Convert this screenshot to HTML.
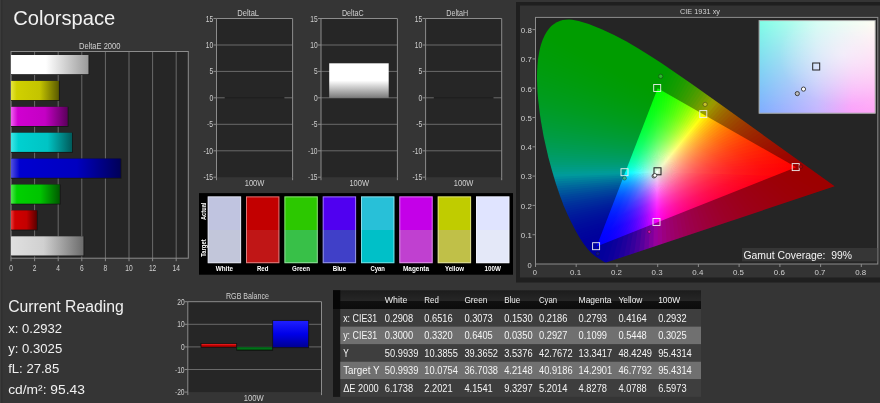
<!DOCTYPE html>
<html><head><meta charset="utf-8"><title>Colorspace</title>
<style>html,body{margin:0;padding:0;background:#343434;overflow:hidden}svg{display:block;font-family:'Liberation Sans', sans-serif;will-change:transform;-webkit-font-smoothing:antialiased}</style>
</head><body>
<svg width="880" height="403" viewBox="0 0 880 403">
<defs>
<linearGradient id="gW" x1="0" y1="0" x2="1" y2="0"><stop offset="0" stop-color="#ffffff"/><stop offset="0.45" stop-color="#ffffff"/><stop offset="1" stop-color="#9a9a9a"/></linearGradient>
<linearGradient id="gY" x1="0" y1="0" x2="1" y2="0"><stop offset="0" stop-color="#e6e640"/><stop offset="0.12" stop-color="#d0d000"/><stop offset="0.6" stop-color="#c4c400"/><stop offset="1" stop-color="#5a5a00"/></linearGradient>
<linearGradient id="gM" x1="0" y1="0" x2="1" y2="0"><stop offset="0" stop-color="#f060f0"/><stop offset="0.12" stop-color="#d000d0"/><stop offset="0.6" stop-color="#c400c4"/><stop offset="1" stop-color="#5a005a"/></linearGradient>
<linearGradient id="gC" x1="0" y1="0" x2="1" y2="0"><stop offset="0" stop-color="#40e6e6"/><stop offset="0.12" stop-color="#00d0d0"/><stop offset="0.6" stop-color="#00c4c4"/><stop offset="1" stop-color="#005a5a"/></linearGradient>
<linearGradient id="gB" x1="0" y1="0" x2="1" y2="0"><stop offset="0" stop-color="#5050e0"/><stop offset="0.08" stop-color="#0000d0"/><stop offset="0.6" stop-color="#0000c0"/><stop offset="1" stop-color="#000058"/></linearGradient>
<linearGradient id="gG" x1="0" y1="0" x2="1" y2="0"><stop offset="0" stop-color="#50e650"/><stop offset="0.12" stop-color="#00d000"/><stop offset="0.6" stop-color="#00c400"/><stop offset="1" stop-color="#005a00"/></linearGradient>
<linearGradient id="gR" x1="0" y1="0" x2="1" y2="0"><stop offset="0" stop-color="#e64040"/><stop offset="0.15" stop-color="#d00000"/><stop offset="0.6" stop-color="#c40000"/><stop offset="1" stop-color="#5a0000"/></linearGradient>
<linearGradient id="gL" x1="0" y1="0" x2="1" y2="0"><stop offset="0" stop-color="#e0e0e0"/><stop offset="0.45" stop-color="#d0d0d0"/><stop offset="1" stop-color="#6c6c6c"/></linearGradient>
<linearGradient id="gDC" x1="0" y1="0" x2="0" y2="1"><stop offset="0" stop-color="#ffffff"/><stop offset="0.5" stop-color="#ffffff"/><stop offset="1" stop-color="#7a7a7a"/></linearGradient>
<mask id="hs" maskUnits="userSpaceOnUse" x="530" y="10" width="350" height="260"><polygon points="606.1,262.6 605.3,262.5 603.8,261.7 595.3,256.2 591.4,253.0 588.1,249.5 583.8,244.1 580.1,238.6 575.9,231.2 571.0,221.7 567.3,214.1 563.5,205.2 559.7,195.1 555.9,183.7 552.1,171.1 548.4,157.5 545.1,143.1 543.5,135.7 540.9,121.0 539.8,113.6 538.1,99.0 537.5,92.0 537.0,78.5 537.1,72.1 537.4,66.0 537.9,60.0 538.8,54.4 539.8,49.1 541.1,44.2 542.7,39.7 544.6,35.6 546.6,31.9 548.9,28.7 551.3,26.1 554.0,23.9 556.8,22.2 559.7,21.0 562.7,20.1 565.8,19.7 568.9,19.6 572.1,19.8 578.7,21.1 582.0,21.9 588.7,24.1 601.7,29.2 614.1,35.0 626.1,41.3 637.9,48.2 649.6,55.5 661.3,63.1 690.4,83.1 722.1,105.5 834.7,186.3" fill="#fff"/></mask>
<mask id="tri" maskUnits="userSpaceOnUse" x="530" y="10" width="350" height="260"><polygon points="796.2,167.3 657.7,88.2 596.6,246.4" fill="#fff"/></mask>
<linearGradient id="w0" gradientUnits="userSpaceOnUse" x1="657.3" y1="171.7" x2="779.6" y2="173.9"><stop offset="0" stop-color="#ffffff"/><stop offset="0.04" stop-color="#ffdbdc"/><stop offset="0.08" stop-color="#ffbec0"/><stop offset="0.13" stop-color="#ffa0a3"/><stop offset="0.2" stop-color="#ff7d82"/><stop offset="0.3" stop-color="#ff575e"/><stop offset="0.42" stop-color="#ff3940"/><stop offset="0.58" stop-color="#ff1e27"/><stop offset="0.78" stop-color="#ff0b14"/><stop offset="1" stop-color="#ff0007"/></linearGradient>
<linearGradient id="w1" gradientUnits="userSpaceOnUse" x1="657.3" y1="171.7" x2="770.1" y2="177.6"><stop offset="0" stop-color="#ffffff"/><stop offset="0.04" stop-color="#ffdcdf"/><stop offset="0.08" stop-color="#ffc0c4"/><stop offset="0.13" stop-color="#ffa3a9"/><stop offset="0.2" stop-color="#ff8089"/><stop offset="0.3" stop-color="#ff5b66"/><stop offset="0.42" stop-color="#ff3b48"/><stop offset="0.58" stop-color="#ff202e"/><stop offset="0.78" stop-color="#ff0c1a"/><stop offset="1" stop-color="#ff000d"/></linearGradient>
<linearGradient id="w2" gradientUnits="userSpaceOnUse" x1="657.3" y1="171.7" x2="761.9" y2="180.9"><stop offset="0" stop-color="#ffffff"/><stop offset="0.04" stop-color="#ffdee1"/><stop offset="0.08" stop-color="#ffc2c8"/><stop offset="0.13" stop-color="#ffa5ae"/><stop offset="0.2" stop-color="#ff848f"/><stop offset="0.3" stop-color="#ff5e6d"/><stop offset="0.42" stop-color="#ff3e4f"/><stop offset="0.58" stop-color="#ff2235"/><stop offset="0.78" stop-color="#ff0d20"/><stop offset="1" stop-color="#ff0012"/></linearGradient>
<linearGradient id="w3" gradientUnits="userSpaceOnUse" x1="657.3" y1="171.7" x2="754.8" y2="183.7"><stop offset="0" stop-color="#ffffff"/><stop offset="0.04" stop-color="#ffdfe3"/><stop offset="0.08" stop-color="#ffc4cb"/><stop offset="0.13" stop-color="#ffa8b2"/><stop offset="0.2" stop-color="#ff8695"/><stop offset="0.3" stop-color="#ff6173"/><stop offset="0.42" stop-color="#ff4056"/><stop offset="0.58" stop-color="#ff233b"/><stop offset="0.78" stop-color="#ff0d26"/><stop offset="1" stop-color="#ff0017"/></linearGradient>
<linearGradient id="w4" gradientUnits="userSpaceOnUse" x1="657.3" y1="171.7" x2="748.5" y2="186.2"><stop offset="0" stop-color="#ffffff"/><stop offset="0.04" stop-color="#ffe0e4"/><stop offset="0.08" stop-color="#ffc6ce"/><stop offset="0.13" stop-color="#ffaab6"/><stop offset="0.2" stop-color="#ff899a"/><stop offset="0.3" stop-color="#ff6479"/><stop offset="0.42" stop-color="#ff425c"/><stop offset="0.58" stop-color="#ff2542"/><stop offset="0.78" stop-color="#ff0e2c"/><stop offset="1" stop-color="#ff001c"/></linearGradient>
<linearGradient id="w5" gradientUnits="userSpaceOnUse" x1="657.3" y1="171.7" x2="743.0" y2="188.4"><stop offset="0" stop-color="#ffffff"/><stop offset="0.04" stop-color="#ffe1e6"/><stop offset="0.08" stop-color="#ffc7d0"/><stop offset="0.13" stop-color="#ffacb9"/><stop offset="0.2" stop-color="#ff8b9e"/><stop offset="0.3" stop-color="#ff667f"/><stop offset="0.42" stop-color="#ff4562"/><stop offset="0.58" stop-color="#ff2647"/><stop offset="0.78" stop-color="#ff0e31"/><stop offset="1" stop-color="#ff0021"/></linearGradient>
<linearGradient id="w6" gradientUnits="userSpaceOnUse" x1="657.3" y1="171.7" x2="738.0" y2="190.4"><stop offset="0" stop-color="#ffffff"/><stop offset="0.04" stop-color="#ffe2e7"/><stop offset="0.08" stop-color="#ffc8d2"/><stop offset="0.13" stop-color="#ffaebc"/><stop offset="0.2" stop-color="#ff8ea2"/><stop offset="0.3" stop-color="#ff6884"/><stop offset="0.42" stop-color="#ff4668"/><stop offset="0.58" stop-color="#ff274d"/><stop offset="0.78" stop-color="#ff0f37"/><stop offset="1" stop-color="#ff0026"/></linearGradient>
<linearGradient id="w7" gradientUnits="userSpaceOnUse" x1="657.3" y1="171.7" x2="733.5" y2="192.2"><stop offset="0" stop-color="#ffffff"/><stop offset="0.04" stop-color="#ffe3e8"/><stop offset="0.08" stop-color="#ffcad4"/><stop offset="0.13" stop-color="#ffafbf"/><stop offset="0.2" stop-color="#ff8fa6"/><stop offset="0.3" stop-color="#ff6a89"/><stop offset="0.42" stop-color="#ff486d"/><stop offset="0.58" stop-color="#ff2952"/><stop offset="0.78" stop-color="#ff0f3c"/><stop offset="1" stop-color="#ff002b"/></linearGradient>
<linearGradient id="w8" gradientUnits="userSpaceOnUse" x1="657.3" y1="171.7" x2="729.4" y2="193.8"><stop offset="0" stop-color="#ffffff"/><stop offset="0.04" stop-color="#ffe3e9"/><stop offset="0.08" stop-color="#ffcbd6"/><stop offset="0.13" stop-color="#ffb1c2"/><stop offset="0.2" stop-color="#ff91aa"/><stop offset="0.3" stop-color="#ff6c8d"/><stop offset="0.42" stop-color="#ff4a72"/><stop offset="0.58" stop-color="#ff2a58"/><stop offset="0.78" stop-color="#ff1041"/><stop offset="1" stop-color="#ff0030"/></linearGradient>
<linearGradient id="w9" gradientUnits="userSpaceOnUse" x1="657.3" y1="171.7" x2="725.6" y2="195.3"><stop offset="0" stop-color="#ffffff"/><stop offset="0.04" stop-color="#ffe4ea"/><stop offset="0.08" stop-color="#ffccd8"/><stop offset="0.13" stop-color="#ffb2c5"/><stop offset="0.2" stop-color="#ff93ad"/><stop offset="0.3" stop-color="#ff6e91"/><stop offset="0.42" stop-color="#ff4c77"/><stop offset="0.58" stop-color="#ff2b5c"/><stop offset="0.78" stop-color="#ff1046"/><stop offset="1" stop-color="#ff0034"/></linearGradient>
<linearGradient id="w10" gradientUnits="userSpaceOnUse" x1="657.3" y1="171.7" x2="722.2" y2="196.6"><stop offset="0" stop-color="#ffffff"/><stop offset="0.04" stop-color="#ffe5eb"/><stop offset="0.08" stop-color="#ffcdda"/><stop offset="0.13" stop-color="#ffb3c7"/><stop offset="0.2" stop-color="#ff94b0"/><stop offset="0.3" stop-color="#ff7095"/><stop offset="0.42" stop-color="#ff4d7b"/><stop offset="0.58" stop-color="#ff2c61"/><stop offset="0.78" stop-color="#ff114a"/><stop offset="1" stop-color="#ff0039"/></linearGradient>
<linearGradient id="w11" gradientUnits="userSpaceOnUse" x1="657.3" y1="171.7" x2="719.0" y2="197.9"><stop offset="0" stop-color="#ffffff"/><stop offset="0.04" stop-color="#ffe5ec"/><stop offset="0.08" stop-color="#ffcedc"/><stop offset="0.13" stop-color="#ffb4c9"/><stop offset="0.2" stop-color="#ff96b3"/><stop offset="0.3" stop-color="#ff7199"/><stop offset="0.42" stop-color="#ff4f80"/><stop offset="0.58" stop-color="#ff2d66"/><stop offset="0.78" stop-color="#ff114f"/><stop offset="1" stop-color="#ff003d"/></linearGradient>
<linearGradient id="w12" gradientUnits="userSpaceOnUse" x1="657.3" y1="171.7" x2="716.0" y2="199.1"><stop offset="0" stop-color="#ffffff"/><stop offset="0.04" stop-color="#ffe6ed"/><stop offset="0.08" stop-color="#ffcfdd"/><stop offset="0.13" stop-color="#ffb6cb"/><stop offset="0.2" stop-color="#ff97b6"/><stop offset="0.3" stop-color="#ff739d"/><stop offset="0.42" stop-color="#ff5084"/><stop offset="0.58" stop-color="#ff2e6a"/><stop offset="0.78" stop-color="#ff1253"/><stop offset="1" stop-color="#ff0042"/></linearGradient>
<linearGradient id="w13" gradientUnits="userSpaceOnUse" x1="657.3" y1="171.7" x2="713.2" y2="200.2"><stop offset="0" stop-color="#ffffff"/><stop offset="0.04" stop-color="#ffe6ee"/><stop offset="0.08" stop-color="#ffd0de"/><stop offset="0.13" stop-color="#ffb7cd"/><stop offset="0.2" stop-color="#ff98b9"/><stop offset="0.3" stop-color="#ff74a0"/><stop offset="0.42" stop-color="#ff5188"/><stop offset="0.58" stop-color="#ff2f6f"/><stop offset="0.78" stop-color="#ff1258"/><stop offset="1" stop-color="#ff0046"/></linearGradient>
<linearGradient id="w14" gradientUnits="userSpaceOnUse" x1="657.3" y1="171.7" x2="710.5" y2="201.3"><stop offset="0" stop-color="#ffffff"/><stop offset="0.04" stop-color="#ffe7ef"/><stop offset="0.08" stop-color="#ffd0e0"/><stop offset="0.13" stop-color="#ffb8cf"/><stop offset="0.2" stop-color="#ff9abb"/><stop offset="0.3" stop-color="#ff76a3"/><stop offset="0.42" stop-color="#ff538c"/><stop offset="0.58" stop-color="#ff3073"/><stop offset="0.78" stop-color="#ff135c"/><stop offset="1" stop-color="#ff004a"/></linearGradient>
<linearGradient id="w15" gradientUnits="userSpaceOnUse" x1="657.3" y1="171.7" x2="708.1" y2="202.2"><stop offset="0" stop-color="#ffffff"/><stop offset="0.04" stop-color="#ffe7ef"/><stop offset="0.08" stop-color="#ffd1e1"/><stop offset="0.13" stop-color="#ffb9d1"/><stop offset="0.2" stop-color="#ff9bbe"/><stop offset="0.3" stop-color="#ff77a6"/><stop offset="0.42" stop-color="#ff548f"/><stop offset="0.58" stop-color="#ff3177"/><stop offset="0.78" stop-color="#ff1360"/><stop offset="1" stop-color="#ff004f"/></linearGradient>
<linearGradient id="w16" gradientUnits="userSpaceOnUse" x1="657.3" y1="171.7" x2="705.7" y2="203.2"><stop offset="0" stop-color="#ffffff"/><stop offset="0.04" stop-color="#ffe8f0"/><stop offset="0.08" stop-color="#ffd2e2"/><stop offset="0.13" stop-color="#ffb9d3"/><stop offset="0.2" stop-color="#ff9cc0"/><stop offset="0.3" stop-color="#ff78a9"/><stop offset="0.42" stop-color="#ff5593"/><stop offset="0.58" stop-color="#ff327b"/><stop offset="0.78" stop-color="#ff1365"/><stop offset="1" stop-color="#ff0053"/></linearGradient>
<linearGradient id="w17" gradientUnits="userSpaceOnUse" x1="657.3" y1="171.7" x2="703.5" y2="204.1"><stop offset="0" stop-color="#ffffff"/><stop offset="0.04" stop-color="#ffe8f1"/><stop offset="0.08" stop-color="#ffd3e3"/><stop offset="0.13" stop-color="#ffbad5"/><stop offset="0.2" stop-color="#ff9dc2"/><stop offset="0.3" stop-color="#ff79ac"/><stop offset="0.42" stop-color="#ff5696"/><stop offset="0.58" stop-color="#ff327f"/><stop offset="0.78" stop-color="#ff1469"/><stop offset="1" stop-color="#ff0057"/></linearGradient>
<linearGradient id="w18" gradientUnits="userSpaceOnUse" x1="657.3" y1="171.7" x2="701.3" y2="204.9"><stop offset="0" stop-color="#ffffff"/><stop offset="0.04" stop-color="#ffe8f1"/><stop offset="0.08" stop-color="#ffd3e5"/><stop offset="0.13" stop-color="#ffbbd6"/><stop offset="0.2" stop-color="#ff9ec5"/><stop offset="0.3" stop-color="#ff7aaf"/><stop offset="0.42" stop-color="#ff579a"/><stop offset="0.58" stop-color="#ff3383"/><stop offset="0.78" stop-color="#ff146d"/><stop offset="1" stop-color="#ff005b"/></linearGradient>
<linearGradient id="w19" gradientUnits="userSpaceOnUse" x1="657.3" y1="171.7" x2="699.3" y2="205.7"><stop offset="0" stop-color="#ffffff"/><stop offset="0.04" stop-color="#ffe9f2"/><stop offset="0.08" stop-color="#ffd4e6"/><stop offset="0.13" stop-color="#ffbcd8"/><stop offset="0.2" stop-color="#ff9fc7"/><stop offset="0.3" stop-color="#ff7bb2"/><stop offset="0.42" stop-color="#ff589d"/><stop offset="0.58" stop-color="#ff3487"/><stop offset="0.78" stop-color="#ff1571"/><stop offset="1" stop-color="#ff005f"/></linearGradient>
<linearGradient id="w20" gradientUnits="userSpaceOnUse" x1="657.3" y1="171.7" x2="697.3" y2="206.5"><stop offset="0" stop-color="#ffffff"/><stop offset="0.04" stop-color="#ffe9f3"/><stop offset="0.08" stop-color="#ffd5e7"/><stop offset="0.13" stop-color="#ffbdd9"/><stop offset="0.2" stop-color="#ffa0c9"/><stop offset="0.3" stop-color="#ff7cb5"/><stop offset="0.42" stop-color="#ff59a0"/><stop offset="0.58" stop-color="#ff358a"/><stop offset="0.78" stop-color="#ff1575"/><stop offset="1" stop-color="#ff0064"/></linearGradient>
<linearGradient id="w21" gradientUnits="userSpaceOnUse" x1="657.3" y1="171.7" x2="695.4" y2="207.3"><stop offset="0" stop-color="#ffffff"/><stop offset="0.04" stop-color="#ffeaf3"/><stop offset="0.08" stop-color="#ffd5e8"/><stop offset="0.13" stop-color="#ffbedb"/><stop offset="0.2" stop-color="#ffa0cb"/><stop offset="0.3" stop-color="#ff7db7"/><stop offset="0.42" stop-color="#ff5aa4"/><stop offset="0.58" stop-color="#ff358e"/><stop offset="0.78" stop-color="#ff1579"/><stop offset="1" stop-color="#ff0068"/></linearGradient>
<linearGradient id="w22" gradientUnits="userSpaceOnUse" x1="657.3" y1="171.7" x2="693.5" y2="208.0"><stop offset="0" stop-color="#ffffff"/><stop offset="0.04" stop-color="#ffeaf4"/><stop offset="0.08" stop-color="#ffd6e9"/><stop offset="0.13" stop-color="#ffbedc"/><stop offset="0.2" stop-color="#ffa1cd"/><stop offset="0.3" stop-color="#ff7eba"/><stop offset="0.42" stop-color="#ff5ba7"/><stop offset="0.58" stop-color="#ff3692"/><stop offset="0.78" stop-color="#ff167d"/><stop offset="1" stop-color="#ff006c"/></linearGradient>
<linearGradient id="w23" gradientUnits="userSpaceOnUse" x1="657.3" y1="171.7" x2="691.8" y2="208.7"><stop offset="0" stop-color="#ffffff"/><stop offset="0.04" stop-color="#ffeaf4"/><stop offset="0.08" stop-color="#ffd6ea"/><stop offset="0.13" stop-color="#ffbfde"/><stop offset="0.2" stop-color="#ffa2cf"/><stop offset="0.3" stop-color="#ff7fbc"/><stop offset="0.42" stop-color="#ff5caa"/><stop offset="0.58" stop-color="#ff3795"/><stop offset="0.78" stop-color="#ff1681"/><stop offset="1" stop-color="#ff0070"/></linearGradient>
<linearGradient id="w24" gradientUnits="userSpaceOnUse" x1="657.3" y1="171.7" x2="690.0" y2="209.4"><stop offset="0" stop-color="#ffffff"/><stop offset="0.04" stop-color="#ffebf5"/><stop offset="0.08" stop-color="#ffd7eb"/><stop offset="0.13" stop-color="#ffc0df"/><stop offset="0.2" stop-color="#ffa3d1"/><stop offset="0.3" stop-color="#ff80bf"/><stop offset="0.42" stop-color="#ff5cad"/><stop offset="0.58" stop-color="#ff3799"/><stop offset="0.78" stop-color="#ff1685"/><stop offset="1" stop-color="#ff0074"/></linearGradient>
<linearGradient id="w25" gradientUnits="userSpaceOnUse" x1="657.3" y1="171.7" x2="688.3" y2="210.1"><stop offset="0" stop-color="#ffffff"/><stop offset="0.04" stop-color="#ffebf5"/><stop offset="0.08" stop-color="#ffd7ec"/><stop offset="0.13" stop-color="#ffc1e1"/><stop offset="0.2" stop-color="#ffa4d3"/><stop offset="0.3" stop-color="#ff80c2"/><stop offset="0.42" stop-color="#ff5db0"/><stop offset="0.58" stop-color="#ff389d"/><stop offset="0.78" stop-color="#ff1689"/><stop offset="1" stop-color="#ff0079"/></linearGradient>
<linearGradient id="w26" gradientUnits="userSpaceOnUse" x1="657.3" y1="171.7" x2="686.7" y2="210.7"><stop offset="0" stop-color="#ffffff"/><stop offset="0.04" stop-color="#ffebf6"/><stop offset="0.08" stop-color="#ffd8ed"/><stop offset="0.13" stop-color="#ffc1e2"/><stop offset="0.2" stop-color="#ffa5d5"/><stop offset="0.3" stop-color="#ff81c4"/><stop offset="0.42" stop-color="#ff5eb3"/><stop offset="0.58" stop-color="#ff38a0"/><stop offset="0.78" stop-color="#ff178d"/><stop offset="1" stop-color="#ff007d"/></linearGradient>
<linearGradient id="w27" gradientUnits="userSpaceOnUse" x1="657.3" y1="171.7" x2="685.0" y2="211.4"><stop offset="0" stop-color="#ffffff"/><stop offset="0.04" stop-color="#ffecf6"/><stop offset="0.08" stop-color="#ffd9ee"/><stop offset="0.13" stop-color="#ffc2e4"/><stop offset="0.2" stop-color="#ffa5d7"/><stop offset="0.3" stop-color="#ff82c7"/><stop offset="0.42" stop-color="#ff5eb6"/><stop offset="0.58" stop-color="#ff39a4"/><stop offset="0.78" stop-color="#ff1792"/><stop offset="1" stop-color="#ff0082"/></linearGradient>
<linearGradient id="w28" gradientUnits="userSpaceOnUse" x1="657.3" y1="171.7" x2="683.4" y2="212.0"><stop offset="0" stop-color="#ffffff"/><stop offset="0.04" stop-color="#ffecf7"/><stop offset="0.08" stop-color="#ffd9ef"/><stop offset="0.13" stop-color="#ffc3e5"/><stop offset="0.2" stop-color="#ffa6d9"/><stop offset="0.3" stop-color="#ff83c9"/><stop offset="0.42" stop-color="#ff5fb9"/><stop offset="0.58" stop-color="#ff39a8"/><stop offset="0.78" stop-color="#ff1796"/><stop offset="1" stop-color="#ff0086"/></linearGradient>
<linearGradient id="w29" gradientUnits="userSpaceOnUse" x1="657.3" y1="171.7" x2="681.9" y2="212.6"><stop offset="0" stop-color="#ffffff"/><stop offset="0.04" stop-color="#ffecf7"/><stop offset="0.08" stop-color="#ffdaf0"/><stop offset="0.13" stop-color="#ffc3e6"/><stop offset="0.2" stop-color="#ffa7db"/><stop offset="0.3" stop-color="#ff83cc"/><stop offset="0.42" stop-color="#ff60bc"/><stop offset="0.58" stop-color="#ff3aab"/><stop offset="0.78" stop-color="#ff179a"/><stop offset="1" stop-color="#ff008b"/></linearGradient>
<linearGradient id="w30" gradientUnits="userSpaceOnUse" x1="657.3" y1="171.7" x2="680.3" y2="213.2"><stop offset="0" stop-color="#ffffff"/><stop offset="0.04" stop-color="#ffedf8"/><stop offset="0.08" stop-color="#ffdaf0"/><stop offset="0.13" stop-color="#ffc4e8"/><stop offset="0.2" stop-color="#ffa8dc"/><stop offset="0.3" stop-color="#ff84ce"/><stop offset="0.42" stop-color="#ff60bf"/><stop offset="0.58" stop-color="#ff3aaf"/><stop offset="0.78" stop-color="#ff179e"/><stop offset="1" stop-color="#ff008f"/></linearGradient>
<linearGradient id="w31" gradientUnits="userSpaceOnUse" x1="657.3" y1="171.7" x2="678.7" y2="213.9"><stop offset="0" stop-color="#ffffff"/><stop offset="0.04" stop-color="#ffedf8"/><stop offset="0.08" stop-color="#ffdbf1"/><stop offset="0.13" stop-color="#ffc5e9"/><stop offset="0.2" stop-color="#ffa9de"/><stop offset="0.3" stop-color="#ff85d1"/><stop offset="0.42" stop-color="#ff61c3"/><stop offset="0.58" stop-color="#ff3ab3"/><stop offset="0.78" stop-color="#ff17a3"/><stop offset="1" stop-color="#ff0094"/></linearGradient>
<linearGradient id="w32" gradientUnits="userSpaceOnUse" x1="657.3" y1="171.7" x2="677.2" y2="214.5"><stop offset="0" stop-color="#ffffff"/><stop offset="0.04" stop-color="#ffedf9"/><stop offset="0.08" stop-color="#ffdbf2"/><stop offset="0.13" stop-color="#ffc6eb"/><stop offset="0.2" stop-color="#ffa9e0"/><stop offset="0.3" stop-color="#ff86d3"/><stop offset="0.42" stop-color="#ff61c6"/><stop offset="0.58" stop-color="#ff3bb7"/><stop offset="0.78" stop-color="#ff18a7"/><stop offset="1" stop-color="#ff0099"/></linearGradient>
<linearGradient id="w33" gradientUnits="userSpaceOnUse" x1="657.3" y1="171.7" x2="675.7" y2="215.1"><stop offset="0" stop-color="#ffffff"/><stop offset="0.04" stop-color="#ffedf9"/><stop offset="0.08" stop-color="#ffdcf3"/><stop offset="0.13" stop-color="#ffc6ec"/><stop offset="0.2" stop-color="#ffaae2"/><stop offset="0.3" stop-color="#ff86d6"/><stop offset="0.42" stop-color="#ff62c9"/><stop offset="0.58" stop-color="#ff3bbb"/><stop offset="0.78" stop-color="#ff18ac"/><stop offset="1" stop-color="#ff009e"/></linearGradient>
<linearGradient id="w34" gradientUnits="userSpaceOnUse" x1="657.3" y1="171.7" x2="674.2" y2="215.7"><stop offset="0" stop-color="#ffffff"/><stop offset="0.04" stop-color="#ffeefa"/><stop offset="0.08" stop-color="#ffdcf4"/><stop offset="0.13" stop-color="#ffc7ed"/><stop offset="0.2" stop-color="#ffabe5"/><stop offset="0.3" stop-color="#ff87d9"/><stop offset="0.42" stop-color="#ff62cd"/><stop offset="0.58" stop-color="#ff3bbf"/><stop offset="0.78" stop-color="#ff17b1"/><stop offset="1" stop-color="#ff00a4"/></linearGradient>
<linearGradient id="w35" gradientUnits="userSpaceOnUse" x1="657.3" y1="171.7" x2="672.6" y2="216.3"><stop offset="0" stop-color="#ffffff"/><stop offset="0.04" stop-color="#ffeefa"/><stop offset="0.08" stop-color="#ffddf5"/><stop offset="0.13" stop-color="#ffc8ef"/><stop offset="0.2" stop-color="#fface7"/><stop offset="0.3" stop-color="#ff88dc"/><stop offset="0.42" stop-color="#ff63d0"/><stop offset="0.58" stop-color="#ff3bc3"/><stop offset="0.78" stop-color="#ff17b6"/><stop offset="1" stop-color="#ff00a9"/></linearGradient>
<linearGradient id="w36" gradientUnits="userSpaceOnUse" x1="657.3" y1="171.7" x2="671.1" y2="216.9"><stop offset="0" stop-color="#ffffff"/><stop offset="0.04" stop-color="#ffeefb"/><stop offset="0.08" stop-color="#ffdef6"/><stop offset="0.13" stop-color="#ffc9f0"/><stop offset="0.2" stop-color="#ffade9"/><stop offset="0.3" stop-color="#ff88df"/><stop offset="0.42" stop-color="#ff63d4"/><stop offset="0.58" stop-color="#ff3bc8"/><stop offset="0.78" stop-color="#ff17bb"/><stop offset="1" stop-color="#ff00af"/></linearGradient>
<linearGradient id="w37" gradientUnits="userSpaceOnUse" x1="657.3" y1="171.7" x2="669.5" y2="217.5"><stop offset="0" stop-color="#ffffff"/><stop offset="0.04" stop-color="#ffeffb"/><stop offset="0.08" stop-color="#ffdef7"/><stop offset="0.13" stop-color="#ffc9f2"/><stop offset="0.2" stop-color="#ffaeeb"/><stop offset="0.3" stop-color="#ff89e2"/><stop offset="0.42" stop-color="#ff64d8"/><stop offset="0.58" stop-color="#ff3bcc"/><stop offset="0.78" stop-color="#ff17c0"/><stop offset="1" stop-color="#ff00b5"/></linearGradient>
<linearGradient id="w38" gradientUnits="userSpaceOnUse" x1="657.3" y1="171.7" x2="668.0" y2="218.1"><stop offset="0" stop-color="#ffffff"/><stop offset="0.04" stop-color="#ffeffc"/><stop offset="0.08" stop-color="#ffdff8"/><stop offset="0.13" stop-color="#ffcaf3"/><stop offset="0.2" stop-color="#ffaeed"/><stop offset="0.3" stop-color="#ff8ae5"/><stop offset="0.42" stop-color="#ff64dc"/><stop offset="0.58" stop-color="#ff3bd1"/><stop offset="0.78" stop-color="#ff17c6"/><stop offset="1" stop-color="#ff00bc"/></linearGradient>
<linearGradient id="w39" gradientUnits="userSpaceOnUse" x1="657.3" y1="171.7" x2="666.4" y2="218.7"><stop offset="0" stop-color="#ffffff"/><stop offset="0.04" stop-color="#ffeffc"/><stop offset="0.08" stop-color="#ffdff9"/><stop offset="0.13" stop-color="#ffcbf5"/><stop offset="0.2" stop-color="#ffaff0"/><stop offset="0.3" stop-color="#ff8be8"/><stop offset="0.42" stop-color="#ff64e0"/><stop offset="0.58" stop-color="#ff3bd7"/><stop offset="0.78" stop-color="#ff16cd"/><stop offset="1" stop-color="#ff00c3"/></linearGradient>
<linearGradient id="w40" gradientUnits="userSpaceOnUse" x1="657.3" y1="171.7" x2="664.8" y2="219.4"><stop offset="0" stop-color="#ffffff"/><stop offset="0.04" stop-color="#fff0fd"/><stop offset="0.08" stop-color="#ffe0fa"/><stop offset="0.13" stop-color="#ffccf7"/><stop offset="0.2" stop-color="#ffb0f2"/><stop offset="0.3" stop-color="#ff8cec"/><stop offset="0.42" stop-color="#ff65e5"/><stop offset="0.58" stop-color="#ff3bdd"/><stop offset="0.78" stop-color="#ff16d3"/><stop offset="1" stop-color="#ff00cb"/></linearGradient>
<linearGradient id="w41" gradientUnits="userSpaceOnUse" x1="657.3" y1="171.7" x2="663.2" y2="220.0"><stop offset="0" stop-color="#ffffff"/><stop offset="0.04" stop-color="#fff0fd"/><stop offset="0.08" stop-color="#ffe0fb"/><stop offset="0.13" stop-color="#ffcdf8"/><stop offset="0.2" stop-color="#ffb1f5"/><stop offset="0.3" stop-color="#ff8df0"/><stop offset="0.42" stop-color="#ff65ea"/><stop offset="0.58" stop-color="#ff3be3"/><stop offset="0.78" stop-color="#ff15db"/><stop offset="1" stop-color="#ff00d4"/></linearGradient>
<linearGradient id="w42" gradientUnits="userSpaceOnUse" x1="657.3" y1="171.7" x2="661.6" y2="220.7"><stop offset="0" stop-color="#ffffff"/><stop offset="0.04" stop-color="#fff0fe"/><stop offset="0.08" stop-color="#ffe1fc"/><stop offset="0.13" stop-color="#ffcefa"/><stop offset="0.2" stop-color="#ffb2f7"/><stop offset="0.3" stop-color="#ff8df3"/><stop offset="0.42" stop-color="#ff66ef"/><stop offset="0.58" stop-color="#ff3bea"/><stop offset="0.78" stop-color="#ff15e3"/><stop offset="1" stop-color="#ff00dd"/></linearGradient>
<linearGradient id="w43" gradientUnits="userSpaceOnUse" x1="657.3" y1="171.7" x2="659.9" y2="221.3"><stop offset="0" stop-color="#ffffff"/><stop offset="0.04" stop-color="#fff1fe"/><stop offset="0.08" stop-color="#ffe2fd"/><stop offset="0.13" stop-color="#ffcffc"/><stop offset="0.2" stop-color="#ffb4fa"/><stop offset="0.3" stop-color="#ff8ef8"/><stop offset="0.42" stop-color="#ff66f5"/><stop offset="0.58" stop-color="#ff3bf1"/><stop offset="0.78" stop-color="#ff14ed"/><stop offset="1" stop-color="#ff00e9"/></linearGradient>
<linearGradient id="w44" gradientUnits="userSpaceOnUse" x1="657.3" y1="171.7" x2="658.2" y2="222.0"><stop offset="0" stop-color="#ffffff"/><stop offset="0.04" stop-color="#fff1ff"/><stop offset="0.08" stop-color="#ffe2fe"/><stop offset="0.13" stop-color="#ffd0fe"/><stop offset="0.2" stop-color="#ffb5fd"/><stop offset="0.3" stop-color="#ff90fc"/><stop offset="0.42" stop-color="#ff67fb"/><stop offset="0.58" stop-color="#ff3af9"/><stop offset="0.78" stop-color="#ff14f7"/><stop offset="1" stop-color="#ff00f6"/></linearGradient>
<linearGradient id="w45" gradientUnits="userSpaceOnUse" x1="657.3" y1="171.7" x2="656.4" y2="222.7"><stop offset="0" stop-color="#ffffff"/><stop offset="0.04" stop-color="#fff1ff"/><stop offset="0.08" stop-color="#ffe3ff"/><stop offset="0.13" stop-color="#fed0ff"/><stop offset="0.2" stop-color="#feb5ff"/><stop offset="0.3" stop-color="#fd90ff"/><stop offset="0.42" stop-color="#fd67ff"/><stop offset="0.58" stop-color="#fc39ff"/><stop offset="0.78" stop-color="#fa13ff"/><stop offset="1" stop-color="#f900ff"/></linearGradient>
<linearGradient id="w46" gradientUnits="userSpaceOnUse" x1="657.3" y1="171.7" x2="654.6" y2="223.4"><stop offset="0" stop-color="#ffffff"/><stop offset="0.04" stop-color="#fef1ff"/><stop offset="0.08" stop-color="#fde2ff"/><stop offset="0.13" stop-color="#fccfff"/><stop offset="0.2" stop-color="#fbb4ff"/><stop offset="0.3" stop-color="#f88eff"/><stop offset="0.42" stop-color="#f664ff"/><stop offset="0.58" stop-color="#f237ff"/><stop offset="0.78" stop-color="#ee11ff"/><stop offset="1" stop-color="#e900ff"/></linearGradient>
<linearGradient id="w47" gradientUnits="userSpaceOnUse" x1="657.3" y1="171.7" x2="652.7" y2="224.2"><stop offset="0" stop-color="#ffffff"/><stop offset="0.04" stop-color="#fef1ff"/><stop offset="0.08" stop-color="#fce2ff"/><stop offset="0.13" stop-color="#faceff"/><stop offset="0.2" stop-color="#f7b2ff"/><stop offset="0.3" stop-color="#f38cff"/><stop offset="0.42" stop-color="#ee61ff"/><stop offset="0.58" stop-color="#e834ff"/><stop offset="0.78" stop-color="#e010ff"/><stop offset="1" stop-color="#d800ff"/></linearGradient>
<linearGradient id="w48" gradientUnits="userSpaceOnUse" x1="657.3" y1="171.7" x2="650.7" y2="225.0"><stop offset="0" stop-color="#ffffff"/><stop offset="0.04" stop-color="#fdf1ff"/><stop offset="0.08" stop-color="#fbe1ff"/><stop offset="0.13" stop-color="#f8cdff"/><stop offset="0.2" stop-color="#f4b1ff"/><stop offset="0.3" stop-color="#ee89ff"/><stop offset="0.42" stop-color="#e65fff"/><stop offset="0.58" stop-color="#dd32ff"/><stop offset="0.78" stop-color="#d20eff"/><stop offset="1" stop-color="#c700ff"/></linearGradient>
<linearGradient id="w49" gradientUnits="userSpaceOnUse" x1="657.3" y1="171.7" x2="648.7" y2="225.8"><stop offset="0" stop-color="#ffffff"/><stop offset="0.04" stop-color="#fcf0ff"/><stop offset="0.08" stop-color="#f9e1ff"/><stop offset="0.13" stop-color="#f6cdff"/><stop offset="0.2" stop-color="#f0b0ff"/><stop offset="0.3" stop-color="#e887ff"/><stop offset="0.42" stop-color="#de5cff"/><stop offset="0.58" stop-color="#d22fff"/><stop offset="0.78" stop-color="#c40dff"/><stop offset="1" stop-color="#b600ff"/></linearGradient>
<linearGradient id="w50" gradientUnits="userSpaceOnUse" x1="657.3" y1="171.7" x2="646.6" y2="226.6"><stop offset="0" stop-color="#ffffff"/><stop offset="0.04" stop-color="#fcf0ff"/><stop offset="0.08" stop-color="#f8e0ff"/><stop offset="0.13" stop-color="#f3ccff"/><stop offset="0.2" stop-color="#ecaeff"/><stop offset="0.3" stop-color="#e285ff"/><stop offset="0.42" stop-color="#d65aff"/><stop offset="0.58" stop-color="#c62dff"/><stop offset="0.78" stop-color="#b50cff"/><stop offset="1" stop-color="#a400ff"/></linearGradient>
<linearGradient id="w51" gradientUnits="userSpaceOnUse" x1="657.3" y1="171.7" x2="644.4" y2="227.5"><stop offset="0" stop-color="#ffffff"/><stop offset="0.04" stop-color="#fbf0ff"/><stop offset="0.08" stop-color="#f6e0ff"/><stop offset="0.13" stop-color="#f1cbff"/><stop offset="0.2" stop-color="#e8acff"/><stop offset="0.3" stop-color="#dc83ff"/><stop offset="0.42" stop-color="#cd57ff"/><stop offset="0.58" stop-color="#bb2bff"/><stop offset="0.78" stop-color="#a60bff"/><stop offset="1" stop-color="#9300ff"/></linearGradient>
<linearGradient id="w52" gradientUnits="userSpaceOnUse" x1="657.3" y1="171.7" x2="642.1" y2="228.4"><stop offset="0" stop-color="#ffffff"/><stop offset="0.04" stop-color="#faf0ff"/><stop offset="0.08" stop-color="#f5dfff"/><stop offset="0.13" stop-color="#eecaff"/><stop offset="0.2" stop-color="#e4abff"/><stop offset="0.3" stop-color="#d580ff"/><stop offset="0.42" stop-color="#c454ff"/><stop offset="0.58" stop-color="#ae29ff"/><stop offset="0.78" stop-color="#970aff"/><stop offset="1" stop-color="#8200ff"/></linearGradient>
<linearGradient id="w53" gradientUnits="userSpaceOnUse" x1="657.3" y1="171.7" x2="639.7" y2="229.3"><stop offset="0" stop-color="#ffffff"/><stop offset="0.04" stop-color="#f9efff"/><stop offset="0.08" stop-color="#f3dfff"/><stop offset="0.13" stop-color="#ebc9ff"/><stop offset="0.2" stop-color="#dfa9ff"/><stop offset="0.3" stop-color="#ce7eff"/><stop offset="0.42" stop-color="#ba52ff"/><stop offset="0.58" stop-color="#a227ff"/><stop offset="0.78" stop-color="#890aff"/><stop offset="1" stop-color="#7200ff"/></linearGradient>
<linearGradient id="w54" gradientUnits="userSpaceOnUse" x1="657.3" y1="171.7" x2="637.1" y2="230.4"><stop offset="0" stop-color="#ffffff"/><stop offset="0.04" stop-color="#f8efff"/><stop offset="0.08" stop-color="#f1deff"/><stop offset="0.13" stop-color="#e8c8ff"/><stop offset="0.2" stop-color="#daa7ff"/><stop offset="0.3" stop-color="#c67cff"/><stop offset="0.42" stop-color="#b04fff"/><stop offset="0.58" stop-color="#9525ff"/><stop offset="0.78" stop-color="#7a09ff"/><stop offset="1" stop-color="#6300ff"/></linearGradient>
<linearGradient id="w55" gradientUnits="userSpaceOnUse" x1="657.3" y1="171.7" x2="634.4" y2="231.5"><stop offset="0" stop-color="#ffffff"/><stop offset="0.04" stop-color="#f8efff"/><stop offset="0.08" stop-color="#f0ddff"/><stop offset="0.13" stop-color="#e5c6ff"/><stop offset="0.2" stop-color="#d5a5ff"/><stop offset="0.3" stop-color="#bf79ff"/><stop offset="0.42" stop-color="#a54dff"/><stop offset="0.58" stop-color="#8924ff"/><stop offset="0.78" stop-color="#6c09ff"/><stop offset="1" stop-color="#5400ff"/></linearGradient>
<linearGradient id="w56" gradientUnits="userSpaceOnUse" x1="657.3" y1="171.7" x2="631.4" y2="232.6"><stop offset="0" stop-color="#ffffff"/><stop offset="0.04" stop-color="#f7efff"/><stop offset="0.08" stop-color="#edddff"/><stop offset="0.13" stop-color="#e1c5ff"/><stop offset="0.2" stop-color="#cfa3ff"/><stop offset="0.3" stop-color="#b677ff"/><stop offset="0.42" stop-color="#9b4bff"/><stop offset="0.58" stop-color="#7c22ff"/><stop offset="0.78" stop-color="#5e08ff"/><stop offset="1" stop-color="#4600ff"/></linearGradient>
<linearGradient id="w57" gradientUnits="userSpaceOnUse" x1="657.3" y1="171.7" x2="628.3" y2="233.8"><stop offset="0" stop-color="#ffffff"/><stop offset="0.04" stop-color="#f6eeff"/><stop offset="0.08" stop-color="#ebdcff"/><stop offset="0.13" stop-color="#ddc4ff"/><stop offset="0.2" stop-color="#c9a1ff"/><stop offset="0.3" stop-color="#ad74ff"/><stop offset="0.42" stop-color="#9048ff"/><stop offset="0.58" stop-color="#6f21ff"/><stop offset="0.78" stop-color="#5108ff"/><stop offset="1" stop-color="#3900ff"/></linearGradient>
<linearGradient id="w58" gradientUnits="userSpaceOnUse" x1="657.3" y1="171.7" x2="625.0" y2="235.2"><stop offset="0" stop-color="#ffffff"/><stop offset="0.04" stop-color="#f4eeff"/><stop offset="0.08" stop-color="#e9dbff"/><stop offset="0.13" stop-color="#d9c2ff"/><stop offset="0.2" stop-color="#c39fff"/><stop offset="0.3" stop-color="#a471ff"/><stop offset="0.42" stop-color="#8446ff"/><stop offset="0.58" stop-color="#6220ff"/><stop offset="0.78" stop-color="#4407ff"/><stop offset="1" stop-color="#2d00ff"/></linearGradient>
<linearGradient id="w59" gradientUnits="userSpaceOnUse" x1="657.3" y1="171.7" x2="621.3" y2="236.6"><stop offset="0" stop-color="#ffffff"/><stop offset="0.04" stop-color="#f3edff"/><stop offset="0.08" stop-color="#e6daff"/><stop offset="0.13" stop-color="#d5c1ff"/><stop offset="0.2" stop-color="#bc9dff"/><stop offset="0.3" stop-color="#9a6fff"/><stop offset="0.42" stop-color="#7844ff"/><stop offset="0.58" stop-color="#561fff"/><stop offset="0.78" stop-color="#3707ff"/><stop offset="1" stop-color="#2200ff"/></linearGradient>
<linearGradient id="w60" gradientUnits="userSpaceOnUse" x1="657.3" y1="171.7" x2="617.4" y2="238.2"><stop offset="0" stop-color="#ffffff"/><stop offset="0.04" stop-color="#f2edff"/><stop offset="0.08" stop-color="#e3d9ff"/><stop offset="0.13" stop-color="#d0bfff"/><stop offset="0.2" stop-color="#b49aff"/><stop offset="0.3" stop-color="#906cff"/><stop offset="0.42" stop-color="#6c42ff"/><stop offset="0.58" stop-color="#491eff"/><stop offset="0.78" stop-color="#2c07ff"/><stop offset="1" stop-color="#1800ff"/></linearGradient>
<linearGradient id="w61" gradientUnits="userSpaceOnUse" x1="657.3" y1="171.7" x2="613.0" y2="239.9"><stop offset="0" stop-color="#ffffff"/><stop offset="0.04" stop-color="#f0edff"/><stop offset="0.08" stop-color="#e0d8ff"/><stop offset="0.13" stop-color="#cbbdff"/><stop offset="0.2" stop-color="#ac98ff"/><stop offset="0.3" stop-color="#856aff"/><stop offset="0.42" stop-color="#6040ff"/><stop offset="0.58" stop-color="#3d1cff"/><stop offset="0.78" stop-color="#2007ff"/><stop offset="1" stop-color="#0f00ff"/></linearGradient>
<linearGradient id="w62" gradientUnits="userSpaceOnUse" x1="657.3" y1="171.7" x2="608.2" y2="241.8"><stop offset="0" stop-color="#ffffff"/><stop offset="0.04" stop-color="#efecff"/><stop offset="0.08" stop-color="#ddd7ff"/><stop offset="0.13" stop-color="#c5bbff"/><stop offset="0.2" stop-color="#a495ff"/><stop offset="0.3" stop-color="#7a67ff"/><stop offset="0.42" stop-color="#543eff"/><stop offset="0.58" stop-color="#311bff"/><stop offset="0.78" stop-color="#1606ff"/><stop offset="1" stop-color="#0800ff"/></linearGradient>
<linearGradient id="w63" gradientUnits="userSpaceOnUse" x1="657.3" y1="171.7" x2="602.9" y2="243.9"><stop offset="0" stop-color="#ffffff"/><stop offset="0.04" stop-color="#edebff"/><stop offset="0.08" stop-color="#d9d6ff"/><stop offset="0.13" stop-color="#beb9ff"/><stop offset="0.2" stop-color="#9a92ff"/><stop offset="0.3" stop-color="#6e64ff"/><stop offset="0.42" stop-color="#473cff"/><stop offset="0.58" stop-color="#251aff"/><stop offset="0.78" stop-color="#0d06ff"/><stop offset="1" stop-color="#0200ff"/></linearGradient>
<linearGradient id="w64" gradientUnits="userSpaceOnUse" x1="657.3" y1="171.7" x2="596.9" y2="246.3"><stop offset="0" stop-color="#ffffff"/><stop offset="0.04" stop-color="#ebebff"/><stop offset="0.08" stop-color="#d4d4ff"/><stop offset="0.13" stop-color="#b7b7ff"/><stop offset="0.2" stop-color="#908fff"/><stop offset="0.3" stop-color="#6261ff"/><stop offset="0.42" stop-color="#3a3aff"/><stop offset="0.58" stop-color="#1a19ff"/><stop offset="0.78" stop-color="#0606ff"/><stop offset="1" stop-color="#0000ff"/></linearGradient>
<linearGradient id="w65" gradientUnits="userSpaceOnUse" x1="657.3" y1="171.7" x2="600.0" y2="237.7"><stop offset="0" stop-color="#ffffff"/><stop offset="0.04" stop-color="#ecedff"/><stop offset="0.08" stop-color="#d7d9ff"/><stop offset="0.13" stop-color="#bbbfff"/><stop offset="0.2" stop-color="#949bff"/><stop offset="0.3" stop-color="#666fff"/><stop offset="0.42" stop-color="#3e48ff"/><stop offset="0.58" stop-color="#1b25ff"/><stop offset="0.78" stop-color="#060dff"/><stop offset="1" stop-color="#0002ff"/></linearGradient>
<linearGradient id="w66" gradientUnits="userSpaceOnUse" x1="657.3" y1="171.7" x2="602.9" y2="230.0"><stop offset="0" stop-color="#ffffff"/><stop offset="0.04" stop-color="#edefff"/><stop offset="0.08" stop-color="#d9deff"/><stop offset="0.13" stop-color="#bec7ff"/><stop offset="0.2" stop-color="#99a6ff"/><stop offset="0.3" stop-color="#6b7dff"/><stop offset="0.42" stop-color="#4156ff"/><stop offset="0.58" stop-color="#1d31ff"/><stop offset="0.78" stop-color="#0716ff"/><stop offset="1" stop-color="#0007ff"/></linearGradient>
<linearGradient id="w67" gradientUnits="userSpaceOnUse" x1="657.3" y1="171.7" x2="605.4" y2="223.6"><stop offset="0" stop-color="#ffffff"/><stop offset="0.04" stop-color="#eef1ff"/><stop offset="0.08" stop-color="#dbe2ff"/><stop offset="0.13" stop-color="#c1cdff"/><stop offset="0.2" stop-color="#9dafff"/><stop offset="0.3" stop-color="#6f89ff"/><stop offset="0.42" stop-color="#4563ff"/><stop offset="0.58" stop-color="#1f3eff"/><stop offset="0.78" stop-color="#0720ff"/><stop offset="1" stop-color="#000dff"/></linearGradient>
<linearGradient id="w68" gradientUnits="userSpaceOnUse" x1="657.3" y1="171.7" x2="607.5" y2="218.1"><stop offset="0" stop-color="#ffffff"/><stop offset="0.04" stop-color="#eef3ff"/><stop offset="0.08" stop-color="#dce5ff"/><stop offset="0.13" stop-color="#c4d2ff"/><stop offset="0.2" stop-color="#a1b8ff"/><stop offset="0.3" stop-color="#7394ff"/><stop offset="0.42" stop-color="#486fff"/><stop offset="0.58" stop-color="#214aff"/><stop offset="0.78" stop-color="#082aff"/><stop offset="1" stop-color="#0015ff"/></linearGradient>
<linearGradient id="w69" gradientUnits="userSpaceOnUse" x1="657.3" y1="171.7" x2="609.3" y2="213.4"><stop offset="0" stop-color="#ffffff"/><stop offset="0.04" stop-color="#eff4ff"/><stop offset="0.08" stop-color="#dee8ff"/><stop offset="0.13" stop-color="#c6d7ff"/><stop offset="0.2" stop-color="#a4bfff"/><stop offset="0.3" stop-color="#779dff"/><stop offset="0.42" stop-color="#4b7aff"/><stop offset="0.58" stop-color="#2356ff"/><stop offset="0.78" stop-color="#0835ff"/><stop offset="1" stop-color="#001eff"/></linearGradient>
<linearGradient id="w70" gradientUnits="userSpaceOnUse" x1="657.3" y1="171.7" x2="610.9" y2="209.3"><stop offset="0" stop-color="#ffffff"/><stop offset="0.04" stop-color="#f0f5ff"/><stop offset="0.08" stop-color="#dfeaff"/><stop offset="0.13" stop-color="#c8dbff"/><stop offset="0.2" stop-color="#a7c5ff"/><stop offset="0.3" stop-color="#7aa7ff"/><stop offset="0.42" stop-color="#4e85ff"/><stop offset="0.58" stop-color="#2561ff"/><stop offset="0.78" stop-color="#0940ff"/><stop offset="1" stop-color="#0027ff"/></linearGradient>
<linearGradient id="w71" gradientUnits="userSpaceOnUse" x1="657.3" y1="171.7" x2="612.4" y2="205.6"><stop offset="0" stop-color="#ffffff"/><stop offset="0.04" stop-color="#f0f6ff"/><stop offset="0.08" stop-color="#e0ecff"/><stop offset="0.13" stop-color="#cadfff"/><stop offset="0.2" stop-color="#aacbff"/><stop offset="0.3" stop-color="#7eafff"/><stop offset="0.42" stop-color="#5190ff"/><stop offset="0.58" stop-color="#276dff"/><stop offset="0.78" stop-color="#094bff"/><stop offset="1" stop-color="#0031ff"/></linearGradient>
<linearGradient id="w72" gradientUnits="userSpaceOnUse" x1="657.3" y1="171.7" x2="613.6" y2="202.3"><stop offset="0" stop-color="#ffffff"/><stop offset="0.04" stop-color="#f1f7ff"/><stop offset="0.08" stop-color="#e1eeff"/><stop offset="0.13" stop-color="#cbe2ff"/><stop offset="0.2" stop-color="#acd0ff"/><stop offset="0.3" stop-color="#81b6ff"/><stop offset="0.42" stop-color="#5499ff"/><stop offset="0.58" stop-color="#2878ff"/><stop offset="0.78" stop-color="#0a56ff"/><stop offset="1" stop-color="#003bff"/></linearGradient>
<linearGradient id="w73" gradientUnits="userSpaceOnUse" x1="657.3" y1="171.7" x2="614.8" y2="199.3"><stop offset="0" stop-color="#ffffff"/><stop offset="0.04" stop-color="#f1f8ff"/><stop offset="0.08" stop-color="#e2f0ff"/><stop offset="0.13" stop-color="#cde5ff"/><stop offset="0.2" stop-color="#aed5ff"/><stop offset="0.3" stop-color="#83bdff"/><stop offset="0.42" stop-color="#57a2ff"/><stop offset="0.58" stop-color="#2a82ff"/><stop offset="0.78" stop-color="#0a61ff"/><stop offset="1" stop-color="#0046ff"/></linearGradient>
<linearGradient id="w74" gradientUnits="userSpaceOnUse" x1="657.3" y1="171.7" x2="615.8" y2="196.7"><stop offset="0" stop-color="#ffffff"/><stop offset="0.04" stop-color="#f1f9ff"/><stop offset="0.08" stop-color="#e2f1ff"/><stop offset="0.13" stop-color="#cee8ff"/><stop offset="0.2" stop-color="#b0d9ff"/><stop offset="0.3" stop-color="#86c4ff"/><stop offset="0.42" stop-color="#59abff"/><stop offset="0.58" stop-color="#2c8cff"/><stop offset="0.78" stop-color="#0b6dff"/><stop offset="1" stop-color="#0051ff"/></linearGradient>
<linearGradient id="w75" gradientUnits="userSpaceOnUse" x1="657.3" y1="171.7" x2="616.8" y2="194.2"><stop offset="0" stop-color="#ffffff"/><stop offset="0.04" stop-color="#f2f9ff"/><stop offset="0.08" stop-color="#e3f3ff"/><stop offset="0.13" stop-color="#cfeaff"/><stop offset="0.2" stop-color="#b2ddff"/><stop offset="0.3" stop-color="#88caff"/><stop offset="0.42" stop-color="#5cb3ff"/><stop offset="0.58" stop-color="#2e96ff"/><stop offset="0.78" stop-color="#0c78ff"/><stop offset="1" stop-color="#005cff"/></linearGradient>
<linearGradient id="w76" gradientUnits="userSpaceOnUse" x1="657.3" y1="171.7" x2="617.6" y2="191.9"><stop offset="0" stop-color="#ffffff"/><stop offset="0.04" stop-color="#f2faff"/><stop offset="0.08" stop-color="#e4f4ff"/><stop offset="0.13" stop-color="#d0ecff"/><stop offset="0.2" stop-color="#b4e1ff"/><stop offset="0.3" stop-color="#8bcfff"/><stop offset="0.42" stop-color="#5ebaff"/><stop offset="0.58" stop-color="#2fa0ff"/><stop offset="0.78" stop-color="#0c83ff"/><stop offset="1" stop-color="#0068ff"/></linearGradient>
<linearGradient id="w77" gradientUnits="userSpaceOnUse" x1="657.3" y1="171.7" x2="618.4" y2="189.8"><stop offset="0" stop-color="#ffffff"/><stop offset="0.04" stop-color="#f2faff"/><stop offset="0.08" stop-color="#e4f5ff"/><stop offset="0.13" stop-color="#d1efff"/><stop offset="0.2" stop-color="#b5e4ff"/><stop offset="0.3" stop-color="#8dd5ff"/><stop offset="0.42" stop-color="#61c2ff"/><stop offset="0.58" stop-color="#31a9ff"/><stop offset="0.78" stop-color="#0d8eff"/><stop offset="1" stop-color="#0074ff"/></linearGradient>
<linearGradient id="w78" gradientUnits="userSpaceOnUse" x1="657.3" y1="171.7" x2="619.2" y2="187.9"><stop offset="0" stop-color="#ffffff"/><stop offset="0.04" stop-color="#f2fbff"/><stop offset="0.08" stop-color="#e5f6ff"/><stop offset="0.13" stop-color="#d2f0ff"/><stop offset="0.2" stop-color="#b7e7ff"/><stop offset="0.3" stop-color="#8fd9ff"/><stop offset="0.42" stop-color="#63c8ff"/><stop offset="0.58" stop-color="#33b2ff"/><stop offset="0.78" stop-color="#0e98ff"/><stop offset="1" stop-color="#0080ff"/></linearGradient>
<linearGradient id="w79" gradientUnits="userSpaceOnUse" x1="657.3" y1="171.7" x2="619.9" y2="186.1"><stop offset="0" stop-color="#ffffff"/><stop offset="0.04" stop-color="#f3fbff"/><stop offset="0.08" stop-color="#e5f7ff"/><stop offset="0.13" stop-color="#d3f2ff"/><stop offset="0.2" stop-color="#b8eaff"/><stop offset="0.3" stop-color="#91deff"/><stop offset="0.42" stop-color="#65cfff"/><stop offset="0.58" stop-color="#35bbff"/><stop offset="0.78" stop-color="#0ea3ff"/><stop offset="1" stop-color="#008cff"/></linearGradient>
<linearGradient id="w80" gradientUnits="userSpaceOnUse" x1="657.3" y1="171.7" x2="620.6" y2="184.4"><stop offset="0" stop-color="#ffffff"/><stop offset="0.04" stop-color="#f3fcff"/><stop offset="0.08" stop-color="#e6f8ff"/><stop offset="0.13" stop-color="#d4f4ff"/><stop offset="0.2" stop-color="#b9edff"/><stop offset="0.3" stop-color="#93e2ff"/><stop offset="0.42" stop-color="#67d5ff"/><stop offset="0.58" stop-color="#37c3ff"/><stop offset="0.78" stop-color="#0faeff"/><stop offset="1" stop-color="#0098ff"/></linearGradient>
<linearGradient id="w81" gradientUnits="userSpaceOnUse" x1="657.3" y1="171.7" x2="621.2" y2="182.8"><stop offset="0" stop-color="#ffffff"/><stop offset="0.04" stop-color="#f3fcff"/><stop offset="0.08" stop-color="#e6f9ff"/><stop offset="0.13" stop-color="#d5f5ff"/><stop offset="0.2" stop-color="#bbefff"/><stop offset="0.3" stop-color="#95e6ff"/><stop offset="0.42" stop-color="#69dbff"/><stop offset="0.58" stop-color="#39cbff"/><stop offset="0.78" stop-color="#10b8ff"/><stop offset="1" stop-color="#00a4ff"/></linearGradient>
<linearGradient id="w82" gradientUnits="userSpaceOnUse" x1="657.3" y1="171.7" x2="621.8" y2="181.3"><stop offset="0" stop-color="#ffffff"/><stop offset="0.04" stop-color="#f3fdff"/><stop offset="0.08" stop-color="#e7faff"/><stop offset="0.13" stop-color="#d5f7ff"/><stop offset="0.2" stop-color="#bcf2ff"/><stop offset="0.3" stop-color="#96eaff"/><stop offset="0.42" stop-color="#6ce0ff"/><stop offset="0.58" stop-color="#3bd3ff"/><stop offset="0.78" stop-color="#11c2ff"/><stop offset="1" stop-color="#00b1ff"/></linearGradient>
<linearGradient id="w83" gradientUnits="userSpaceOnUse" x1="657.3" y1="171.7" x2="622.3" y2="179.8"><stop offset="0" stop-color="#ffffff"/><stop offset="0.04" stop-color="#f4fdff"/><stop offset="0.08" stop-color="#e7fbff"/><stop offset="0.13" stop-color="#d6f8ff"/><stop offset="0.2" stop-color="#bdf4ff"/><stop offset="0.3" stop-color="#98eeff"/><stop offset="0.42" stop-color="#6ee5ff"/><stop offset="0.58" stop-color="#3ddaff"/><stop offset="0.78" stop-color="#12ccff"/><stop offset="1" stop-color="#00bdff"/></linearGradient>
<linearGradient id="w84" gradientUnits="userSpaceOnUse" x1="657.3" y1="171.7" x2="622.8" y2="178.4"><stop offset="0" stop-color="#ffffff"/><stop offset="0.04" stop-color="#f4fdff"/><stop offset="0.08" stop-color="#e7fcff"/><stop offset="0.13" stop-color="#d7faff"/><stop offset="0.2" stop-color="#bef6ff"/><stop offset="0.3" stop-color="#9af1ff"/><stop offset="0.42" stop-color="#70eaff"/><stop offset="0.58" stop-color="#3ee1ff"/><stop offset="0.78" stop-color="#13d6ff"/><stop offset="1" stop-color="#00c9ff"/></linearGradient>
<linearGradient id="w85" gradientUnits="userSpaceOnUse" x1="657.3" y1="171.7" x2="623.4" y2="177.1"><stop offset="0" stop-color="#ffffff"/><stop offset="0.04" stop-color="#f4feff"/><stop offset="0.08" stop-color="#e8fdff"/><stop offset="0.13" stop-color="#d7fbff"/><stop offset="0.2" stop-color="#bff8ff"/><stop offset="0.3" stop-color="#9bf4ff"/><stop offset="0.42" stop-color="#71efff"/><stop offset="0.58" stop-color="#40e8ff"/><stop offset="0.78" stop-color="#14dfff"/><stop offset="1" stop-color="#00d5ff"/></linearGradient>
<linearGradient id="w86" gradientUnits="userSpaceOnUse" x1="657.3" y1="171.7" x2="623.8" y2="175.8"><stop offset="0" stop-color="#ffffff"/><stop offset="0.04" stop-color="#f4feff"/><stop offset="0.08" stop-color="#e8fdff"/><stop offset="0.13" stop-color="#d8fcff"/><stop offset="0.2" stop-color="#c0faff"/><stop offset="0.3" stop-color="#9df7ff"/><stop offset="0.42" stop-color="#73f4ff"/><stop offset="0.58" stop-color="#42efff"/><stop offset="0.78" stop-color="#15e8ff"/><stop offset="1" stop-color="#00e1ff"/></linearGradient>
<linearGradient id="w87" gradientUnits="userSpaceOnUse" x1="657.3" y1="171.7" x2="624.3" y2="174.6"><stop offset="0" stop-color="#ffffff"/><stop offset="0.04" stop-color="#f4ffff"/><stop offset="0.08" stop-color="#e8feff"/><stop offset="0.13" stop-color="#d9fdff"/><stop offset="0.2" stop-color="#c1fcff"/><stop offset="0.3" stop-color="#9efaff"/><stop offset="0.42" stop-color="#75f8ff"/><stop offset="0.58" stop-color="#44f5ff"/><stop offset="0.78" stop-color="#16f1ff"/><stop offset="1" stop-color="#00edff"/></linearGradient>
<linearGradient id="w88" gradientUnits="userSpaceOnUse" x1="657.3" y1="171.7" x2="624.8" y2="173.4"><stop offset="0" stop-color="#ffffff"/><stop offset="0.04" stop-color="#f4ffff"/><stop offset="0.08" stop-color="#e9ffff"/><stop offset="0.13" stop-color="#d9feff"/><stop offset="0.2" stop-color="#c2feff"/><stop offset="0.3" stop-color="#a0fdff"/><stop offset="0.42" stop-color="#77fdff"/><stop offset="0.58" stop-color="#46fbff"/><stop offset="0.78" stop-color="#17faff"/><stop offset="1" stop-color="#00f8ff"/></linearGradient>
<linearGradient id="w89" gradientUnits="userSpaceOnUse" x1="657.3" y1="171.7" x2="625.2" y2="172.3"><stop offset="0" stop-color="#ffffff"/><stop offset="0.04" stop-color="#f4ffff"/><stop offset="0.08" stop-color="#e9ffff"/><stop offset="0.13" stop-color="#d9ffff"/><stop offset="0.2" stop-color="#c2fffe"/><stop offset="0.3" stop-color="#a0fffe"/><stop offset="0.42" stop-color="#78fffd"/><stop offset="0.58" stop-color="#47fffd"/><stop offset="0.78" stop-color="#18fffc"/><stop offset="1" stop-color="#00fffa"/></linearGradient>
<linearGradient id="w90" gradientUnits="userSpaceOnUse" x1="657.3" y1="171.7" x2="625.6" y2="171.2"><stop offset="0" stop-color="#ffffff"/><stop offset="0.04" stop-color="#f4ffff"/><stop offset="0.08" stop-color="#e8fffe"/><stop offset="0.13" stop-color="#d9fffe"/><stop offset="0.2" stop-color="#c2fffd"/><stop offset="0.3" stop-color="#9ffffb"/><stop offset="0.42" stop-color="#77fff9"/><stop offset="0.58" stop-color="#47fff7"/><stop offset="0.78" stop-color="#18fff4"/><stop offset="1" stop-color="#00fff0"/></linearGradient>
<linearGradient id="w91" gradientUnits="userSpaceOnUse" x1="657.3" y1="171.7" x2="626.1" y2="170.1"><stop offset="0" stop-color="#ffffff"/><stop offset="0.04" stop-color="#f4fffe"/><stop offset="0.08" stop-color="#e8fffe"/><stop offset="0.13" stop-color="#d8fffc"/><stop offset="0.2" stop-color="#c1fffb"/><stop offset="0.3" stop-color="#9ffff9"/><stop offset="0.42" stop-color="#77fff6"/><stop offset="0.58" stop-color="#47fff2"/><stop offset="0.78" stop-color="#19ffed"/><stop offset="1" stop-color="#00ffe7"/></linearGradient>
<linearGradient id="w92" gradientUnits="userSpaceOnUse" x1="657.3" y1="171.7" x2="626.5" y2="169.0"><stop offset="0" stop-color="#ffffff"/><stop offset="0.04" stop-color="#f4fffe"/><stop offset="0.08" stop-color="#e8fffd"/><stop offset="0.13" stop-color="#d8fffc"/><stop offset="0.2" stop-color="#c0fff9"/><stop offset="0.3" stop-color="#9efff6"/><stop offset="0.42" stop-color="#76fff2"/><stop offset="0.58" stop-color="#47ffed"/><stop offset="0.78" stop-color="#19ffe6"/><stop offset="1" stop-color="#00ffde"/></linearGradient>
<linearGradient id="w93" gradientUnits="userSpaceOnUse" x1="657.3" y1="171.7" x2="626.9" y2="168.0"><stop offset="0" stop-color="#ffffff"/><stop offset="0.04" stop-color="#f4fffe"/><stop offset="0.08" stop-color="#e8fffc"/><stop offset="0.13" stop-color="#d8fffb"/><stop offset="0.2" stop-color="#c0fff8"/><stop offset="0.3" stop-color="#9efff4"/><stop offset="0.42" stop-color="#76ffef"/><stop offset="0.58" stop-color="#46ffe8"/><stop offset="0.78" stop-color="#19ffe0"/><stop offset="1" stop-color="#00ffd7"/></linearGradient>
<linearGradient id="w94" gradientUnits="userSpaceOnUse" x1="657.3" y1="171.7" x2="627.3" y2="167.0"><stop offset="0" stop-color="#ffffff"/><stop offset="0.04" stop-color="#f4fffd"/><stop offset="0.08" stop-color="#e7fffc"/><stop offset="0.13" stop-color="#d7fffa"/><stop offset="0.2" stop-color="#bffff6"/><stop offset="0.3" stop-color="#9dfff1"/><stop offset="0.42" stop-color="#75ffeb"/><stop offset="0.58" stop-color="#46ffe4"/><stop offset="0.78" stop-color="#19ffda"/><stop offset="1" stop-color="#00ffcf"/></linearGradient>
<linearGradient id="w95" gradientUnits="userSpaceOnUse" x1="657.3" y1="171.7" x2="627.7" y2="166.0"><stop offset="0" stop-color="#ffffff"/><stop offset="0.04" stop-color="#f3fffd"/><stop offset="0.08" stop-color="#e7fffb"/><stop offset="0.13" stop-color="#d7fff9"/><stop offset="0.2" stop-color="#bffff5"/><stop offset="0.3" stop-color="#9cffef"/><stop offset="0.42" stop-color="#75ffe8"/><stop offset="0.58" stop-color="#46ffdf"/><stop offset="0.78" stop-color="#1affd4"/><stop offset="1" stop-color="#00ffc9"/></linearGradient>
<linearGradient id="w96" gradientUnits="userSpaceOnUse" x1="657.3" y1="171.7" x2="628.0" y2="165.0"><stop offset="0" stop-color="#ffffff"/><stop offset="0.04" stop-color="#f3fffd"/><stop offset="0.08" stop-color="#e7fffb"/><stop offset="0.13" stop-color="#d6fff8"/><stop offset="0.2" stop-color="#befff3"/><stop offset="0.3" stop-color="#9cffed"/><stop offset="0.42" stop-color="#75ffe5"/><stop offset="0.58" stop-color="#46ffdb"/><stop offset="0.78" stop-color="#1affcf"/><stop offset="1" stop-color="#00ffc2"/></linearGradient>
<linearGradient id="w97" gradientUnits="userSpaceOnUse" x1="657.3" y1="171.7" x2="628.4" y2="164.0"><stop offset="0" stop-color="#ffffff"/><stop offset="0.04" stop-color="#f3fffd"/><stop offset="0.08" stop-color="#e7fffa"/><stop offset="0.13" stop-color="#d6fff7"/><stop offset="0.2" stop-color="#befff2"/><stop offset="0.3" stop-color="#9bffeb"/><stop offset="0.42" stop-color="#74ffe2"/><stop offset="0.58" stop-color="#46ffd7"/><stop offset="0.78" stop-color="#1affca"/><stop offset="1" stop-color="#00ffbc"/></linearGradient>
<linearGradient id="w98" gradientUnits="userSpaceOnUse" x1="657.3" y1="171.7" x2="628.8" y2="163.0"><stop offset="0" stop-color="#ffffff"/><stop offset="0.04" stop-color="#f3fffc"/><stop offset="0.08" stop-color="#e6fffa"/><stop offset="0.13" stop-color="#d6fff6"/><stop offset="0.2" stop-color="#bdfff1"/><stop offset="0.3" stop-color="#9bffe9"/><stop offset="0.42" stop-color="#74ffe0"/><stop offset="0.58" stop-color="#46ffd4"/><stop offset="0.78" stop-color="#1affc5"/><stop offset="1" stop-color="#00ffb7"/></linearGradient>
<linearGradient id="w99" gradientUnits="userSpaceOnUse" x1="657.3" y1="171.7" x2="629.2" y2="162.1"><stop offset="0" stop-color="#ffffff"/><stop offset="0.04" stop-color="#f3fffc"/><stop offset="0.08" stop-color="#e6fff9"/><stop offset="0.13" stop-color="#d5fff5"/><stop offset="0.2" stop-color="#bdffef"/><stop offset="0.3" stop-color="#9affe7"/><stop offset="0.42" stop-color="#73ffdd"/><stop offset="0.58" stop-color="#46ffd0"/><stop offset="0.78" stop-color="#1affc1"/><stop offset="1" stop-color="#00ffb1"/></linearGradient>
<linearGradient id="w100" gradientUnits="userSpaceOnUse" x1="657.3" y1="171.7" x2="629.5" y2="161.1"><stop offset="0" stop-color="#ffffff"/><stop offset="0.04" stop-color="#f3fffc"/><stop offset="0.08" stop-color="#e6fff9"/><stop offset="0.13" stop-color="#d5fff4"/><stop offset="0.2" stop-color="#bcffee"/><stop offset="0.3" stop-color="#9affe5"/><stop offset="0.42" stop-color="#73ffda"/><stop offset="0.58" stop-color="#46ffcc"/><stop offset="0.78" stop-color="#1affbc"/><stop offset="1" stop-color="#00ffac"/></linearGradient>
<linearGradient id="w101" gradientUnits="userSpaceOnUse" x1="657.3" y1="171.7" x2="629.9" y2="160.1"><stop offset="0" stop-color="#ffffff"/><stop offset="0.04" stop-color="#f3fffc"/><stop offset="0.08" stop-color="#e6fff8"/><stop offset="0.13" stop-color="#d4fff3"/><stop offset="0.2" stop-color="#bcffed"/><stop offset="0.3" stop-color="#99ffe3"/><stop offset="0.42" stop-color="#73ffd7"/><stop offset="0.58" stop-color="#46ffc9"/><stop offset="0.78" stop-color="#1affb8"/><stop offset="1" stop-color="#00ffa7"/></linearGradient>
<linearGradient id="w102" gradientUnits="userSpaceOnUse" x1="657.3" y1="171.7" x2="630.3" y2="159.1"><stop offset="0" stop-color="#ffffff"/><stop offset="0.04" stop-color="#f3fffb"/><stop offset="0.08" stop-color="#e5fff8"/><stop offset="0.13" stop-color="#d4fff3"/><stop offset="0.2" stop-color="#bbffeb"/><stop offset="0.3" stop-color="#99ffe1"/><stop offset="0.42" stop-color="#72ffd5"/><stop offset="0.58" stop-color="#46ffc6"/><stop offset="0.78" stop-color="#1affb4"/><stop offset="1" stop-color="#00ffa2"/></linearGradient>
<linearGradient id="w103" gradientUnits="userSpaceOnUse" x1="657.3" y1="171.7" x2="630.7" y2="158.2"><stop offset="0" stop-color="#ffffff"/><stop offset="0.04" stop-color="#f2fffb"/><stop offset="0.08" stop-color="#e5fff7"/><stop offset="0.13" stop-color="#d4fff2"/><stop offset="0.2" stop-color="#bbffea"/><stop offset="0.3" stop-color="#98ffdf"/><stop offset="0.42" stop-color="#72ffd2"/><stop offset="0.58" stop-color="#45ffc2"/><stop offset="0.78" stop-color="#1affb0"/><stop offset="1" stop-color="#00ff9d"/></linearGradient>
<linearGradient id="w104" gradientUnits="userSpaceOnUse" x1="657.3" y1="171.7" x2="631.0" y2="157.2"><stop offset="0" stop-color="#ffffff"/><stop offset="0.04" stop-color="#f2fffb"/><stop offset="0.08" stop-color="#e5fff7"/><stop offset="0.13" stop-color="#d3fff1"/><stop offset="0.2" stop-color="#bbffe9"/><stop offset="0.3" stop-color="#98ffdd"/><stop offset="0.42" stop-color="#72ffd0"/><stop offset="0.58" stop-color="#45ffbf"/><stop offset="0.78" stop-color="#1affac"/><stop offset="1" stop-color="#00ff99"/></linearGradient>
<linearGradient id="w105" gradientUnits="userSpaceOnUse" x1="657.3" y1="171.7" x2="631.4" y2="156.2"><stop offset="0" stop-color="#ffffff"/><stop offset="0.04" stop-color="#f2fffb"/><stop offset="0.08" stop-color="#e5fff6"/><stop offset="0.13" stop-color="#d3fff0"/><stop offset="0.2" stop-color="#baffe7"/><stop offset="0.3" stop-color="#97ffdb"/><stop offset="0.42" stop-color="#71ffcd"/><stop offset="0.58" stop-color="#45ffbc"/><stop offset="0.78" stop-color="#1affa8"/><stop offset="1" stop-color="#00ff94"/></linearGradient>
<linearGradient id="w106" gradientUnits="userSpaceOnUse" x1="657.3" y1="171.7" x2="631.8" y2="155.2"><stop offset="0" stop-color="#ffffff"/><stop offset="0.04" stop-color="#f2fffa"/><stop offset="0.08" stop-color="#e4fff5"/><stop offset="0.13" stop-color="#d3ffef"/><stop offset="0.2" stop-color="#baffe6"/><stop offset="0.3" stop-color="#97ffd9"/><stop offset="0.42" stop-color="#71ffcb"/><stop offset="0.58" stop-color="#45ffb8"/><stop offset="0.78" stop-color="#1affa4"/><stop offset="1" stop-color="#00ff90"/></linearGradient>
<linearGradient id="w107" gradientUnits="userSpaceOnUse" x1="657.3" y1="171.7" x2="632.2" y2="154.2"><stop offset="0" stop-color="#ffffff"/><stop offset="0.04" stop-color="#f2fffa"/><stop offset="0.08" stop-color="#e4fff5"/><stop offset="0.13" stop-color="#d2ffee"/><stop offset="0.2" stop-color="#b9ffe5"/><stop offset="0.3" stop-color="#96ffd7"/><stop offset="0.42" stop-color="#70ffc8"/><stop offset="0.58" stop-color="#45ffb5"/><stop offset="0.78" stop-color="#1affa0"/><stop offset="1" stop-color="#00ff8b"/></linearGradient>
<linearGradient id="w108" gradientUnits="userSpaceOnUse" x1="657.3" y1="171.7" x2="632.6" y2="153.1"><stop offset="0" stop-color="#ffffff"/><stop offset="0.04" stop-color="#f2fffa"/><stop offset="0.08" stop-color="#e4fff4"/><stop offset="0.13" stop-color="#d2ffed"/><stop offset="0.2" stop-color="#b9ffe3"/><stop offset="0.3" stop-color="#96ffd5"/><stop offset="0.42" stop-color="#70ffc6"/><stop offset="0.58" stop-color="#44ffb2"/><stop offset="0.78" stop-color="#1aff9c"/><stop offset="1" stop-color="#00ff87"/></linearGradient>
<linearGradient id="w109" gradientUnits="userSpaceOnUse" x1="657.3" y1="171.7" x2="633.0" y2="152.1"><stop offset="0" stop-color="#ffffff"/><stop offset="0.04" stop-color="#f2fffa"/><stop offset="0.08" stop-color="#e4fff4"/><stop offset="0.13" stop-color="#d2ffec"/><stop offset="0.2" stop-color="#b8ffe2"/><stop offset="0.3" stop-color="#95ffd4"/><stop offset="0.42" stop-color="#70ffc3"/><stop offset="0.58" stop-color="#44ffaf"/><stop offset="0.78" stop-color="#1aff98"/><stop offset="1" stop-color="#00ff82"/></linearGradient>
<linearGradient id="w110" gradientUnits="userSpaceOnUse" x1="657.3" y1="171.7" x2="633.4" y2="151.0"><stop offset="0" stop-color="#ffffff"/><stop offset="0.04" stop-color="#f1fff9"/><stop offset="0.08" stop-color="#e3fff3"/><stop offset="0.13" stop-color="#d1ffec"/><stop offset="0.2" stop-color="#b8ffe1"/><stop offset="0.3" stop-color="#95ffd2"/><stop offset="0.42" stop-color="#6fffc1"/><stop offset="0.58" stop-color="#44ffac"/><stop offset="0.78" stop-color="#1aff94"/><stop offset="1" stop-color="#00ff7e"/></linearGradient>
<linearGradient id="w111" gradientUnits="userSpaceOnUse" x1="657.3" y1="171.7" x2="633.9" y2="149.9"><stop offset="0" stop-color="#ffffff"/><stop offset="0.04" stop-color="#f1fff9"/><stop offset="0.08" stop-color="#e3fff3"/><stop offset="0.13" stop-color="#d1ffeb"/><stop offset="0.2" stop-color="#b7ffdf"/><stop offset="0.3" stop-color="#94ffd0"/><stop offset="0.42" stop-color="#6fffbe"/><stop offset="0.58" stop-color="#43ffa8"/><stop offset="0.78" stop-color="#1aff90"/><stop offset="1" stop-color="#00ff7a"/></linearGradient>
<linearGradient id="w112" gradientUnits="userSpaceOnUse" x1="657.3" y1="171.7" x2="634.3" y2="148.8"><stop offset="0" stop-color="#ffffff"/><stop offset="0.04" stop-color="#f1fff9"/><stop offset="0.08" stop-color="#e3fff2"/><stop offset="0.13" stop-color="#d0ffea"/><stop offset="0.2" stop-color="#b7ffde"/><stop offset="0.3" stop-color="#94ffce"/><stop offset="0.42" stop-color="#6effbb"/><stop offset="0.58" stop-color="#43ffa5"/><stop offset="0.78" stop-color="#1aff8c"/><stop offset="1" stop-color="#00ff75"/></linearGradient>
<linearGradient id="w113" gradientUnits="userSpaceOnUse" x1="657.3" y1="171.7" x2="634.8" y2="147.6"><stop offset="0" stop-color="#ffffff"/><stop offset="0.04" stop-color="#f1fff8"/><stop offset="0.08" stop-color="#e2fff1"/><stop offset="0.13" stop-color="#d0ffe9"/><stop offset="0.2" stop-color="#b6ffdc"/><stop offset="0.3" stop-color="#93ffcc"/><stop offset="0.42" stop-color="#6effb9"/><stop offset="0.58" stop-color="#43ffa2"/><stop offset="0.78" stop-color="#1aff89"/><stop offset="1" stop-color="#00ff71"/></linearGradient>
<linearGradient id="w114" gradientUnits="userSpaceOnUse" x1="657.3" y1="171.7" x2="635.2" y2="146.4"><stop offset="0" stop-color="#ffffff"/><stop offset="0.04" stop-color="#f1fff8"/><stop offset="0.08" stop-color="#e2fff1"/><stop offset="0.13" stop-color="#cfffe8"/><stop offset="0.2" stop-color="#b6ffdb"/><stop offset="0.3" stop-color="#93ffc9"/><stop offset="0.42" stop-color="#6dffb6"/><stop offset="0.58" stop-color="#42ff9e"/><stop offset="0.78" stop-color="#19ff84"/><stop offset="1" stop-color="#00ff6c"/></linearGradient>
<linearGradient id="w115" gradientUnits="userSpaceOnUse" x1="657.3" y1="171.7" x2="635.7" y2="145.1"><stop offset="0" stop-color="#ffffff"/><stop offset="0.04" stop-color="#f1fff8"/><stop offset="0.08" stop-color="#e2fff0"/><stop offset="0.13" stop-color="#cfffe7"/><stop offset="0.2" stop-color="#b5ffd9"/><stop offset="0.3" stop-color="#92ffc7"/><stop offset="0.42" stop-color="#6dffb3"/><stop offset="0.58" stop-color="#42ff9b"/><stop offset="0.78" stop-color="#19ff80"/><stop offset="1" stop-color="#00ff68"/></linearGradient>
<linearGradient id="w116" gradientUnits="userSpaceOnUse" x1="657.3" y1="171.7" x2="636.2" y2="143.8"><stop offset="0" stop-color="#ffffff"/><stop offset="0.04" stop-color="#f1fff7"/><stop offset="0.08" stop-color="#e2ffef"/><stop offset="0.13" stop-color="#cfffe6"/><stop offset="0.2" stop-color="#b4ffd8"/><stop offset="0.3" stop-color="#92ffc5"/><stop offset="0.42" stop-color="#6cffb0"/><stop offset="0.58" stop-color="#41ff97"/><stop offset="0.78" stop-color="#19ff7c"/><stop offset="1" stop-color="#00ff63"/></linearGradient>
<linearGradient id="w117" gradientUnits="userSpaceOnUse" x1="657.3" y1="171.7" x2="636.8" y2="142.4"><stop offset="0" stop-color="#ffffff"/><stop offset="0.04" stop-color="#f0fff7"/><stop offset="0.08" stop-color="#e1ffef"/><stop offset="0.13" stop-color="#ceffe4"/><stop offset="0.2" stop-color="#b4ffd6"/><stop offset="0.3" stop-color="#91ffc3"/><stop offset="0.42" stop-color="#6bffad"/><stop offset="0.58" stop-color="#41ff94"/><stop offset="0.78" stop-color="#19ff78"/><stop offset="1" stop-color="#00ff5f"/></linearGradient>
<linearGradient id="w118" gradientUnits="userSpaceOnUse" x1="657.3" y1="171.7" x2="637.3" y2="141.0"><stop offset="0" stop-color="#ffffff"/><stop offset="0.04" stop-color="#f0fff7"/><stop offset="0.08" stop-color="#e1ffee"/><stop offset="0.13" stop-color="#ceffe3"/><stop offset="0.2" stop-color="#b3ffd4"/><stop offset="0.3" stop-color="#90ffc0"/><stop offset="0.42" stop-color="#6bffaa"/><stop offset="0.58" stop-color="#40ff90"/><stop offset="0.78" stop-color="#18ff74"/><stop offset="1" stop-color="#00ff5a"/></linearGradient>
<linearGradient id="w119" gradientUnits="userSpaceOnUse" x1="657.3" y1="171.7" x2="637.9" y2="139.5"><stop offset="0" stop-color="#ffffff"/><stop offset="0.04" stop-color="#f0fff6"/><stop offset="0.08" stop-color="#e0ffed"/><stop offset="0.13" stop-color="#cdffe2"/><stop offset="0.2" stop-color="#b3ffd3"/><stop offset="0.3" stop-color="#8fffbe"/><stop offset="0.42" stop-color="#6affa7"/><stop offset="0.58" stop-color="#3fff8c"/><stop offset="0.78" stop-color="#18ff6f"/><stop offset="1" stop-color="#00ff55"/></linearGradient>
<linearGradient id="w120" gradientUnits="userSpaceOnUse" x1="657.3" y1="171.7" x2="638.5" y2="137.9"><stop offset="0" stop-color="#ffffff"/><stop offset="0.04" stop-color="#f0fff6"/><stop offset="0.08" stop-color="#e0ffec"/><stop offset="0.13" stop-color="#cdffe1"/><stop offset="0.2" stop-color="#b2ffd1"/><stop offset="0.3" stop-color="#8fffbb"/><stop offset="0.42" stop-color="#69ffa4"/><stop offset="0.58" stop-color="#3fff88"/><stop offset="0.78" stop-color="#18ff6b"/><stop offset="1" stop-color="#00ff51"/></linearGradient>
<linearGradient id="w121" gradientUnits="userSpaceOnUse" x1="657.3" y1="171.7" x2="639.2" y2="136.2"><stop offset="0" stop-color="#ffffff"/><stop offset="0.04" stop-color="#f0fff5"/><stop offset="0.08" stop-color="#e0ffec"/><stop offset="0.13" stop-color="#ccffdf"/><stop offset="0.2" stop-color="#b1ffcf"/><stop offset="0.3" stop-color="#8effb9"/><stop offset="0.42" stop-color="#68ffa1"/><stop offset="0.58" stop-color="#3eff84"/><stop offset="0.78" stop-color="#17ff66"/><stop offset="1" stop-color="#00ff4c"/></linearGradient>
<linearGradient id="w122" gradientUnits="userSpaceOnUse" x1="657.3" y1="171.7" x2="639.9" y2="134.4"><stop offset="0" stop-color="#ffffff"/><stop offset="0.04" stop-color="#effff5"/><stop offset="0.08" stop-color="#dfffeb"/><stop offset="0.13" stop-color="#cbffde"/><stop offset="0.2" stop-color="#b0ffcd"/><stop offset="0.3" stop-color="#8dffb6"/><stop offset="0.42" stop-color="#67ff9d"/><stop offset="0.58" stop-color="#3dff80"/><stop offset="0.78" stop-color="#17ff61"/><stop offset="1" stop-color="#00ff47"/></linearGradient>
<linearGradient id="w123" gradientUnits="userSpaceOnUse" x1="657.3" y1="171.7" x2="640.6" y2="132.4"><stop offset="0" stop-color="#ffffff"/><stop offset="0.04" stop-color="#effff4"/><stop offset="0.08" stop-color="#dfffea"/><stop offset="0.13" stop-color="#cbffdc"/><stop offset="0.2" stop-color="#b0ffcb"/><stop offset="0.3" stop-color="#8cffb3"/><stop offset="0.42" stop-color="#66ff99"/><stop offset="0.58" stop-color="#3dff7b"/><stop offset="0.78" stop-color="#16ff5c"/><stop offset="1" stop-color="#00ff42"/></linearGradient>
<linearGradient id="w124" gradientUnits="userSpaceOnUse" x1="657.3" y1="171.7" x2="641.4" y2="130.4"><stop offset="0" stop-color="#ffffff"/><stop offset="0.04" stop-color="#effff4"/><stop offset="0.08" stop-color="#deffe9"/><stop offset="0.13" stop-color="#caffdb"/><stop offset="0.2" stop-color="#afffc8"/><stop offset="0.3" stop-color="#8bffb0"/><stop offset="0.42" stop-color="#65ff95"/><stop offset="0.58" stop-color="#3cff76"/><stop offset="0.78" stop-color="#16ff57"/><stop offset="1" stop-color="#00ff3d"/></linearGradient>
<linearGradient id="w125" gradientUnits="userSpaceOnUse" x1="657.3" y1="171.7" x2="642.3" y2="128.1"><stop offset="0" stop-color="#ffffff"/><stop offset="0.04" stop-color="#effff3"/><stop offset="0.08" stop-color="#deffe8"/><stop offset="0.13" stop-color="#c9ffd9"/><stop offset="0.2" stop-color="#aeffc6"/><stop offset="0.3" stop-color="#8affac"/><stop offset="0.42" stop-color="#64ff91"/><stop offset="0.58" stop-color="#3bff71"/><stop offset="0.78" stop-color="#16ff51"/><stop offset="1" stop-color="#00ff37"/></linearGradient>
<linearGradient id="w126" gradientUnits="userSpaceOnUse" x1="657.3" y1="171.7" x2="643.2" y2="125.7"><stop offset="0" stop-color="#ffffff"/><stop offset="0.04" stop-color="#eefff3"/><stop offset="0.08" stop-color="#ddffe6"/><stop offset="0.13" stop-color="#c8ffd7"/><stop offset="0.2" stop-color="#adffc3"/><stop offset="0.3" stop-color="#89ffa9"/><stop offset="0.42" stop-color="#63ff8c"/><stop offset="0.58" stop-color="#3aff6c"/><stop offset="0.78" stop-color="#15ff4c"/><stop offset="1" stop-color="#00ff32"/></linearGradient>
<linearGradient id="w127" gradientUnits="userSpaceOnUse" x1="657.3" y1="171.7" x2="644.2" y2="123.0"><stop offset="0" stop-color="#ffffff"/><stop offset="0.04" stop-color="#eefff2"/><stop offset="0.08" stop-color="#ddffe5"/><stop offset="0.13" stop-color="#c8ffd5"/><stop offset="0.2" stop-color="#acffc0"/><stop offset="0.3" stop-color="#88ffa5"/><stop offset="0.42" stop-color="#62ff88"/><stop offset="0.58" stop-color="#39ff66"/><stop offset="0.78" stop-color="#15ff46"/><stop offset="1" stop-color="#00ff2c"/></linearGradient>
<linearGradient id="w128" gradientUnits="userSpaceOnUse" x1="657.3" y1="171.7" x2="645.4" y2="120.1"><stop offset="0" stop-color="#ffffff"/><stop offset="0.04" stop-color="#edfff1"/><stop offset="0.08" stop-color="#dcffe4"/><stop offset="0.13" stop-color="#c7ffd3"/><stop offset="0.2" stop-color="#abffbd"/><stop offset="0.3" stop-color="#86ffa1"/><stop offset="0.42" stop-color="#60ff82"/><stop offset="0.58" stop-color="#37ff60"/><stop offset="0.78" stop-color="#14ff40"/><stop offset="1" stop-color="#00ff26"/></linearGradient>
<linearGradient id="w129" gradientUnits="userSpaceOnUse" x1="657.3" y1="171.7" x2="646.6" y2="116.9"><stop offset="0" stop-color="#ffffff"/><stop offset="0.04" stop-color="#edfff1"/><stop offset="0.08" stop-color="#dbffe2"/><stop offset="0.13" stop-color="#c6ffd1"/><stop offset="0.2" stop-color="#a9ffba"/><stop offset="0.3" stop-color="#85ff9c"/><stop offset="0.42" stop-color="#5eff7d"/><stop offset="0.58" stop-color="#36ff5a"/><stop offset="0.78" stop-color="#13ff39"/><stop offset="1" stop-color="#00ff21"/></linearGradient>
<linearGradient id="w130" gradientUnits="userSpaceOnUse" x1="657.3" y1="171.7" x2="648.0" y2="113.2"><stop offset="0" stop-color="#ffffff"/><stop offset="0.04" stop-color="#edfff0"/><stop offset="0.08" stop-color="#daffe0"/><stop offset="0.13" stop-color="#c4ffce"/><stop offset="0.2" stop-color="#a8ffb6"/><stop offset="0.3" stop-color="#83ff97"/><stop offset="0.42" stop-color="#5dff77"/><stop offset="0.58" stop-color="#35ff53"/><stop offset="0.78" stop-color="#13ff33"/><stop offset="1" stop-color="#00ff1b"/></linearGradient>
<linearGradient id="w131" gradientUnits="userSpaceOnUse" x1="657.3" y1="171.7" x2="649.6" y2="109.2"><stop offset="0" stop-color="#ffffff"/><stop offset="0.04" stop-color="#ecffef"/><stop offset="0.08" stop-color="#d9ffdf"/><stop offset="0.13" stop-color="#c3ffcb"/><stop offset="0.2" stop-color="#a6ffb2"/><stop offset="0.3" stop-color="#81ff92"/><stop offset="0.42" stop-color="#5bff70"/><stop offset="0.58" stop-color="#33ff4c"/><stop offset="0.78" stop-color="#12ff2c"/><stop offset="1" stop-color="#00ff14"/></linearGradient>
<linearGradient id="w132" gradientUnits="userSpaceOnUse" x1="657.3" y1="171.7" x2="651.4" y2="104.5"><stop offset="0" stop-color="#ffffff"/><stop offset="0.04" stop-color="#ecffed"/><stop offset="0.08" stop-color="#d8ffdc"/><stop offset="0.13" stop-color="#c2ffc8"/><stop offset="0.2" stop-color="#a4ffad"/><stop offset="0.3" stop-color="#7eff8b"/><stop offset="0.42" stop-color="#58ff69"/><stop offset="0.58" stop-color="#31ff44"/><stop offset="0.78" stop-color="#12ff24"/><stop offset="1" stop-color="#00ff0e"/></linearGradient>
<linearGradient id="w133" gradientUnits="userSpaceOnUse" x1="657.3" y1="171.7" x2="653.5" y2="99.1"><stop offset="0" stop-color="#ffffff"/><stop offset="0.04" stop-color="#ebffec"/><stop offset="0.08" stop-color="#d7ffda"/><stop offset="0.13" stop-color="#c0ffc4"/><stop offset="0.2" stop-color="#a2ffa8"/><stop offset="0.3" stop-color="#7cff84"/><stop offset="0.42" stop-color="#56ff60"/><stop offset="0.58" stop-color="#30ff3c"/><stop offset="0.78" stop-color="#11ff1d"/><stop offset="1" stop-color="#00ff08"/></linearGradient>
<linearGradient id="w134" gradientUnits="userSpaceOnUse" x1="657.3" y1="171.7" x2="655.9" y2="92.8"><stop offset="0" stop-color="#ffffff"/><stop offset="0.04" stop-color="#eaffeb"/><stop offset="0.08" stop-color="#d6ffd7"/><stop offset="0.13" stop-color="#beffc0"/><stop offset="0.2" stop-color="#9fffa2"/><stop offset="0.3" stop-color="#79ff7c"/><stop offset="0.42" stop-color="#53ff57"/><stop offset="0.58" stop-color="#2eff33"/><stop offset="0.78" stop-color="#10ff15"/><stop offset="1" stop-color="#00ff03"/></linearGradient>
<linearGradient id="w135" gradientUnits="userSpaceOnUse" x1="657.3" y1="171.7" x2="658.7" y2="88.8"><stop offset="0" stop-color="#ffffff"/><stop offset="0.04" stop-color="#eaffea"/><stop offset="0.08" stop-color="#d6ffd5"/><stop offset="0.13" stop-color="#beffbd"/><stop offset="0.2" stop-color="#a0ff9e"/><stop offset="0.3" stop-color="#79ff77"/><stop offset="0.42" stop-color="#54ff52"/><stop offset="0.58" stop-color="#30ff2d"/><stop offset="0.78" stop-color="#12ff10"/><stop offset="1" stop-color="#01ff00"/></linearGradient>
<linearGradient id="w136" gradientUnits="userSpaceOnUse" x1="657.3" y1="171.7" x2="661.5" y2="90.4"><stop offset="0" stop-color="#ffffff"/><stop offset="0.04" stop-color="#ebffea"/><stop offset="0.08" stop-color="#d8ffd6"/><stop offset="0.13" stop-color="#c2ffbe"/><stop offset="0.2" stop-color="#a5ffa0"/><stop offset="0.3" stop-color="#81ff79"/><stop offset="0.42" stop-color="#5dff53"/><stop offset="0.58" stop-color="#38ff2e"/><stop offset="0.78" stop-color="#1aff10"/><stop offset="1" stop-color="#07ff00"/></linearGradient>
<linearGradient id="w137" gradientUnits="userSpaceOnUse" x1="657.3" y1="171.7" x2="664.3" y2="92.0"><stop offset="0" stop-color="#ffffff"/><stop offset="0.04" stop-color="#edffeb"/><stop offset="0.08" stop-color="#dbffd7"/><stop offset="0.13" stop-color="#c6ffbf"/><stop offset="0.2" stop-color="#abffa1"/><stop offset="0.3" stop-color="#88ff7b"/><stop offset="0.42" stop-color="#65ff54"/><stop offset="0.58" stop-color="#41ff2f"/><stop offset="0.78" stop-color="#23ff10"/><stop offset="1" stop-color="#0eff00"/></linearGradient>
<linearGradient id="w138" gradientUnits="userSpaceOnUse" x1="657.3" y1="171.7" x2="666.9" y2="93.5"><stop offset="0" stop-color="#ffffff"/><stop offset="0.04" stop-color="#eeffeb"/><stop offset="0.08" stop-color="#ddffd8"/><stop offset="0.13" stop-color="#caffc1"/><stop offset="0.2" stop-color="#b0ffa3"/><stop offset="0.3" stop-color="#8fff7c"/><stop offset="0.42" stop-color="#6dff56"/><stop offset="0.58" stop-color="#4bff30"/><stop offset="0.78" stop-color="#2cff11"/><stop offset="1" stop-color="#16ff00"/></linearGradient>
<linearGradient id="w139" gradientUnits="userSpaceOnUse" x1="657.3" y1="171.7" x2="669.4" y2="94.9"><stop offset="0" stop-color="#ffffff"/><stop offset="0.04" stop-color="#efffeb"/><stop offset="0.08" stop-color="#e0ffd8"/><stop offset="0.13" stop-color="#cdffc2"/><stop offset="0.2" stop-color="#b5ffa4"/><stop offset="0.3" stop-color="#96ff7e"/><stop offset="0.42" stop-color="#76ff57"/><stop offset="0.58" stop-color="#54ff31"/><stop offset="0.78" stop-color="#36ff11"/><stop offset="1" stop-color="#1fff00"/></linearGradient>
<linearGradient id="w140" gradientUnits="userSpaceOnUse" x1="657.3" y1="171.7" x2="671.9" y2="96.3"><stop offset="0" stop-color="#ffffff"/><stop offset="0.04" stop-color="#f0ffec"/><stop offset="0.08" stop-color="#e2ffd9"/><stop offset="0.13" stop-color="#d1ffc3"/><stop offset="0.2" stop-color="#baffa5"/><stop offset="0.3" stop-color="#9dff7f"/><stop offset="0.42" stop-color="#7eff59"/><stop offset="0.58" stop-color="#5dff32"/><stop offset="0.78" stop-color="#3fff12"/><stop offset="1" stop-color="#29ff00"/></linearGradient>
<linearGradient id="w141" gradientUnits="userSpaceOnUse" x1="657.3" y1="171.7" x2="674.4" y2="97.7"><stop offset="0" stop-color="#ffffff"/><stop offset="0.04" stop-color="#f1ffec"/><stop offset="0.08" stop-color="#e4ffda"/><stop offset="0.13" stop-color="#d4ffc4"/><stop offset="0.2" stop-color="#bfffa7"/><stop offset="0.3" stop-color="#a4ff81"/><stop offset="0.42" stop-color="#87ff5a"/><stop offset="0.58" stop-color="#67ff33"/><stop offset="0.78" stop-color="#4aff12"/><stop offset="1" stop-color="#33ff00"/></linearGradient>
<linearGradient id="w142" gradientUnits="userSpaceOnUse" x1="657.3" y1="171.7" x2="676.7" y2="99.1"><stop offset="0" stop-color="#ffffff"/><stop offset="0.04" stop-color="#f2ffed"/><stop offset="0.08" stop-color="#e6ffdb"/><stop offset="0.13" stop-color="#d8ffc5"/><stop offset="0.2" stop-color="#c4ffa8"/><stop offset="0.3" stop-color="#abff82"/><stop offset="0.42" stop-color="#8fff5c"/><stop offset="0.58" stop-color="#71ff34"/><stop offset="0.78" stop-color="#54ff12"/><stop offset="1" stop-color="#3dff00"/></linearGradient>
<linearGradient id="w143" gradientUnits="userSpaceOnUse" x1="657.3" y1="171.7" x2="679.1" y2="100.4"><stop offset="0" stop-color="#ffffff"/><stop offset="0.04" stop-color="#f4ffed"/><stop offset="0.08" stop-color="#e8ffdb"/><stop offset="0.13" stop-color="#dbffc6"/><stop offset="0.2" stop-color="#c9ffaa"/><stop offset="0.3" stop-color="#b1ff84"/><stop offset="0.42" stop-color="#98ff5d"/><stop offset="0.58" stop-color="#7bff35"/><stop offset="0.78" stop-color="#5fff13"/><stop offset="1" stop-color="#49ff00"/></linearGradient>
<linearGradient id="w144" gradientUnits="userSpaceOnUse" x1="657.3" y1="171.7" x2="681.4" y2="101.7"><stop offset="0" stop-color="#ffffff"/><stop offset="0.04" stop-color="#f5ffed"/><stop offset="0.08" stop-color="#ebffdc"/><stop offset="0.13" stop-color="#deffc7"/><stop offset="0.2" stop-color="#ceffab"/><stop offset="0.3" stop-color="#b8ff86"/><stop offset="0.42" stop-color="#a0ff5f"/><stop offset="0.58" stop-color="#85ff36"/><stop offset="0.78" stop-color="#6bff13"/><stop offset="1" stop-color="#55ff00"/></linearGradient>
<linearGradient id="w145" gradientUnits="userSpaceOnUse" x1="657.3" y1="171.7" x2="683.7" y2="103.0"><stop offset="0" stop-color="#ffffff"/><stop offset="0.04" stop-color="#f6ffee"/><stop offset="0.08" stop-color="#edffdd"/><stop offset="0.13" stop-color="#e2ffc8"/><stop offset="0.2" stop-color="#d3ffad"/><stop offset="0.3" stop-color="#bfff88"/><stop offset="0.42" stop-color="#a9ff60"/><stop offset="0.58" stop-color="#90ff37"/><stop offset="0.78" stop-color="#77ff14"/><stop offset="1" stop-color="#61ff00"/></linearGradient>
<linearGradient id="w146" gradientUnits="userSpaceOnUse" x1="657.3" y1="171.7" x2="685.9" y2="104.3"><stop offset="0" stop-color="#ffffff"/><stop offset="0.04" stop-color="#f7ffee"/><stop offset="0.08" stop-color="#efffdd"/><stop offset="0.13" stop-color="#e5ffc9"/><stop offset="0.2" stop-color="#d8ffae"/><stop offset="0.3" stop-color="#c6ff89"/><stop offset="0.42" stop-color="#b2ff62"/><stop offset="0.58" stop-color="#9bff38"/><stop offset="0.78" stop-color="#83ff14"/><stop offset="1" stop-color="#6fff00"/></linearGradient>
<linearGradient id="w147" gradientUnits="userSpaceOnUse" x1="657.3" y1="171.7" x2="688.1" y2="105.6"><stop offset="0" stop-color="#ffffff"/><stop offset="0.04" stop-color="#f8ffee"/><stop offset="0.08" stop-color="#f1ffde"/><stop offset="0.13" stop-color="#e8ffca"/><stop offset="0.2" stop-color="#ddffaf"/><stop offset="0.3" stop-color="#cdff8b"/><stop offset="0.42" stop-color="#bbff64"/><stop offset="0.58" stop-color="#a6ff3a"/><stop offset="0.78" stop-color="#90ff15"/><stop offset="1" stop-color="#7dff00"/></linearGradient>
<linearGradient id="w148" gradientUnits="userSpaceOnUse" x1="657.3" y1="171.7" x2="690.3" y2="106.9"><stop offset="0" stop-color="#ffffff"/><stop offset="0.04" stop-color="#f9ffef"/><stop offset="0.08" stop-color="#f3ffdf"/><stop offset="0.13" stop-color="#ecffcb"/><stop offset="0.2" stop-color="#e2ffb1"/><stop offset="0.3" stop-color="#d4ff8d"/><stop offset="0.42" stop-color="#c4ff66"/><stop offset="0.58" stop-color="#b2ff3b"/><stop offset="0.78" stop-color="#9eff16"/><stop offset="1" stop-color="#8cff00"/></linearGradient>
<linearGradient id="w149" gradientUnits="userSpaceOnUse" x1="657.3" y1="171.7" x2="692.5" y2="108.1"><stop offset="0" stop-color="#ffffff"/><stop offset="0.04" stop-color="#faffef"/><stop offset="0.08" stop-color="#f5ffdf"/><stop offset="0.13" stop-color="#efffcc"/><stop offset="0.2" stop-color="#e6ffb2"/><stop offset="0.3" stop-color="#dbff8f"/><stop offset="0.42" stop-color="#ceff68"/><stop offset="0.58" stop-color="#beff3d"/><stop offset="0.78" stop-color="#acff16"/><stop offset="1" stop-color="#9dff00"/></linearGradient>
<linearGradient id="w150" gradientUnits="userSpaceOnUse" x1="657.3" y1="171.7" x2="694.8" y2="109.4"><stop offset="0" stop-color="#ffffff"/><stop offset="0.04" stop-color="#fbffef"/><stop offset="0.08" stop-color="#f7ffe0"/><stop offset="0.13" stop-color="#f2ffcd"/><stop offset="0.2" stop-color="#ebffb4"/><stop offset="0.3" stop-color="#e2ff91"/><stop offset="0.42" stop-color="#d7ff6a"/><stop offset="0.58" stop-color="#caff3f"/><stop offset="0.78" stop-color="#bbff17"/><stop offset="1" stop-color="#aeff00"/></linearGradient>
<linearGradient id="w151" gradientUnits="userSpaceOnUse" x1="657.3" y1="171.7" x2="697.0" y2="110.6"><stop offset="0" stop-color="#ffffff"/><stop offset="0.04" stop-color="#fcfff0"/><stop offset="0.08" stop-color="#f9ffe1"/><stop offset="0.13" stop-color="#f5ffcf"/><stop offset="0.2" stop-color="#f0ffb6"/><stop offset="0.3" stop-color="#e9ff93"/><stop offset="0.42" stop-color="#e1ff6c"/><stop offset="0.58" stop-color="#d7ff41"/><stop offset="0.78" stop-color="#cbff18"/><stop offset="1" stop-color="#c0ff00"/></linearGradient>
<linearGradient id="w152" gradientUnits="userSpaceOnUse" x1="657.3" y1="171.7" x2="699.2" y2="111.9"><stop offset="0" stop-color="#ffffff"/><stop offset="0.04" stop-color="#fdfff0"/><stop offset="0.08" stop-color="#fbffe1"/><stop offset="0.13" stop-color="#f8ffd0"/><stop offset="0.2" stop-color="#f5ffb7"/><stop offset="0.3" stop-color="#f0ff95"/><stop offset="0.42" stop-color="#ebff6f"/><stop offset="0.58" stop-color="#e4ff43"/><stop offset="0.78" stop-color="#dcff1a"/><stop offset="1" stop-color="#d4ff00"/></linearGradient>
<linearGradient id="w153" gradientUnits="userSpaceOnUse" x1="657.3" y1="171.7" x2="701.4" y2="113.2"><stop offset="0" stop-color="#ffffff"/><stop offset="0.04" stop-color="#fefff0"/><stop offset="0.08" stop-color="#fdffe2"/><stop offset="0.13" stop-color="#fcffd1"/><stop offset="0.2" stop-color="#faffb9"/><stop offset="0.3" stop-color="#f7ff97"/><stop offset="0.42" stop-color="#f4ff71"/><stop offset="0.58" stop-color="#f1ff45"/><stop offset="0.78" stop-color="#edff1b"/><stop offset="1" stop-color="#e8ff00"/></linearGradient>
<linearGradient id="w154" gradientUnits="userSpaceOnUse" x1="657.3" y1="171.7" x2="703.7" y2="114.5"><stop offset="0" stop-color="#ffffff"/><stop offset="0.04" stop-color="#fffff1"/><stop offset="0.08" stop-color="#ffffe3"/><stop offset="0.13" stop-color="#ffffd2"/><stop offset="0.2" stop-color="#ffffba"/><stop offset="0.3" stop-color="#ffff99"/><stop offset="0.42" stop-color="#ffff74"/><stop offset="0.58" stop-color="#feff47"/><stop offset="0.78" stop-color="#feff1c"/><stop offset="1" stop-color="#feff00"/></linearGradient>
<linearGradient id="w155" gradientUnits="userSpaceOnUse" x1="657.3" y1="171.7" x2="705.9" y2="115.8"><stop offset="0" stop-color="#ffffff"/><stop offset="0.04" stop-color="#fffef0"/><stop offset="0.08" stop-color="#fffde2"/><stop offset="0.13" stop-color="#fffcd0"/><stop offset="0.2" stop-color="#fffab8"/><stop offset="0.3" stop-color="#fff897"/><stop offset="0.42" stop-color="#fff671"/><stop offset="0.58" stop-color="#fff245"/><stop offset="0.78" stop-color="#ffef1c"/><stop offset="1" stop-color="#ffeb00"/></linearGradient>
<linearGradient id="w156" gradientUnits="userSpaceOnUse" x1="657.3" y1="171.7" x2="708.2" y2="117.1"><stop offset="0" stop-color="#ffffff"/><stop offset="0.04" stop-color="#fffdef"/><stop offset="0.08" stop-color="#fffbe0"/><stop offset="0.13" stop-color="#fff9ce"/><stop offset="0.2" stop-color="#fff5b6"/><stop offset="0.3" stop-color="#fff194"/><stop offset="0.42" stop-color="#ffec6e"/><stop offset="0.58" stop-color="#ffe643"/><stop offset="0.78" stop-color="#ffdf1b"/><stop offset="1" stop-color="#ffd900"/></linearGradient>
<linearGradient id="w157" gradientUnits="userSpaceOnUse" x1="657.3" y1="171.7" x2="710.6" y2="118.4"><stop offset="0" stop-color="#ffffff"/><stop offset="0.04" stop-color="#fffcef"/><stop offset="0.08" stop-color="#fff9df"/><stop offset="0.13" stop-color="#fff5cc"/><stop offset="0.2" stop-color="#fff1b3"/><stop offset="0.3" stop-color="#ffea91"/><stop offset="0.42" stop-color="#ffe36c"/><stop offset="0.58" stop-color="#ffda42"/><stop offset="0.78" stop-color="#ffd11a"/><stop offset="1" stop-color="#ffc800"/></linearGradient>
<linearGradient id="w158" gradientUnits="userSpaceOnUse" x1="657.3" y1="171.7" x2="713.0" y2="119.8"><stop offset="0" stop-color="#ffffff"/><stop offset="0.04" stop-color="#fffbee"/><stop offset="0.08" stop-color="#fff7de"/><stop offset="0.13" stop-color="#fff2cb"/><stop offset="0.2" stop-color="#ffecb1"/><stop offset="0.3" stop-color="#ffe38e"/><stop offset="0.42" stop-color="#ffda69"/><stop offset="0.58" stop-color="#ffcf40"/><stop offset="0.78" stop-color="#ffc31a"/><stop offset="1" stop-color="#ffb900"/></linearGradient>
<linearGradient id="w159" gradientUnits="userSpaceOnUse" x1="657.3" y1="171.7" x2="715.4" y2="121.2"><stop offset="0" stop-color="#ffffff"/><stop offset="0.04" stop-color="#fffaed"/><stop offset="0.08" stop-color="#fff5dd"/><stop offset="0.13" stop-color="#ffefc9"/><stop offset="0.2" stop-color="#ffe7af"/><stop offset="0.3" stop-color="#ffdd8c"/><stop offset="0.42" stop-color="#ffd267"/><stop offset="0.58" stop-color="#ffc43e"/><stop offset="0.78" stop-color="#ffb719"/><stop offset="1" stop-color="#ffab00"/></linearGradient>
<linearGradient id="w160" gradientUnits="userSpaceOnUse" x1="657.3" y1="171.7" x2="717.9" y2="122.6"><stop offset="0" stop-color="#ffffff"/><stop offset="0.04" stop-color="#fff9ed"/><stop offset="0.08" stop-color="#fff3db"/><stop offset="0.13" stop-color="#ffecc7"/><stop offset="0.2" stop-color="#ffe2ac"/><stop offset="0.3" stop-color="#ffd689"/><stop offset="0.42" stop-color="#ffc964"/><stop offset="0.58" stop-color="#ffba3c"/><stop offset="0.78" stop-color="#ffab18"/><stop offset="1" stop-color="#ff9d00"/></linearGradient>
<linearGradient id="w161" gradientUnits="userSpaceOnUse" x1="657.3" y1="171.7" x2="720.5" y2="124.1"><stop offset="0" stop-color="#ffffff"/><stop offset="0.04" stop-color="#fff7ec"/><stop offset="0.08" stop-color="#fff0da"/><stop offset="0.13" stop-color="#ffe8c5"/><stop offset="0.2" stop-color="#ffdeaa"/><stop offset="0.3" stop-color="#ffd086"/><stop offset="0.42" stop-color="#ffc162"/><stop offset="0.58" stop-color="#ffb03a"/><stop offset="0.78" stop-color="#ff9f17"/><stop offset="1" stop-color="#ff9100"/></linearGradient>
<linearGradient id="w162" gradientUnits="userSpaceOnUse" x1="657.3" y1="171.7" x2="723.2" y2="125.6"><stop offset="0" stop-color="#ffffff"/><stop offset="0.04" stop-color="#fff6eb"/><stop offset="0.08" stop-color="#ffeed9"/><stop offset="0.13" stop-color="#ffe5c3"/><stop offset="0.2" stop-color="#ffd9a8"/><stop offset="0.3" stop-color="#ffc984"/><stop offset="0.42" stop-color="#ffb95f"/><stop offset="0.58" stop-color="#ffa739"/><stop offset="0.78" stop-color="#ff9516"/><stop offset="1" stop-color="#ff8500"/></linearGradient>
<linearGradient id="w163" gradientUnits="userSpaceOnUse" x1="657.3" y1="171.7" x2="725.9" y2="127.2"><stop offset="0" stop-color="#ffffff"/><stop offset="0.04" stop-color="#fff5ea"/><stop offset="0.08" stop-color="#ffecd7"/><stop offset="0.13" stop-color="#ffe1c1"/><stop offset="0.2" stop-color="#ffd4a5"/><stop offset="0.3" stop-color="#ffc381"/><stop offset="0.42" stop-color="#ffb15d"/><stop offset="0.58" stop-color="#ff9d37"/><stop offset="0.78" stop-color="#ff8a16"/><stop offset="1" stop-color="#ff7a00"/></linearGradient>
<linearGradient id="w164" gradientUnits="userSpaceOnUse" x1="657.3" y1="171.7" x2="728.7" y2="128.8"><stop offset="0" stop-color="#ffffff"/><stop offset="0.04" stop-color="#fff4ea"/><stop offset="0.08" stop-color="#ffead6"/><stop offset="0.13" stop-color="#ffdebf"/><stop offset="0.2" stop-color="#ffcfa3"/><stop offset="0.3" stop-color="#ffbc7f"/><stop offset="0.42" stop-color="#ffa95a"/><stop offset="0.58" stop-color="#ff9435"/><stop offset="0.78" stop-color="#ff8015"/><stop offset="1" stop-color="#ff7000"/></linearGradient>
<linearGradient id="w165" gradientUnits="userSpaceOnUse" x1="657.3" y1="171.7" x2="731.7" y2="130.5"><stop offset="0" stop-color="#ffffff"/><stop offset="0.04" stop-color="#fff2e9"/><stop offset="0.08" stop-color="#ffe7d4"/><stop offset="0.13" stop-color="#ffdabd"/><stop offset="0.2" stop-color="#ffcaa0"/><stop offset="0.3" stop-color="#ffb67c"/><stop offset="0.42" stop-color="#ffa158"/><stop offset="0.58" stop-color="#ff8b33"/><stop offset="0.78" stop-color="#ff7714"/><stop offset="1" stop-color="#ff6600"/></linearGradient>
<linearGradient id="w166" gradientUnits="userSpaceOnUse" x1="657.3" y1="171.7" x2="734.8" y2="132.2"><stop offset="0" stop-color="#ffffff"/><stop offset="0.04" stop-color="#fff1e8"/><stop offset="0.08" stop-color="#ffe5d3"/><stop offset="0.13" stop-color="#ffd7bb"/><stop offset="0.2" stop-color="#ffc59e"/><stop offset="0.3" stop-color="#ffaf79"/><stop offset="0.42" stop-color="#ff9a55"/><stop offset="0.58" stop-color="#ff8331"/><stop offset="0.78" stop-color="#ff6d13"/><stop offset="1" stop-color="#ff5c00"/></linearGradient>
<linearGradient id="w167" gradientUnits="userSpaceOnUse" x1="657.3" y1="171.7" x2="738.0" y2="134.1"><stop offset="0" stop-color="#ffffff"/><stop offset="0.04" stop-color="#fff0e7"/><stop offset="0.08" stop-color="#ffe2d1"/><stop offset="0.13" stop-color="#ffd3b9"/><stop offset="0.2" stop-color="#ffc09b"/><stop offset="0.3" stop-color="#ffa976"/><stop offset="0.42" stop-color="#ff9253"/><stop offset="0.58" stop-color="#ff7a2f"/><stop offset="0.78" stop-color="#ff6412"/><stop offset="1" stop-color="#ff5300"/></linearGradient>
<linearGradient id="w168" gradientUnits="userSpaceOnUse" x1="657.3" y1="171.7" x2="741.4" y2="136.0"><stop offset="0" stop-color="#ffffff"/><stop offset="0.04" stop-color="#ffeee6"/><stop offset="0.08" stop-color="#ffe0d0"/><stop offset="0.13" stop-color="#ffcfb7"/><stop offset="0.2" stop-color="#ffbb99"/><stop offset="0.3" stop-color="#ffa274"/><stop offset="0.42" stop-color="#ff8a50"/><stop offset="0.58" stop-color="#ff712e"/><stop offset="0.78" stop-color="#ff5b12"/><stop offset="1" stop-color="#ff4a00"/></linearGradient>
<linearGradient id="w169" gradientUnits="userSpaceOnUse" x1="657.3" y1="171.7" x2="745.0" y2="138.1"><stop offset="0" stop-color="#ffffff"/><stop offset="0.04" stop-color="#ffede5"/><stop offset="0.08" stop-color="#ffddce"/><stop offset="0.13" stop-color="#ffcbb5"/><stop offset="0.2" stop-color="#ffb696"/><stop offset="0.3" stop-color="#ff9b71"/><stop offset="0.42" stop-color="#ff824e"/><stop offset="0.58" stop-color="#ff692c"/><stop offset="0.78" stop-color="#ff5311"/><stop offset="1" stop-color="#ff4200"/></linearGradient>
<linearGradient id="w170" gradientUnits="userSpaceOnUse" x1="657.3" y1="171.7" x2="748.8" y2="140.2"><stop offset="0" stop-color="#ffffff"/><stop offset="0.04" stop-color="#ffebe4"/><stop offset="0.08" stop-color="#ffdacd"/><stop offset="0.13" stop-color="#ffc7b3"/><stop offset="0.2" stop-color="#ffb093"/><stop offset="0.3" stop-color="#ff956e"/><stop offset="0.42" stop-color="#ff7a4b"/><stop offset="0.58" stop-color="#ff612a"/><stop offset="0.78" stop-color="#ff4a10"/><stop offset="1" stop-color="#ff3a00"/></linearGradient>
<linearGradient id="w171" gradientUnits="userSpaceOnUse" x1="657.3" y1="171.7" x2="752.8" y2="142.5"><stop offset="0" stop-color="#ffffff"/><stop offset="0.04" stop-color="#ffe9e3"/><stop offset="0.08" stop-color="#ffd7cb"/><stop offset="0.13" stop-color="#ffc3b1"/><stop offset="0.2" stop-color="#ffab91"/><stop offset="0.3" stop-color="#ff8e6b"/><stop offset="0.42" stop-color="#ff7348"/><stop offset="0.58" stop-color="#ff5828"/><stop offset="0.78" stop-color="#ff420f"/><stop offset="1" stop-color="#ff3200"/></linearGradient>
<linearGradient id="w172" gradientUnits="userSpaceOnUse" x1="657.3" y1="171.7" x2="757.1" y2="145.0"><stop offset="0" stop-color="#ffffff"/><stop offset="0.04" stop-color="#ffe8e2"/><stop offset="0.08" stop-color="#ffd4c9"/><stop offset="0.13" stop-color="#ffbeae"/><stop offset="0.2" stop-color="#ffa58e"/><stop offset="0.3" stop-color="#ff8668"/><stop offset="0.42" stop-color="#ff6b46"/><stop offset="0.58" stop-color="#ff5027"/><stop offset="0.78" stop-color="#ff3a0f"/><stop offset="1" stop-color="#ff2a00"/></linearGradient>
<linearGradient id="w173" gradientUnits="userSpaceOnUse" x1="657.3" y1="171.7" x2="761.7" y2="147.6"><stop offset="0" stop-color="#ffffff"/><stop offset="0.04" stop-color="#ffe6e1"/><stop offset="0.08" stop-color="#ffd1c7"/><stop offset="0.13" stop-color="#ffbaac"/><stop offset="0.2" stop-color="#ff9f8b"/><stop offset="0.3" stop-color="#ff7f65"/><stop offset="0.42" stop-color="#ff6343"/><stop offset="0.58" stop-color="#ff4825"/><stop offset="0.78" stop-color="#ff330e"/><stop offset="1" stop-color="#ff2300"/></linearGradient>
<linearGradient id="w174" gradientUnits="userSpaceOnUse" x1="657.3" y1="171.7" x2="766.7" y2="150.5"><stop offset="0" stop-color="#ffffff"/><stop offset="0.04" stop-color="#ffe4df"/><stop offset="0.08" stop-color="#ffcdc5"/><stop offset="0.13" stop-color="#ffb5a9"/><stop offset="0.2" stop-color="#ff9887"/><stop offset="0.3" stop-color="#ff7762"/><stop offset="0.42" stop-color="#ff5b41"/><stop offset="0.58" stop-color="#ff4023"/><stop offset="0.78" stop-color="#ff2b0d"/><stop offset="1" stop-color="#ff1c00"/></linearGradient>
<linearGradient id="w175" gradientUnits="userSpaceOnUse" x1="657.3" y1="171.7" x2="772.1" y2="153.6"><stop offset="0" stop-color="#ffffff"/><stop offset="0.04" stop-color="#ffe2de"/><stop offset="0.08" stop-color="#ffc9c3"/><stop offset="0.13" stop-color="#ffb0a6"/><stop offset="0.2" stop-color="#ff9284"/><stop offset="0.3" stop-color="#ff705e"/><stop offset="0.42" stop-color="#ff523e"/><stop offset="0.58" stop-color="#ff3822"/><stop offset="0.78" stop-color="#ff240d"/><stop offset="1" stop-color="#ff1500"/></linearGradient>
<linearGradient id="w176" gradientUnits="userSpaceOnUse" x1="657.3" y1="171.7" x2="778.0" y2="156.9"><stop offset="0" stop-color="#ffffff"/><stop offset="0.04" stop-color="#ffdfdd"/><stop offset="0.08" stop-color="#ffc5c1"/><stop offset="0.13" stop-color="#ffaaa3"/><stop offset="0.2" stop-color="#ff8b81"/><stop offset="0.3" stop-color="#ff685b"/><stop offset="0.42" stop-color="#ff4a3b"/><stop offset="0.58" stop-color="#ff3020"/><stop offset="0.78" stop-color="#ff1c0c"/><stop offset="1" stop-color="#ff0f00"/></linearGradient>
<linearGradient id="w177" gradientUnits="userSpaceOnUse" x1="657.3" y1="171.7" x2="784.4" y2="160.6"><stop offset="0" stop-color="#ffffff"/><stop offset="0.04" stop-color="#ffdddb"/><stop offset="0.08" stop-color="#ffc1be"/><stop offset="0.13" stop-color="#ffa4a0"/><stop offset="0.2" stop-color="#ff837d"/><stop offset="0.3" stop-color="#ff5f57"/><stop offset="0.42" stop-color="#ff4239"/><stop offset="0.58" stop-color="#ff281e"/><stop offset="0.78" stop-color="#ff150b"/><stop offset="1" stop-color="#ff0900"/></linearGradient>
<linearGradient id="w178" gradientUnits="userSpaceOnUse" x1="657.3" y1="171.7" x2="791.6" y2="164.7"><stop offset="0" stop-color="#ffffff"/><stop offset="0.04" stop-color="#ffdad9"/><stop offset="0.08" stop-color="#ffbdbb"/><stop offset="0.13" stop-color="#ff9e9c"/><stop offset="0.2" stop-color="#ff7b79"/><stop offset="0.3" stop-color="#ff5754"/><stop offset="0.42" stop-color="#ff3936"/><stop offset="0.58" stop-color="#ff201d"/><stop offset="0.78" stop-color="#ff0e0b"/><stop offset="1" stop-color="#ff0300"/></linearGradient>
<linearGradient id="w179" gradientUnits="userSpaceOnUse" x1="657.3" y1="171.7" x2="790.9" y2="169.4"><stop offset="0" stop-color="#ffffff"/><stop offset="0.04" stop-color="#ffd9d9"/><stop offset="0.08" stop-color="#ffbbbc"/><stop offset="0.13" stop-color="#ff9c9d"/><stop offset="0.2" stop-color="#ff797a"/><stop offset="0.3" stop-color="#ff5355"/><stop offset="0.42" stop-color="#ff3638"/><stop offset="0.58" stop-color="#ff1d1f"/><stop offset="0.78" stop-color="#ff0b0d"/><stop offset="1" stop-color="#ff0002"/></linearGradient>
<linearGradient id="in1" x1="0" y1="0" x2="1" y2="0"><stop offset="0" stop-color="#80ffe6"/><stop offset="0.5" stop-color="#d2fff2"/><stop offset="1" stop-color="#fffff2"/></linearGradient>
<linearGradient id="in2" x1="0" y1="0" x2="1" y2="0"><stop offset="0" stop-color="#80acff"/><stop offset="0.5" stop-color="#c4b4ff"/><stop offset="0.8" stop-color="#fba0fb"/><stop offset="1" stop-color="#ffa4f6"/></linearGradient>
<linearGradient id="inm" x1="0" y1="0" x2="0" y2="1"><stop offset="0" stop-color="#fff" stop-opacity="0"/><stop offset="1" stop-color="#fff" stop-opacity="1"/></linearGradient>
<mask id="inmask"><rect x="759" y="20" width="117" height="94" fill="url(#inm)"/></mask>
<radialGradient id="ing" cx="0.72" cy="0.36" r="0.55"><stop offset="0" stop-color="#fff" stop-opacity="0.45"/><stop offset="0.5" stop-color="#fff" stop-opacity="0.22"/><stop offset="1" stop-color="#fff" stop-opacity="0"/></radialGradient>
<linearGradient id="bR" x1="0" y1="0" x2="0" y2="1"><stop offset="0" stop-color="#ff3030"/><stop offset="0.5" stop-color="#c00000"/><stop offset="1" stop-color="#700000"/></linearGradient>
<linearGradient id="bG" x1="0" y1="0" x2="0" y2="1"><stop offset="0" stop-color="#008a20"/><stop offset="0.5" stop-color="#007018"/><stop offset="1" stop-color="#004008"/></linearGradient>
<linearGradient id="bB" x1="0" y1="0" x2="0" y2="1"><stop offset="0" stop-color="#2020ff"/><stop offset="0.5" stop-color="#0000e8"/><stop offset="1" stop-color="#000090"/></linearGradient>
<linearGradient id="th" x1="0" y1="0" x2="0" y2="1"><stop offset="0" stop-color="#1c1c1c"/><stop offset="0.55" stop-color="#262626"/><stop offset="0.6" stop-color="#101010"/><stop offset="1" stop-color="#0c0c0c"/></linearGradient>
</defs>
<rect x="0" y="0" width="880" height="403" fill="#353535"/>
<rect x="0" y="0" width="1" height="403" fill="#3b3b3b"/>
<rect x="1" y="0" width="1.5" height="403" fill="#303030"/>
<text x="13.3" y="24.5" font-size="20.3" fill="#f2f2f2" textLength="102" lengthAdjust="spacingAndGlyphs">Colorspace</text>
<rect x="11" y="51.5" width="177.3" height="206.7" fill="#262626"/>
<line x1="34.6" y1="51.5" x2="34.6" y2="258.2" stroke="#6a6a6a" stroke-width="1"/>
<line x1="58.2" y1="51.5" x2="58.2" y2="258.2" stroke="#6a6a6a" stroke-width="1"/>
<line x1="81.8" y1="51.5" x2="81.8" y2="258.2" stroke="#6a6a6a" stroke-width="1"/>
<line x1="105.4" y1="51.5" x2="105.4" y2="258.2" stroke="#6a6a6a" stroke-width="1"/>
<line x1="129.0" y1="51.5" x2="129.0" y2="258.2" stroke="#6a6a6a" stroke-width="1"/>
<line x1="152.6" y1="51.5" x2="152.6" y2="258.2" stroke="#6a6a6a" stroke-width="1"/>
<line x1="176.2" y1="51.5" x2="176.2" y2="258.2" stroke="#6a6a6a" stroke-width="1"/>
<rect x="11" y="51.5" width="177.3" height="206.7" fill="none" stroke="#8c8c8c" stroke-width="1"/>
<line x1="11.0" y1="258.2" x2="11.0" y2="261.2" stroke="#8c8c8c" stroke-width="1"/>
<text x="11.0" y="270.8" font-size="8.3" fill="#d0d0d0" text-anchor="middle" textLength="3.7" lengthAdjust="spacingAndGlyphs">0</text>
<line x1="34.6" y1="258.2" x2="34.6" y2="261.2" stroke="#8c8c8c" stroke-width="1"/>
<text x="34.6" y="270.8" font-size="8.3" fill="#d0d0d0" text-anchor="middle" textLength="3.7" lengthAdjust="spacingAndGlyphs">2</text>
<line x1="58.2" y1="258.2" x2="58.2" y2="261.2" stroke="#8c8c8c" stroke-width="1"/>
<text x="58.2" y="270.8" font-size="8.3" fill="#d0d0d0" text-anchor="middle" textLength="3.7" lengthAdjust="spacingAndGlyphs">4</text>
<line x1="81.8" y1="258.2" x2="81.8" y2="261.2" stroke="#8c8c8c" stroke-width="1"/>
<text x="81.8" y="270.8" font-size="8.3" fill="#d0d0d0" text-anchor="middle" textLength="3.7" lengthAdjust="spacingAndGlyphs">6</text>
<line x1="105.4" y1="258.2" x2="105.4" y2="261.2" stroke="#8c8c8c" stroke-width="1"/>
<text x="105.4" y="270.8" font-size="8.3" fill="#d0d0d0" text-anchor="middle" textLength="3.7" lengthAdjust="spacingAndGlyphs">8</text>
<line x1="129.0" y1="258.2" x2="129.0" y2="261.2" stroke="#8c8c8c" stroke-width="1"/>
<text x="129.0" y="270.8" font-size="8.3" fill="#d0d0d0" text-anchor="middle" textLength="7.4" lengthAdjust="spacingAndGlyphs">10</text>
<line x1="152.6" y1="258.2" x2="152.6" y2="261.2" stroke="#8c8c8c" stroke-width="1"/>
<text x="152.6" y="270.8" font-size="8.3" fill="#d0d0d0" text-anchor="middle" textLength="7.4" lengthAdjust="spacingAndGlyphs">12</text>
<line x1="176.2" y1="258.2" x2="176.2" y2="261.2" stroke="#8c8c8c" stroke-width="1"/>
<text x="176.2" y="270.8" font-size="8.3" fill="#d0d0d0" text-anchor="middle" textLength="7.4" lengthAdjust="spacingAndGlyphs">14</text>
<text x="99.7" y="49" font-size="8.3" fill="#d0d0d0" text-anchor="middle" textLength="41.5" lengthAdjust="spacingAndGlyphs">DeltaE 2000</text>
<rect x="11" y="55.0" width="78.3" height="20" fill="#141414"/>
<rect x="11" y="55.0" width="77.5" height="19.2" fill="url(#gW)"/>
<rect x="11" y="80.9" width="48.7" height="20" fill="#141414"/>
<rect x="11" y="80.9" width="47.9" height="19.2" fill="url(#gY)"/>
<rect x="11" y="106.8" width="57.5" height="20" fill="#141414"/>
<rect x="11" y="106.8" width="56.7" height="19.2" fill="url(#gM)"/>
<rect x="11" y="132.7" width="61.9" height="20" fill="#141414"/>
<rect x="11" y="132.7" width="61.1" height="19.2" fill="url(#gC)"/>
<rect x="11" y="158.6" width="110.4" height="20" fill="#141414"/>
<rect x="11" y="158.6" width="109.6" height="19.2" fill="url(#gB)"/>
<rect x="11" y="184.5" width="49.6" height="20" fill="#141414"/>
<rect x="11" y="184.5" width="48.8" height="19.2" fill="url(#gG)"/>
<rect x="11" y="210.4" width="26.7" height="20" fill="#141414"/>
<rect x="11" y="210.4" width="25.9" height="19.2" fill="url(#gR)"/>
<rect x="11" y="236.3" width="73.3" height="20" fill="#141414"/>
<rect x="11" y="236.3" width="72.5" height="19.2" fill="url(#gL)"/>
<rect x="216.5" y="18.5" width="76.10000000000002" height="158.7" fill="#262626"/>
<line x1="216.5" y1="45.0" x2="292.6" y2="45.0" stroke="#6a6a6a" stroke-width="1"/>
<line x1="216.5" y1="71.4" x2="292.6" y2="71.4" stroke="#6a6a6a" stroke-width="1"/>
<line x1="216.5" y1="97.8" x2="292.6" y2="97.8" stroke="#6a6a6a" stroke-width="1"/>
<line x1="216.5" y1="124.3" x2="292.6" y2="124.3" stroke="#6a6a6a" stroke-width="1"/>
<line x1="216.5" y1="150.8" x2="292.6" y2="150.8" stroke="#6a6a6a" stroke-width="1"/>
<path d="M216.5 177.2V18.5H292.6V177.2" fill="none" stroke="#8c8c8c" stroke-width="1"/>
<line x1="213.5" y1="18.5" x2="216.5" y2="18.5" stroke="#8c8c8c" stroke-width="1"/>
<text x="213.1" y="21.5" font-size="8.3" fill="#d0d0d0" text-anchor="end" textLength="7.4" lengthAdjust="spacingAndGlyphs">15</text>
<line x1="213.5" y1="45.0" x2="216.5" y2="45.0" stroke="#8c8c8c" stroke-width="1"/>
<text x="213.1" y="48.0" font-size="8.3" fill="#d0d0d0" text-anchor="end" textLength="7.4" lengthAdjust="spacingAndGlyphs">10</text>
<line x1="213.5" y1="71.4" x2="216.5" y2="71.4" stroke="#8c8c8c" stroke-width="1"/>
<text x="213.1" y="74.4" font-size="8.3" fill="#d0d0d0" text-anchor="end" textLength="3.7" lengthAdjust="spacingAndGlyphs">5</text>
<line x1="213.5" y1="97.8" x2="216.5" y2="97.8" stroke="#8c8c8c" stroke-width="1"/>
<text x="213.1" y="100.8" font-size="8.3" fill="#d0d0d0" text-anchor="end" textLength="3.7" lengthAdjust="spacingAndGlyphs">0</text>
<line x1="213.5" y1="124.3" x2="216.5" y2="124.3" stroke="#8c8c8c" stroke-width="1"/>
<text x="213.1" y="127.3" font-size="8.3" fill="#d0d0d0" text-anchor="end" textLength="6.0" lengthAdjust="spacingAndGlyphs">-5</text>
<line x1="213.5" y1="150.8" x2="216.5" y2="150.8" stroke="#8c8c8c" stroke-width="1"/>
<text x="213.1" y="153.8" font-size="8.3" fill="#d0d0d0" text-anchor="end" textLength="9.7" lengthAdjust="spacingAndGlyphs">-10</text>
<line x1="213.5" y1="177.2" x2="216.5" y2="177.2" stroke="#8c8c8c" stroke-width="1"/>
<text x="213.1" y="180.2" font-size="8.3" fill="#d0d0d0" text-anchor="end" textLength="9.7" lengthAdjust="spacingAndGlyphs">-15</text>
<line x1="216.5" y1="177.2" x2="216.5" y2="180.2" stroke="#8c8c8c"/>
<line x1="292.6" y1="177.2" x2="292.6" y2="180.2" stroke="#8c8c8c"/>
<text x="248.15" y="15.5" font-size="8.3" fill="#d0d0d0" text-anchor="middle" textLength="21.8" lengthAdjust="spacingAndGlyphs">DeltaL</text>
<text x="254.55" y="185.5" font-size="8.3" fill="#d0d0d0" text-anchor="middle" textLength="19.6" lengthAdjust="spacingAndGlyphs">100W</text>
<line x1="224.7" y1="97.8" x2="284.40000000000003" y2="97.8" stroke="#0e0e0e" stroke-width="1.3"/>
<rect x="321" y="18.5" width="76.39999999999998" height="158.7" fill="#262626"/>
<line x1="321" y1="45.0" x2="397.4" y2="45.0" stroke="#6a6a6a" stroke-width="1"/>
<line x1="321" y1="71.4" x2="397.4" y2="71.4" stroke="#6a6a6a" stroke-width="1"/>
<line x1="321" y1="97.8" x2="397.4" y2="97.8" stroke="#6a6a6a" stroke-width="1"/>
<line x1="321" y1="124.3" x2="397.4" y2="124.3" stroke="#6a6a6a" stroke-width="1"/>
<line x1="321" y1="150.8" x2="397.4" y2="150.8" stroke="#6a6a6a" stroke-width="1"/>
<path d="M321 177.2V18.5H397.4V177.2" fill="none" stroke="#8c8c8c" stroke-width="1"/>
<line x1="318" y1="18.5" x2="321" y2="18.5" stroke="#8c8c8c" stroke-width="1"/>
<text x="317.6" y="21.5" font-size="8.3" fill="#d0d0d0" text-anchor="end" textLength="7.4" lengthAdjust="spacingAndGlyphs">15</text>
<line x1="318" y1="45.0" x2="321" y2="45.0" stroke="#8c8c8c" stroke-width="1"/>
<text x="317.6" y="48.0" font-size="8.3" fill="#d0d0d0" text-anchor="end" textLength="7.4" lengthAdjust="spacingAndGlyphs">10</text>
<line x1="318" y1="71.4" x2="321" y2="71.4" stroke="#8c8c8c" stroke-width="1"/>
<text x="317.6" y="74.4" font-size="8.3" fill="#d0d0d0" text-anchor="end" textLength="3.7" lengthAdjust="spacingAndGlyphs">5</text>
<line x1="318" y1="97.8" x2="321" y2="97.8" stroke="#8c8c8c" stroke-width="1"/>
<text x="317.6" y="100.8" font-size="8.3" fill="#d0d0d0" text-anchor="end" textLength="3.7" lengthAdjust="spacingAndGlyphs">0</text>
<line x1="318" y1="124.3" x2="321" y2="124.3" stroke="#8c8c8c" stroke-width="1"/>
<text x="317.6" y="127.3" font-size="8.3" fill="#d0d0d0" text-anchor="end" textLength="6.0" lengthAdjust="spacingAndGlyphs">-5</text>
<line x1="318" y1="150.8" x2="321" y2="150.8" stroke="#8c8c8c" stroke-width="1"/>
<text x="317.6" y="153.8" font-size="8.3" fill="#d0d0d0" text-anchor="end" textLength="9.7" lengthAdjust="spacingAndGlyphs">-10</text>
<line x1="318" y1="177.2" x2="321" y2="177.2" stroke="#8c8c8c" stroke-width="1"/>
<text x="317.6" y="180.2" font-size="8.3" fill="#d0d0d0" text-anchor="end" textLength="9.7" lengthAdjust="spacingAndGlyphs">-15</text>
<line x1="321" y1="177.2" x2="321" y2="180.2" stroke="#8c8c8c"/>
<line x1="397.4" y1="177.2" x2="397.4" y2="180.2" stroke="#8c8c8c"/>
<text x="352.8" y="15.5" font-size="8.3" fill="#d0d0d0" text-anchor="middle" textLength="21.8" lengthAdjust="spacingAndGlyphs">DeltaC</text>
<text x="359.2" y="185.5" font-size="8.3" fill="#d0d0d0" text-anchor="middle" textLength="19.6" lengthAdjust="spacingAndGlyphs">100W</text>
<rect x="329.2" y="63.3" width="59.5" height="34.6" fill="url(#gDC)"/>
<rect x="425.6" y="18.5" width="76.09999999999997" height="158.7" fill="#262626"/>
<line x1="425.6" y1="45.0" x2="501.7" y2="45.0" stroke="#6a6a6a" stroke-width="1"/>
<line x1="425.6" y1="71.4" x2="501.7" y2="71.4" stroke="#6a6a6a" stroke-width="1"/>
<line x1="425.6" y1="97.8" x2="501.7" y2="97.8" stroke="#6a6a6a" stroke-width="1"/>
<line x1="425.6" y1="124.3" x2="501.7" y2="124.3" stroke="#6a6a6a" stroke-width="1"/>
<line x1="425.6" y1="150.8" x2="501.7" y2="150.8" stroke="#6a6a6a" stroke-width="1"/>
<path d="M425.6 177.2V18.5H501.7V177.2" fill="none" stroke="#8c8c8c" stroke-width="1"/>
<line x1="422.6" y1="18.5" x2="425.6" y2="18.5" stroke="#8c8c8c" stroke-width="1"/>
<text x="422.20000000000005" y="21.5" font-size="8.3" fill="#d0d0d0" text-anchor="end" textLength="7.4" lengthAdjust="spacingAndGlyphs">15</text>
<line x1="422.6" y1="45.0" x2="425.6" y2="45.0" stroke="#8c8c8c" stroke-width="1"/>
<text x="422.20000000000005" y="48.0" font-size="8.3" fill="#d0d0d0" text-anchor="end" textLength="7.4" lengthAdjust="spacingAndGlyphs">10</text>
<line x1="422.6" y1="71.4" x2="425.6" y2="71.4" stroke="#8c8c8c" stroke-width="1"/>
<text x="422.20000000000005" y="74.4" font-size="8.3" fill="#d0d0d0" text-anchor="end" textLength="3.7" lengthAdjust="spacingAndGlyphs">5</text>
<line x1="422.6" y1="97.8" x2="425.6" y2="97.8" stroke="#8c8c8c" stroke-width="1"/>
<text x="422.20000000000005" y="100.8" font-size="8.3" fill="#d0d0d0" text-anchor="end" textLength="3.7" lengthAdjust="spacingAndGlyphs">0</text>
<line x1="422.6" y1="124.3" x2="425.6" y2="124.3" stroke="#8c8c8c" stroke-width="1"/>
<text x="422.20000000000005" y="127.3" font-size="8.3" fill="#d0d0d0" text-anchor="end" textLength="6.0" lengthAdjust="spacingAndGlyphs">-5</text>
<line x1="422.6" y1="150.8" x2="425.6" y2="150.8" stroke="#8c8c8c" stroke-width="1"/>
<text x="422.20000000000005" y="153.8" font-size="8.3" fill="#d0d0d0" text-anchor="end" textLength="9.7" lengthAdjust="spacingAndGlyphs">-10</text>
<line x1="422.6" y1="177.2" x2="425.6" y2="177.2" stroke="#8c8c8c" stroke-width="1"/>
<text x="422.20000000000005" y="180.2" font-size="8.3" fill="#d0d0d0" text-anchor="end" textLength="9.7" lengthAdjust="spacingAndGlyphs">-15</text>
<line x1="425.6" y1="177.2" x2="425.6" y2="180.2" stroke="#8c8c8c"/>
<line x1="501.7" y1="177.2" x2="501.7" y2="180.2" stroke="#8c8c8c"/>
<text x="457.25" y="15.5" font-size="8.3" fill="#d0d0d0" text-anchor="middle" textLength="21.8" lengthAdjust="spacingAndGlyphs">DeltaH</text>
<text x="463.65" y="185.5" font-size="8.3" fill="#d0d0d0" text-anchor="middle" textLength="19.6" lengthAdjust="spacingAndGlyphs">100W</text>
<line x1="433.8" y1="97.8" x2="493.5" y2="97.8" stroke="#0e0e0e" stroke-width="1.3"/>
<rect x="199" y="193.1" width="314" height="81.6" fill="#000"/>
<rect x="207.7" y="196.4" width="33.4" height="33.6" fill="#c0c4e0"/>
<rect x="207.7" y="230" width="33.4" height="33.2" fill="#c2c6da"/>
<rect x="208.2" y="196.9" width="32.4" height="65.8" fill="none" stroke="#fff" stroke-opacity="0.45" stroke-width="1"/>
<text x="224.4" y="271.3" font-size="6.8" fill="#fff" text-anchor="middle" textLength="17.2" lengthAdjust="spacingAndGlyphs" font-weight="bold">White</text>
<rect x="246.0" y="196.4" width="33.4" height="33.6" fill="#c20000"/>
<rect x="246.0" y="230" width="33.4" height="33.2" fill="#c01616"/>
<rect x="246.5" y="196.9" width="32.4" height="65.8" fill="none" stroke="#fff" stroke-opacity="0.45" stroke-width="1"/>
<text x="262.7" y="271.3" font-size="6.8" fill="#fff" text-anchor="middle" textLength="11.5" lengthAdjust="spacingAndGlyphs" font-weight="bold">Red</text>
<rect x="284.4" y="196.4" width="33.4" height="33.6" fill="#2cc800"/>
<rect x="284.4" y="230" width="33.4" height="33.2" fill="#38c048"/>
<rect x="284.9" y="196.9" width="32.4" height="65.8" fill="none" stroke="#fff" stroke-opacity="0.45" stroke-width="1"/>
<text x="301.1" y="271.3" font-size="6.8" fill="#fff" text-anchor="middle" textLength="18" lengthAdjust="spacingAndGlyphs" font-weight="bold">Green</text>
<rect x="322.7" y="196.4" width="33.4" height="33.6" fill="#5000f0"/>
<rect x="322.7" y="230" width="33.4" height="33.2" fill="#4040c8"/>
<rect x="323.2" y="196.9" width="32.4" height="65.8" fill="none" stroke="#fff" stroke-opacity="0.45" stroke-width="1"/>
<text x="339.4" y="271.3" font-size="6.8" fill="#fff" text-anchor="middle" textLength="13.5" lengthAdjust="spacingAndGlyphs" font-weight="bold">Blue</text>
<rect x="361.0" y="196.4" width="33.4" height="33.6" fill="#28c0d8"/>
<rect x="361.0" y="230" width="33.4" height="33.2" fill="#00c0c8"/>
<rect x="361.5" y="196.9" width="32.4" height="65.8" fill="none" stroke="#fff" stroke-opacity="0.45" stroke-width="1"/>
<text x="377.7" y="271.3" font-size="6.8" fill="#fff" text-anchor="middle" textLength="14.5" lengthAdjust="spacingAndGlyphs" font-weight="bold">Cyan</text>
<rect x="399.3" y="196.4" width="33.4" height="33.6" fill="#c400e8"/>
<rect x="399.3" y="230" width="33.4" height="33.2" fill="#c040d0"/>
<rect x="399.8" y="196.9" width="32.4" height="65.8" fill="none" stroke="#fff" stroke-opacity="0.45" stroke-width="1"/>
<text x="416.0" y="271.3" font-size="6.8" fill="#fff" text-anchor="middle" textLength="26" lengthAdjust="spacingAndGlyphs" font-weight="bold">Magenta</text>
<rect x="437.7" y="196.4" width="33.4" height="33.6" fill="#c0cc00"/>
<rect x="437.7" y="230" width="33.4" height="33.2" fill="#c0c048"/>
<rect x="438.2" y="196.9" width="32.4" height="65.8" fill="none" stroke="#fff" stroke-opacity="0.45" stroke-width="1"/>
<text x="454.4" y="271.3" font-size="6.8" fill="#fff" text-anchor="middle" textLength="19" lengthAdjust="spacingAndGlyphs" font-weight="bold">Yellow</text>
<rect x="476.0" y="196.4" width="33.4" height="33.6" fill="#e0e4ff"/>
<rect x="476.0" y="230" width="33.4" height="33.2" fill="#e4e8f8"/>
<rect x="476.5" y="196.9" width="32.4" height="65.8" fill="none" stroke="#fff" stroke-opacity="0.45" stroke-width="1"/>
<text x="492.7" y="271.3" font-size="6.8" fill="#fff" text-anchor="middle" textLength="16.5" lengthAdjust="spacingAndGlyphs" font-weight="bold">100W</text>
<text transform="translate(205.9,211.3) rotate(-90)" font-size="6.6" fill="#fff" font-weight="bold" text-anchor="middle" textLength="17.5" lengthAdjust="spacingAndGlyphs">Actual</text>
<text transform="translate(205.9,248.1) rotate(-90)" font-size="6.6" fill="#fff" font-weight="bold" text-anchor="middle" textLength="17.5" lengthAdjust="spacingAndGlyphs">Target</text>
<rect x="516" y="2" width="370" height="280.5" fill="#1f1f1f"/>
<rect x="520" y="5.5" width="366" height="272" fill="#333333"/>
<rect x="535.5" y="17.4" width="342.29999999999995" height="246.6" fill="#252525"/>
<g mask="url(#hs)">
<rect x="530" y="10" width="350" height="260" fill="#00ff00"/>
<polygon points="796.2,167.3 1317.2,464.9 1353.9,-53.8" fill="#ff0000" stroke="#ff0000" stroke-width="2.5"/>
<polygon points="596.6,246.4 380.5,806.1 38.8,467.5" fill="#0000ff" stroke="#0000ff" stroke-width="2.5"/>
<path d="M598.0 245.9L238 388L234 377L600.1 240.6Z" fill="#0000ff"/>
<path d="M599.0 243.2L236 383L232 372L601.1 238.0Z" fill="#0000ff"/>
<path d="M600.1 240.6L234 377L230 366L602.1 235.4Z" fill="#0001ff"/>
<path d="M601.1 238.0L232 372L228 360L603.0 232.9Z" fill="#0002ff"/>
<path d="M602.1 235.4L230 366L226 355L604.0 230.5Z" fill="#0003ff"/>
<path d="M603.0 232.9L228 360L224 349L604.9 228.1Z" fill="#0005ff"/>
<path d="M604.0 230.5L226 355L223 343L605.9 225.7Z" fill="#0007ff"/>
<path d="M604.9 228.1L224 349L221 338L606.8 223.4Z" fill="#0009ff"/>
<path d="M605.9 225.7L223 343L219 332L607.7 221.1Z" fill="#000cff"/>
<path d="M606.8 223.4L221 338L218 326L608.6 218.8Z" fill="#000eff"/>
<path d="M607.7 221.1L219 332L216 320L609.4 216.6Z" fill="#0012ff"/>
<path d="M608.6 218.8L218 326L215 315L610.3 214.4Z" fill="#0015ff"/>
<path d="M609.4 216.6L216 320L213 309L611.1 212.2Z" fill="#0019ff"/>
<path d="M610.3 214.4L215 315L212 303L612.0 210.0Z" fill="#001dff"/>
<path d="M611.1 212.2L213 309L210 297L612.8 207.9Z" fill="#0022ff"/>
<path d="M612.0 210.0L212 303L209 291L613.6 205.9Z" fill="#0027ff"/>
<path d="M612.8 207.9L210 297L208 285L614.4 203.8Z" fill="#002cff"/>
<path d="M613.6 205.9L209 291L207 280L615.2 201.8Z" fill="#0032ff"/>
<path d="M614.4 203.8L208 285L206 274L616.0 199.8Z" fill="#0039ff"/>
<path d="M615.2 201.8L207 280L205 268L616.8 197.8Z" fill="#0040ff"/>
<path d="M616.0 199.8L206 274L204 262L617.5 195.8Z" fill="#0047ff"/>
<path d="M616.8 197.8L205 268L203 256L618.3 193.9Z" fill="#004fff"/>
<path d="M617.5 195.8L204 262L202 250L619.0 192.0Z" fill="#0058ff"/>
<path d="M618.3 193.9L203 256L201 244L619.8 190.1Z" fill="#0062ff"/>
<path d="M619.0 192.0L202 250L200 238L620.5 188.2Z" fill="#006cff"/>
<path d="M619.8 190.1L201 244L200 232L621.2 186.4Z" fill="#0077ff"/>
<path d="M620.5 188.2L200 238L199 226L621.9 184.5Z" fill="#0083ff"/>
<path d="M621.2 186.4L200 232L199 220L622.6 182.7Z" fill="#008fff"/>
<path d="M621.9 184.5L199 226L198 214L623.3 180.9Z" fill="#009dff"/>
<path d="M622.6 182.7L199 220L198 208L624.0 179.1Z" fill="#00abff"/>
<path d="M623.3 180.9L198 214L197 202L624.7 177.4Z" fill="#00baff"/>
<path d="M624.0 179.1L198 208L197 197L625.4 175.6Z" fill="#00caff"/>
<path d="M624.7 177.4L197 202L197 191L626.1 173.9Z" fill="#00daff"/>
<path d="M625.4 175.6L197 197L196 185L626.7 172.2Z" fill="#00ebff"/>
<path d="M626.1 173.9L197 191L196 179L627.4 170.5Z" fill="#00fcff"/>
<path d="M626.7 172.2L196 185L196 173L628.1 168.8Z" fill="#00fff2"/>
<path d="M627.4 170.5L196 179L196 167L628.7 167.1Z" fill="#00ffe3"/>
<path d="M628.1 168.8L196 173L196 161L629.4 165.5Z" fill="#00ffd6"/>
<path d="M628.7 167.1L196 167L196 155L630.0 163.8Z" fill="#00ffcb"/>
<path d="M629.4 165.5L196 161L196 149L630.6 162.2Z" fill="#00ffc0"/>
<path d="M630.0 163.8L196 155L197 143L631.3 160.6Z" fill="#00ffb6"/>
<path d="M630.6 162.2L196 149L197 137L631.9 158.9Z" fill="#00ffad"/>
<path d="M631.3 160.6L197 143L197 131L632.5 157.3Z" fill="#00ffa5"/>
<path d="M631.9 158.9L197 137L198 125L633.1 155.7Z" fill="#00ff9d"/>
<path d="M632.5 157.3L197 131L198 119L633.8 154.2Z" fill="#00ff95"/>
<path d="M633.1 155.7L198 125L199 113L634.4 152.6Z" fill="#00ff8e"/>
<path d="M633.8 154.2L198 119L199 107L635.0 151.0Z" fill="#00ff87"/>
<path d="M634.4 152.6L199 113L200 101L635.6 149.5Z" fill="#00ff81"/>
<path d="M635.0 151.0L199 107L201 95L636.2 147.9Z" fill="#00ff7a"/>
<path d="M635.6 149.5L200 101L201 89L636.8 146.4Z" fill="#00ff74"/>
<path d="M636.2 147.9L201 95L202 83L637.4 144.8Z" fill="#00ff6e"/>
<path d="M636.8 146.4L201 89L203 77L638.0 143.3Z" fill="#00ff69"/>
<path d="M637.4 144.8L202 83L204 71L638.6 141.8Z" fill="#00ff64"/>
<path d="M638.0 143.3L203 77L205 66L639.2 140.3Z" fill="#00ff5e"/>
<path d="M638.6 141.8L204 71L206 60L639.7 138.8Z" fill="#00ff59"/>
<path d="M639.2 140.3L205 66L207 54L640.3 137.3Z" fill="#00ff55"/>
<path d="M639.7 138.8L206 60L208 48L640.9 135.8Z" fill="#00ff50"/>
<path d="M640.3 137.3L207 54L209 42L641.5 134.3Z" fill="#00ff4c"/>
<path d="M640.9 135.8L208 48L211 36L642.1 132.8Z" fill="#00ff48"/>
<path d="M641.5 134.3L209 42L212 30L642.6 131.3Z" fill="#00ff44"/>
<path d="M642.1 132.8L211 36L213 25L643.2 129.9Z" fill="#00ff40"/>
<path d="M642.6 131.3L212 30L215 19L643.8 128.4Z" fill="#00ff3c"/>
<path d="M643.2 129.9L213 25L216 13L644.3 126.9Z" fill="#00ff39"/>
<path d="M643.8 128.4L215 19L218 7L644.9 125.4Z" fill="#00ff35"/>
<path d="M644.3 126.9L216 13L220 2L645.5 124.0Z" fill="#00ff32"/>
<path d="M644.9 125.4L218 7L221 -4L646.0 122.5Z" fill="#00ff2f"/>
<path d="M645.5 124.0L220 2L223 -10L646.6 121.1Z" fill="#00ff2c"/>
<path d="M646.0 122.5L221 -4L225 -16L647.2 119.6Z" fill="#00ff29"/>
<path d="M646.6 121.1L223 -10L227 -21L647.7 118.1Z" fill="#00ff26"/>
<path d="M647.2 119.6L225 -16L229 -27L648.3 116.7Z" fill="#00ff23"/>
<path d="M647.7 118.1L227 -21L230 -33L648.9 115.2Z" fill="#00ff21"/>
<path d="M648.3 116.7L229 -27L232 -38L649.4 113.8Z" fill="#00ff1e"/>
<path d="M648.9 115.2L230 -33L235 -44L650.0 112.3Z" fill="#00ff1c"/>
<path d="M649.4 113.8L232 -38L237 -49L650.5 110.9Z" fill="#00ff19"/>
<path d="M650.0 112.3L235 -44L239 -55L651.1 109.4Z" fill="#00ff17"/>
<path d="M650.5 110.9L237 -49L241 -61L651.7 108.0Z" fill="#00ff15"/>
<path d="M651.1 109.4L239 -55L243 -66L652.2 106.5Z" fill="#00ff13"/>
<path d="M651.7 108.0L241 -61L246 -72L652.8 105.1Z" fill="#00ff11"/>
<path d="M652.2 106.5L243 -66L248 -77L653.3 103.6Z" fill="#00ff0f"/>
<path d="M652.8 105.1L246 -72L251 -82L653.9 102.2Z" fill="#00ff0d"/>
<path d="M653.3 103.6L248 -77L253 -88L654.5 100.7Z" fill="#00ff0c"/>
<path d="M653.9 102.2L251 -82L256 -93L655.0 99.3Z" fill="#00ff0a"/>
<path d="M654.5 100.7L253 -88L258 -99L655.6 97.8Z" fill="#00ff09"/>
<path d="M655.0 99.3L256 -93L261 -104L656.2 96.3Z" fill="#00ff07"/>
<path d="M655.6 97.8L258 -99L264 -109L656.7 94.9Z" fill="#00ff06"/>
<path d="M656.2 96.3L261 -104L267 -115L657.3 93.4Z" fill="#00ff04"/>
<path d="M656.7 94.9L264 -109L269 -120L657.9 91.9Z" fill="#00ff03"/>
<path d="M657.3 93.4L267 -115L272 -125L658.4 90.4Z" fill="#00ff02"/>
<path d="M657.9 91.9L269 -120L275 -130L659.0 88.9Z" fill="#00ff01"/>
<path d="M658.4 90.4L272 -125L275 -130L659.0 88.9Z" fill="#00ff00"/>
<path d="M657.1 89.6L813 -313L831 -306L662.0 92.4Z" fill="#02ff00"/>
<path d="M659.6 91.0L822 -310L840 -302L664.4 93.8Z" fill="#07ff00"/>
<path d="M662.0 92.4L831 -306L849 -298L666.8 95.1Z" fill="#0dff00"/>
<path d="M664.4 93.8L840 -302L858 -294L669.2 96.5Z" fill="#14ff00"/>
<path d="M666.8 95.1L849 -298L867 -289L671.6 97.9Z" fill="#1cff00"/>
<path d="M669.2 96.5L858 -294L876 -285L674.0 99.2Z" fill="#25ff00"/>
<path d="M671.6 97.9L867 -289L885 -280L676.4 100.6Z" fill="#2fff00"/>
<path d="M674.0 99.2L876 -285L893 -275L678.7 102.0Z" fill="#39ff00"/>
<path d="M676.4 100.6L885 -280L902 -270L681.1 103.3Z" fill="#45ff00"/>
<path d="M678.7 102.0L893 -275L910 -265L683.5 104.7Z" fill="#51ff00"/>
<path d="M681.1 103.3L902 -270L919 -260L685.9 106.0Z" fill="#5eff00"/>
<path d="M683.5 104.7L910 -265L927 -254L688.3 107.4Z" fill="#6cff00"/>
<path d="M685.9 106.0L919 -260L935 -249L690.7 108.8Z" fill="#7cff00"/>
<path d="M688.3 107.4L927 -254L943 -243L693.1 110.1Z" fill="#8cff00"/>
<path d="M690.7 108.8L935 -249L951 -238L695.5 111.5Z" fill="#9eff00"/>
<path d="M693.1 110.1L943 -243L959 -232L697.9 112.9Z" fill="#b1ff00"/>
<path d="M695.5 111.5L951 -238L967 -226L700.3 114.3Z" fill="#c6ff00"/>
<path d="M697.9 112.9L959 -232L975 -219L702.8 115.7Z" fill="#dcff00"/>
<path d="M700.3 114.3L967 -226L982 -213L705.2 117.1Z" fill="#f3ff00"/>
<path d="M702.8 115.7L975 -219L990 -207L707.7 118.5Z" fill="#fff400"/>
<path d="M705.2 117.1L982 -213L997 -200L710.2 119.9Z" fill="#ffdf00"/>
<path d="M707.7 118.5L990 -207L1005 -193L712.7 121.3Z" fill="#ffcd00"/>
<path d="M710.2 119.9L997 -200L1012 -187L715.2 122.7Z" fill="#ffbc00"/>
<path d="M712.7 121.3L1005 -193L1019 -180L717.8 124.2Z" fill="#ffad00"/>
<path d="M715.2 122.7L1012 -187L1026 -173L720.3 125.6Z" fill="#ff9f00"/>
<path d="M717.8 124.2L1019 -180L1033 -166L722.9 127.1Z" fill="#ff9300"/>
<path d="M720.3 125.6L1026 -173L1040 -158L725.5 128.6Z" fill="#ff8700"/>
<path d="M722.9 127.1L1033 -166L1046 -151L728.2 130.1Z" fill="#ff7d00"/>
<path d="M725.5 128.6L1040 -158L1053 -143L730.9 131.6Z" fill="#ff7300"/>
<path d="M728.2 130.1L1046 -151L1059 -136L733.6 133.2Z" fill="#ff6900"/>
<path d="M730.9 131.6L1053 -143L1065 -128L736.3 134.7Z" fill="#ff6100"/>
<path d="M733.6 133.2L1059 -136L1071 -120L739.1 136.3Z" fill="#ff5800"/>
<path d="M736.3 134.7L1065 -128L1077 -113L741.9 137.9Z" fill="#ff5100"/>
<path d="M739.1 136.3L1071 -120L1083 -105L744.8 139.5Z" fill="#ff4a00"/>
<path d="M741.9 137.9L1077 -113L1089 -96L747.7 141.2Z" fill="#ff4300"/>
<path d="M744.8 139.5L1083 -105L1095 -88L750.7 142.9Z" fill="#ff3d00"/>
<path d="M747.7 141.2L1089 -96L1100 -80L753.7 144.6Z" fill="#ff3700"/>
<path d="M750.7 142.9L1095 -88L1105 -72L756.7 146.3Z" fill="#ff3100"/>
<path d="M753.7 144.6L1100 -80L1110 -63L759.8 148.1Z" fill="#ff2c00"/>
<path d="M756.7 146.3L1105 -72L1116 -55L763.0 149.8Z" fill="#ff2700"/>
<path d="M759.8 148.1L1110 -63L1120 -46L766.2 151.7Z" fill="#ff2200"/>
<path d="M763.0 149.8L1116 -55L1125 -37L769.5 153.5Z" fill="#ff1d00"/>
<path d="M766.2 151.7L1120 -46L1130 -29L772.9 155.5Z" fill="#ff1900"/>
<path d="M769.5 153.5L1125 -37L1134 -20L776.3 157.4Z" fill="#ff1500"/>
<path d="M772.9 155.5L1130 -29L1139 -11L779.8 159.4Z" fill="#ff1100"/>
<path d="M776.3 157.4L1134 -20L1143 -2L783.4 161.4Z" fill="#ff0d00"/>
<path d="M779.8 159.4L1139 -11L1147 7L787.1 163.5Z" fill="#ff0a00"/>
<path d="M783.4 161.4L1143 -2L1151 16L790.9 165.7Z" fill="#ff0700"/>
<path d="M787.1 163.5L1147 7L1154 25L794.8 167.9Z" fill="#ff0400"/>
<path d="M790.9 165.7L1151 16L1154 25L794.8 167.9Z" fill="#ff0100"/>
<path d="M597.1 245.0L442 648L474 659L608.7 240.4Z" fill="#0100ff"/>
<path d="M603.0 242.7L458 654L490 664L614.0 238.2Z" fill="#0500ff"/>
<path d="M608.7 240.4L474 659L506 669L619.1 236.2Z" fill="#0b00ff"/>
<path d="M614.0 238.2L490 664L523 673L624.0 234.2Z" fill="#1500ff"/>
<path d="M619.1 236.2L506 669L540 676L628.8 232.3Z" fill="#2200ff"/>
<path d="M624.0 234.2L523 673L556 680L633.3 230.5Z" fill="#3100ff"/>
<path d="M628.8 232.3L540 676L573 682L637.7 228.7Z" fill="#4300ff"/>
<path d="M633.3 230.5L556 680L590 684L642.0 227.0Z" fill="#5900ff"/>
<path d="M637.7 228.7L573 682L607 686L646.1 225.4Z" fill="#7200ff"/>
<path d="M642.0 227.0L590 684L624 687L650.1 223.8Z" fill="#8f00ff"/>
<path d="M646.1 225.4L607 686L641 688L654.0 222.2Z" fill="#b000ff"/>
<path d="M650.1 223.8L624 687L658 688L657.8 220.7Z" fill="#d200ff"/>
<path d="M654.0 222.2L641 688L675 688L661.5 219.2Z" fill="#f500ff"/>
<path d="M657.8 220.7L658 688L692 687L665.2 217.7Z" fill="#ff00ea"/>
<path d="M661.5 219.2L675 688L709 686L668.7 216.3Z" fill="#ff00d2"/>
<path d="M665.2 217.7L692 687L726 684L672.2 214.9Z" fill="#ff00c0"/>
<path d="M668.7 216.3L709 686L743 682L675.7 213.5Z" fill="#ff00b1"/>
<path d="M672.2 214.9L726 684L760 679L679.1 212.1Z" fill="#ff00a4"/>
<path d="M675.7 213.5L743 682L777 676L682.5 210.8Z" fill="#ff0098"/>
<path d="M679.1 212.1L760 679L793 673L685.8 209.5Z" fill="#ff008d"/>
<path d="M682.5 210.8L777 676L810 669L689.1 208.1Z" fill="#ff0083"/>
<path d="M685.8 209.5L793 673L826 664L692.4 206.8Z" fill="#ff007a"/>
<path d="M689.1 208.1L810 669L843 659L695.7 205.5Z" fill="#ff0072"/>
<path d="M692.4 206.8L826 664L859 654L698.9 204.2Z" fill="#ff006a"/>
<path d="M695.7 205.5L843 659L875 648L702.2 202.9Z" fill="#ff0062"/>
<path d="M698.9 204.2L859 654L890 641L705.5 201.7Z" fill="#ff005c"/>
<path d="M702.2 202.9L875 648L906 634L708.7 200.4Z" fill="#ff0055"/>
<path d="M705.5 201.7L890 641L922 627L712.0 199.1Z" fill="#ff004f"/>
<path d="M708.7 200.4L906 634L937 619L715.3 197.8Z" fill="#ff004a"/>
<path d="M712.0 199.1L922 627L952 611L718.6 196.5Z" fill="#ff0044"/>
<path d="M715.3 197.8L937 619L966 603L721.9 195.2Z" fill="#ff003f"/>
<path d="M718.6 196.5L952 611L981 594L725.2 193.8Z" fill="#ff003b"/>
<path d="M721.9 195.2L966 603L995 584L728.6 192.5Z" fill="#ff0036"/>
<path d="M725.2 193.8L981 594L1009 575L732.1 191.2Z" fill="#ff0032"/>
<path d="M728.6 192.5L995 584L1023 564L735.6 189.8Z" fill="#ff002e"/>
<path d="M732.1 191.2L1009 575L1036 554L739.1 188.4Z" fill="#ff002a"/>
<path d="M735.6 189.8L1023 564L1049 543L742.7 187.0Z" fill="#ff0026"/>
<path d="M739.1 188.4L1036 554L1062 532L746.4 185.5Z" fill="#ff0023"/>
<path d="M742.7 187.0L1049 543L1074 520L750.2 184.0Z" fill="#ff001f"/>
<path d="M746.4 185.5L1062 532L1086 508L754.1 182.5Z" fill="#ff001c"/>
<path d="M750.2 184.0L1074 520L1098 496L758.0 181.0Z" fill="#ff0019"/>
<path d="M754.1 182.5L1086 508L1110 483L762.1 179.4Z" fill="#ff0016"/>
<path d="M758.0 181.0L1098 496L1121 470L766.3 177.7Z" fill="#ff0013"/>
<path d="M762.1 179.4L1110 483L1131 457L770.6 176.0Z" fill="#ff0010"/>
<path d="M766.3 177.7L1121 470L1142 443L775.1 174.3Z" fill="#ff000d"/>
<path d="M770.6 176.0L1131 457L1151 429L779.8 172.5Z" fill="#ff000a"/>
<path d="M775.1 174.3L1142 443L1161 415L784.6 170.6Z" fill="#ff0008"/>
<path d="M779.8 172.5L1151 429L1170 400L789.6 168.6Z" fill="#ff0005"/>
<path d="M784.6 170.6L1161 415L1179 386L794.9 166.6Z" fill="#ff0003"/>
<path d="M789.6 168.6L1170 400L1179 386L794.9 166.6Z" fill="#ff0001"/>
<rect x="530" y="10" width="350" height="260" fill="#000" fill-opacity="0.39"/>
<g mask="url(#tri)">
<path d="M657.3 171.7L797.4 171.7L797.0 181.5Z" fill="url(#w0)"/>
<path d="M657.3 171.7L786.2 176.2L785.6 185.2Z" fill="url(#w1)"/>
<path d="M657.3 171.7L776.7 180.1L775.8 188.4Z" fill="url(#w2)"/>
<path d="M657.3 171.7L768.5 183.4L767.4 191.1Z" fill="url(#w3)"/>
<path d="M657.3 171.7L761.3 186.3L760.0 193.6Z" fill="url(#w4)"/>
<path d="M657.3 171.7L754.9 188.9L753.4 195.7Z" fill="url(#w5)"/>
<path d="M657.3 171.7L749.2 191.3L747.6 197.6Z" fill="url(#w6)"/>
<path d="M657.3 171.7L744.1 193.4L742.3 199.4Z" fill="url(#w7)"/>
<path d="M657.3 171.7L739.4 195.3L737.6 201.0Z" fill="url(#w8)"/>
<path d="M657.3 171.7L735.1 197.0L733.2 202.4Z" fill="url(#w9)"/>
<path d="M657.3 171.7L731.2 198.6L729.2 203.7Z" fill="url(#w10)"/>
<path d="M657.3 171.7L727.6 200.1L725.4 205.0Z" fill="url(#w11)"/>
<path d="M657.3 171.7L724.2 201.5L722.0 206.1Z" fill="url(#w12)"/>
<path d="M657.3 171.7L721.1 202.8L718.7 207.2Z" fill="url(#w13)"/>
<path d="M657.3 171.7L718.1 204.1L715.7 208.2Z" fill="url(#w14)"/>
<path d="M657.3 171.7L715.3 205.2L712.8 209.2Z" fill="url(#w15)"/>
<path d="M657.3 171.7L712.7 206.3L710.1 210.1Z" fill="url(#w16)"/>
<path d="M657.3 171.7L710.1 207.4L707.5 211.0Z" fill="url(#w17)"/>
<path d="M657.3 171.7L707.7 208.4L705.0 211.8Z" fill="url(#w18)"/>
<path d="M657.3 171.7L705.4 209.3L702.7 212.6Z" fill="url(#w19)"/>
<path d="M657.3 171.7L703.2 210.3L700.4 213.4Z" fill="url(#w20)"/>
<path d="M657.3 171.7L701.1 211.1L698.2 214.1Z" fill="url(#w21)"/>
<path d="M657.3 171.7L699.0 212.0L696.1 214.8Z" fill="url(#w22)"/>
<path d="M657.3 171.7L697.0 212.8L694.0 215.5Z" fill="url(#w23)"/>
<path d="M657.3 171.7L695.0 213.6L692.0 216.2Z" fill="url(#w24)"/>
<path d="M657.3 171.7L693.1 214.4L690.0 216.8Z" fill="url(#w25)"/>
<path d="M657.3 171.7L691.2 215.2L688.1 217.4Z" fill="url(#w26)"/>
<path d="M657.3 171.7L689.4 215.9L686.2 218.1Z" fill="url(#w27)"/>
<path d="M657.3 171.7L687.6 216.7L684.4 218.7Z" fill="url(#w28)"/>
<path d="M657.3 171.7L685.8 217.4L682.6 219.3Z" fill="url(#w29)"/>
<path d="M657.3 171.7L684.1 218.1L680.8 219.9Z" fill="url(#w30)"/>
<path d="M657.3 171.7L682.3 218.8L679.0 220.4Z" fill="url(#w31)"/>
<path d="M657.3 171.7L680.6 219.5L677.2 221.0Z" fill="url(#w32)"/>
<path d="M657.3 171.7L678.9 220.2L675.4 221.6Z" fill="url(#w33)"/>
<path d="M657.3 171.7L677.2 221.0L673.7 222.2Z" fill="url(#w34)"/>
<path d="M657.3 171.7L675.5 221.8L672.0 222.9Z" fill="url(#w35)"/>
<path d="M657.3 171.7L673.8 222.6L670.2 223.6Z" fill="url(#w36)"/>
<path d="M657.3 171.7L672.1 223.4L668.5 224.3Z" fill="url(#w37)"/>
<path d="M657.3 171.7L670.4 224.2L666.7 225.0Z" fill="url(#w38)"/>
<path d="M657.3 171.7L668.6 225.0L664.9 225.7Z" fill="url(#w39)"/>
<path d="M657.3 171.7L666.8 225.8L663.0 226.4Z" fill="url(#w40)"/>
<path d="M657.3 171.7L665.0 226.7L661.2 227.1Z" fill="url(#w41)"/>
<path d="M657.3 171.7L663.1 227.6L659.2 227.8Z" fill="url(#w42)"/>
<path d="M657.3 171.7L661.2 228.4L657.3 228.6Z" fill="url(#w43)"/>
<path d="M657.3 171.7L659.3 229.3L655.3 229.3Z" fill="url(#w44)"/>
<path d="M657.3 171.7L657.3 230.3L653.2 230.1Z" fill="url(#w45)"/>
<path d="M657.3 171.7L655.2 231.2L651.1 230.9Z" fill="url(#w46)"/>
<path d="M657.3 171.7L653.1 232.2L648.8 231.8Z" fill="url(#w47)"/>
<path d="M657.3 171.7L650.8 233.3L646.5 232.7Z" fill="url(#w48)"/>
<path d="M657.3 171.7L648.5 234.3L644.1 233.6Z" fill="url(#w49)"/>
<path d="M657.3 171.7L646.0 235.4L641.6 234.5Z" fill="url(#w50)"/>
<path d="M657.3 171.7L643.5 236.6L639.0 235.5Z" fill="url(#w51)"/>
<path d="M657.3 171.7L640.8 237.9L636.2 236.6Z" fill="url(#w52)"/>
<path d="M657.3 171.7L637.9 239.2L633.3 237.7Z" fill="url(#w53)"/>
<path d="M657.3 171.7L634.9 240.6L630.2 238.8Z" fill="url(#w54)"/>
<path d="M657.3 171.7L631.7 242.1L626.8 240.1Z" fill="url(#w55)"/>
<path d="M657.3 171.7L628.2 243.7L623.3 241.5Z" fill="url(#w56)"/>
<path d="M657.3 171.7L624.5 245.4L619.4 242.9Z" fill="url(#w57)"/>
<path d="M657.3 171.7L620.4 247.3L615.3 244.5Z" fill="url(#w58)"/>
<path d="M657.3 171.7L616.0 249.3L610.7 246.2Z" fill="url(#w59)"/>
<path d="M657.3 171.7L611.2 251.6L605.7 248.2Z" fill="url(#w60)"/>
<path d="M657.3 171.7L605.8 254.1L600.2 250.3Z" fill="url(#w61)"/>
<path d="M657.3 171.7L599.9 256.9L594.1 252.6Z" fill="url(#w62)"/>
<path d="M657.3 171.7L596.9 254.8L591.3 250.4Z" fill="url(#w63)"/>
<path d="M657.3 171.7L592.2 255.1L586.5 250.3Z" fill="url(#w64)"/>
<path d="M657.3 171.7L592.2 249.3L586.9 244.6Z" fill="url(#w65)"/>
<path d="M657.3 171.7L595.6 240.2L591.0 235.8Z" fill="url(#w66)"/>
<path d="M657.3 171.7L598.5 232.6L594.4 228.4Z" fill="url(#w67)"/>
<path d="M657.3 171.7L600.9 226.2L597.2 222.1Z" fill="url(#w68)"/>
<path d="M657.3 171.7L602.9 220.7L599.7 216.7Z" fill="url(#w69)"/>
<path d="M657.3 171.7L604.7 215.8L601.8 212.0Z" fill="url(#w70)"/>
<path d="M657.3 171.7L606.3 211.5L603.7 207.9Z" fill="url(#w71)"/>
<path d="M657.3 171.7L607.7 207.7L605.3 204.2Z" fill="url(#w72)"/>
<path d="M657.3 171.7L609.0 204.3L606.8 200.9Z" fill="url(#w73)"/>
<path d="M657.3 171.7L610.1 201.2L608.2 197.8Z" fill="url(#w74)"/>
<path d="M657.3 171.7L611.1 198.4L609.4 195.1Z" fill="url(#w75)"/>
<path d="M657.3 171.7L612.1 195.8L610.5 192.6Z" fill="url(#w76)"/>
<path d="M657.3 171.7L613.0 193.4L611.6 190.2Z" fill="url(#w77)"/>
<path d="M657.3 171.7L613.8 191.1L612.5 188.0Z" fill="url(#w78)"/>
<path d="M657.3 171.7L614.5 189.0L613.4 186.0Z" fill="url(#w79)"/>
<path d="M657.3 171.7L615.2 187.0L614.3 184.1Z" fill="url(#w80)"/>
<path d="M657.3 171.7L615.9 185.2L615.1 182.3Z" fill="url(#w81)"/>
<path d="M657.3 171.7L616.5 183.4L615.8 180.5Z" fill="url(#w82)"/>
<path d="M657.3 171.7L617.1 181.7L616.5 178.9Z" fill="url(#w83)"/>
<path d="M657.3 171.7L617.7 180.1L617.2 177.4Z" fill="url(#w84)"/>
<path d="M657.3 171.7L618.2 178.6L617.9 175.9Z" fill="url(#w85)"/>
<path d="M657.3 171.7L618.8 177.1L618.5 174.4Z" fill="url(#w86)"/>
<path d="M657.3 171.7L619.3 175.7L619.1 173.1Z" fill="url(#w87)"/>
<path d="M657.3 171.7L619.8 174.4L619.7 171.7Z" fill="url(#w88)"/>
<path d="M657.3 171.7L620.3 173.0L620.3 170.4Z" fill="url(#w89)"/>
<path d="M657.3 171.7L620.7 171.7L620.8 169.2Z" fill="url(#w90)"/>
<path d="M657.3 171.7L621.2 170.5L621.4 168.0Z" fill="url(#w91)"/>
<path d="M657.3 171.7L621.6 169.2L621.9 166.8Z" fill="url(#w92)"/>
<path d="M657.3 171.7L622.1 168.0L622.4 165.6Z" fill="url(#w93)"/>
<path d="M657.3 171.7L622.5 166.8L622.9 164.4Z" fill="url(#w94)"/>
<path d="M657.3 171.7L623.0 165.7L623.5 163.3Z" fill="url(#w95)"/>
<path d="M657.3 171.7L623.4 164.5L624.0 162.2Z" fill="url(#w96)"/>
<path d="M657.3 171.7L623.8 163.4L624.5 161.1Z" fill="url(#w97)"/>
<path d="M657.3 171.7L624.2 162.3L625.0 160.0Z" fill="url(#w98)"/>
<path d="M657.3 171.7L624.7 161.1L625.5 158.9Z" fill="url(#w99)"/>
<path d="M657.3 171.7L625.1 160.0L626.0 157.8Z" fill="url(#w100)"/>
<path d="M657.3 171.7L625.4 158.9L626.4 156.7Z" fill="url(#w101)"/>
<path d="M657.3 171.7L625.8 157.7L626.8 155.5Z" fill="url(#w102)"/>
<path d="M657.3 171.7L626.2 156.6L627.3 154.4Z" fill="url(#w103)"/>
<path d="M657.3 171.7L626.5 155.4L627.7 153.3Z" fill="url(#w104)"/>
<path d="M657.3 171.7L626.9 154.2L628.2 152.1Z" fill="url(#w105)"/>
<path d="M657.3 171.7L627.3 153.0L628.7 150.9Z" fill="url(#w106)"/>
<path d="M657.3 171.7L627.7 151.8L629.2 149.8Z" fill="url(#w107)"/>
<path d="M657.3 171.7L628.1 150.5L629.6 148.5Z" fill="url(#w108)"/>
<path d="M657.3 171.7L628.5 149.3L630.2 147.3Z" fill="url(#w109)"/>
<path d="M657.3 171.7L628.9 148.0L630.7 146.0Z" fill="url(#w110)"/>
<path d="M657.3 171.7L629.4 146.6L631.2 144.7Z" fill="url(#w111)"/>
<path d="M657.3 171.7L629.8 145.2L631.8 143.4Z" fill="url(#w112)"/>
<path d="M657.3 171.7L630.3 143.8L632.3 142.0Z" fill="url(#w113)"/>
<path d="M657.3 171.7L630.8 142.3L632.9 140.6Z" fill="url(#w114)"/>
<path d="M657.3 171.7L631.3 140.8L633.6 139.1Z" fill="url(#w115)"/>
<path d="M657.3 171.7L631.9 139.2L634.2 137.5Z" fill="url(#w116)"/>
<path d="M657.3 171.7L632.4 137.5L634.9 135.9Z" fill="url(#w117)"/>
<path d="M657.3 171.7L633.0 135.8L635.6 134.2Z" fill="url(#w118)"/>
<path d="M657.3 171.7L633.6 133.9L636.3 132.4Z" fill="url(#w119)"/>
<path d="M657.3 171.7L634.3 131.9L637.1 130.4Z" fill="url(#w120)"/>
<path d="M657.3 171.7L635.0 129.8L638.0 128.4Z" fill="url(#w121)"/>
<path d="M657.3 171.7L635.8 127.6L638.9 126.2Z" fill="url(#w122)"/>
<path d="M657.3 171.7L636.6 125.2L639.9 123.8Z" fill="url(#w123)"/>
<path d="M657.3 171.7L637.4 122.6L640.9 121.3Z" fill="url(#w124)"/>
<path d="M657.3 171.7L638.4 119.7L642.0 118.5Z" fill="url(#w125)"/>
<path d="M657.3 171.7L639.4 116.6L643.3 115.5Z" fill="url(#w126)"/>
<path d="M657.3 171.7L640.5 113.2L644.6 112.2Z" fill="url(#w127)"/>
<path d="M657.3 171.7L641.7 109.4L646.1 108.5Z" fill="url(#w128)"/>
<path d="M657.3 171.7L643.1 105.1L647.8 104.3Z" fill="url(#w129)"/>
<path d="M657.3 171.7L644.7 100.3L649.7 99.6Z" fill="url(#w130)"/>
<path d="M657.3 171.7L646.5 94.7L651.9 94.2Z" fill="url(#w131)"/>
<path d="M657.3 171.7L648.5 88.3L654.4 87.9Z" fill="url(#w132)"/>
<path d="M657.3 171.7L650.9 80.7L657.3 80.5Z" fill="url(#w133)"/>
<path d="M657.3 171.7L654.1 80.6L660.5 80.6Z" fill="url(#w134)"/>
<path d="M657.3 171.7L657.3 80.0L663.7 80.2Z" fill="url(#w135)"/>
<path d="M657.3 171.7L660.5 80.9L666.8 81.3Z" fill="url(#w136)"/>
<path d="M657.3 171.7L663.5 82.6L669.7 83.2Z" fill="url(#w137)"/>
<path d="M657.3 171.7L666.5 84.2L672.6 85.1Z" fill="url(#w138)"/>
<path d="M657.3 171.7L669.4 85.9L675.3 86.9Z" fill="url(#w139)"/>
<path d="M657.3 171.7L672.1 87.4L678.0 88.7Z" fill="url(#w140)"/>
<path d="M657.3 171.7L674.9 88.9L680.6 90.4Z" fill="url(#w141)"/>
<path d="M657.3 171.7L677.5 90.4L683.2 92.1Z" fill="url(#w142)"/>
<path d="M657.3 171.7L680.2 91.9L685.7 93.7Z" fill="url(#w143)"/>
<path d="M657.3 171.7L682.7 93.4L688.1 95.3Z" fill="url(#w144)"/>
<path d="M657.3 171.7L685.3 94.8L690.6 96.9Z" fill="url(#w145)"/>
<path d="M657.3 171.7L687.8 96.2L693.0 98.5Z" fill="url(#w146)"/>
<path d="M657.3 171.7L690.3 97.6L695.4 100.1Z" fill="url(#w147)"/>
<path d="M657.3 171.7L692.7 99.0L697.7 101.7Z" fill="url(#w148)"/>
<path d="M657.3 171.7L695.2 100.4L700.1 103.2Z" fill="url(#w149)"/>
<path d="M657.3 171.7L697.7 101.6L702.5 104.6Z" fill="url(#w150)"/>
<path d="M657.3 171.7L700.3 102.9L705.0 106.1Z" fill="url(#w151)"/>
<path d="M657.3 171.7L702.9 104.1L707.5 107.5Z" fill="url(#w152)"/>
<path d="M657.3 171.7L705.5 105.4L710.0 108.9Z" fill="url(#w153)"/>
<path d="M657.3 171.7L708.1 106.7L712.5 110.4Z" fill="url(#w154)"/>
<path d="M657.3 171.7L710.8 108.0L715.1 111.9Z" fill="url(#w155)"/>
<path d="M657.3 171.7L713.5 109.3L717.7 113.4Z" fill="url(#w156)"/>
<path d="M657.3 171.7L716.2 110.7L720.4 114.9Z" fill="url(#w157)"/>
<path d="M657.3 171.7L719.1 112.1L723.1 116.5Z" fill="url(#w158)"/>
<path d="M657.3 171.7L722.0 113.5L725.9 118.1Z" fill="url(#w159)"/>
<path d="M657.3 171.7L724.9 115.0L728.7 119.8Z" fill="url(#w160)"/>
<path d="M657.3 171.7L728.0 116.5L731.7 121.5Z" fill="url(#w161)"/>
<path d="M657.3 171.7L731.2 118.0L734.7 123.3Z" fill="url(#w162)"/>
<path d="M657.3 171.7L734.5 119.7L737.9 125.2Z" fill="url(#w163)"/>
<path d="M657.3 171.7L737.9 121.4L741.2 127.1Z" fill="url(#w164)"/>
<path d="M657.3 171.7L741.5 123.1L744.7 129.1Z" fill="url(#w165)"/>
<path d="M657.3 171.7L745.2 125.0L748.3 131.2Z" fill="url(#w166)"/>
<path d="M657.3 171.7L749.1 126.9L752.0 133.4Z" fill="url(#w167)"/>
<path d="M657.3 171.7L753.3 129.0L756.0 135.8Z" fill="url(#w168)"/>
<path d="M657.3 171.7L757.7 131.2L760.3 138.3Z" fill="url(#w169)"/>
<path d="M657.3 171.7L762.4 133.5L764.8 140.9Z" fill="url(#w170)"/>
<path d="M657.3 171.7L767.4 136.0L769.6 143.7Z" fill="url(#w171)"/>
<path d="M657.3 171.7L772.8 138.6L774.8 146.8Z" fill="url(#w172)"/>
<path d="M657.3 171.7L778.6 141.5L780.4 150.0Z" fill="url(#w173)"/>
<path d="M657.3 171.7L784.9 144.6L786.5 153.6Z" fill="url(#w174)"/>
<path d="M657.3 171.7L791.9 148.0L793.2 157.5Z" fill="url(#w175)"/>
<path d="M657.3 171.7L799.5 151.7L800.5 161.7Z" fill="url(#w176)"/>
<path d="M657.3 171.7L807.9 155.9L808.7 166.4Z" fill="url(#w177)"/>
<path d="M657.3 171.7L808.4 161.2L808.8 171.7Z" fill="url(#w178)"/>
<path d="M657.3 171.7L808.7 166.4L808.7 177.0Z" fill="url(#w179)"/>
<circle cx="657.3" cy="171.7" r="1.2" fill="#fff"/>
</g>
</g>
<rect x="535.5" y="17.4" width="342.29999999999995" height="246.6" fill="none" stroke="#8c8c8c" stroke-width="1"/>
<line x1="535.5" y1="264.0" x2="535.5" y2="267.0" stroke="#8c8c8c"/>
<text x="534.9" y="274.6" font-size="7.4" fill="#d0d0d0" text-anchor="middle" textLength="4.2" lengthAdjust="spacingAndGlyphs">0</text>
<line x1="576.2" y1="264.0" x2="576.2" y2="267.0" stroke="#8c8c8c"/>
<text x="575.6" y="274.6" font-size="7.4" fill="#d0d0d0" text-anchor="middle" textLength="11" lengthAdjust="spacingAndGlyphs">0.1</text>
<line x1="532.5" y1="234.7" x2="535.5" y2="234.7" stroke="#8c8c8c"/>
<text x="531.8" y="238.0" font-size="7.4" fill="#d0d0d0" text-anchor="end" textLength="11" lengthAdjust="spacingAndGlyphs">0.1</text>
<line x1="617.0" y1="264.0" x2="617.0" y2="267.0" stroke="#8c8c8c"/>
<text x="616.4" y="274.6" font-size="7.4" fill="#d0d0d0" text-anchor="middle" textLength="11" lengthAdjust="spacingAndGlyphs">0.2</text>
<line x1="532.5" y1="205.4" x2="535.5" y2="205.4" stroke="#8c8c8c"/>
<text x="531.8" y="208.7" font-size="7.4" fill="#d0d0d0" text-anchor="end" textLength="11" lengthAdjust="spacingAndGlyphs">0.2</text>
<line x1="657.7" y1="264.0" x2="657.7" y2="267.0" stroke="#8c8c8c"/>
<text x="657.1" y="274.6" font-size="7.4" fill="#d0d0d0" text-anchor="middle" textLength="11" lengthAdjust="spacingAndGlyphs">0.3</text>
<line x1="532.5" y1="176.1" x2="535.5" y2="176.1" stroke="#8c8c8c"/>
<text x="531.8" y="179.4" font-size="7.4" fill="#d0d0d0" text-anchor="end" textLength="11" lengthAdjust="spacingAndGlyphs">0.3</text>
<line x1="698.4" y1="264.0" x2="698.4" y2="267.0" stroke="#8c8c8c"/>
<text x="697.8" y="274.6" font-size="7.4" fill="#d0d0d0" text-anchor="middle" textLength="11" lengthAdjust="spacingAndGlyphs">0.4</text>
<line x1="532.5" y1="146.8" x2="535.5" y2="146.8" stroke="#8c8c8c"/>
<text x="531.8" y="150.1" font-size="7.4" fill="#d0d0d0" text-anchor="end" textLength="11" lengthAdjust="spacingAndGlyphs">0.4</text>
<line x1="739.1" y1="264.0" x2="739.1" y2="267.0" stroke="#8c8c8c"/>
<text x="738.5" y="274.6" font-size="7.4" fill="#d0d0d0" text-anchor="middle" textLength="11" lengthAdjust="spacingAndGlyphs">0.5</text>
<line x1="532.5" y1="117.5" x2="535.5" y2="117.5" stroke="#8c8c8c"/>
<text x="531.8" y="120.8" font-size="7.4" fill="#d0d0d0" text-anchor="end" textLength="11" lengthAdjust="spacingAndGlyphs">0.5</text>
<line x1="779.9" y1="264.0" x2="779.9" y2="267.0" stroke="#8c8c8c"/>
<text x="779.3" y="274.6" font-size="7.4" fill="#d0d0d0" text-anchor="middle" textLength="11" lengthAdjust="spacingAndGlyphs">0.6</text>
<line x1="532.5" y1="88.2" x2="535.5" y2="88.2" stroke="#8c8c8c"/>
<text x="531.8" y="91.5" font-size="7.4" fill="#d0d0d0" text-anchor="end" textLength="11" lengthAdjust="spacingAndGlyphs">0.6</text>
<line x1="820.6" y1="264.0" x2="820.6" y2="267.0" stroke="#8c8c8c"/>
<text x="820.0" y="274.6" font-size="7.4" fill="#d0d0d0" text-anchor="middle" textLength="11" lengthAdjust="spacingAndGlyphs">0.7</text>
<line x1="532.5" y1="58.9" x2="535.5" y2="58.9" stroke="#8c8c8c"/>
<text x="531.8" y="62.2" font-size="7.4" fill="#d0d0d0" text-anchor="end" textLength="11" lengthAdjust="spacingAndGlyphs">0.7</text>
<line x1="861.3" y1="264.0" x2="861.3" y2="267.0" stroke="#8c8c8c"/>
<text x="860.7" y="274.6" font-size="7.4" fill="#d0d0d0" text-anchor="middle" textLength="11" lengthAdjust="spacingAndGlyphs">0.8</text>
<line x1="532.5" y1="29.6" x2="535.5" y2="29.6" stroke="#8c8c8c"/>
<text x="531.8" y="32.9" font-size="7.4" fill="#d0d0d0" text-anchor="end" textLength="11" lengthAdjust="spacingAndGlyphs">0.8</text>
<text x="531.8" y="267.6" font-size="7.4" fill="#d0d0d0" text-anchor="end" textLength="4.2" lengthAdjust="spacingAndGlyphs">0</text>
<text x="700" y="14.2" font-size="7.8" fill="#d0d0d0" text-anchor="middle" textLength="40" lengthAdjust="spacingAndGlyphs">CIE 1931 xy</text>
<rect x="742" y="248" width="135.3" height="13.4" fill="#3a3a3a" fill-opacity="0.85"/>
<text x="743.5" y="258.6" font-size="11" fill="#f4f4f4" textLength="108.5" lengthAdjust="spacingAndGlyphs" xml:space="preserve">Gamut Coverage:  99%</text>
<rect x="759.1" y="20.6" width="116.1" height="92.6" fill="url(#in1)"/>
<rect x="759.1" y="20.6" width="116.1" height="92.6" fill="url(#in2)" mask="url(#inmask)"/>
<rect x="759.1" y="20.6" width="116.1" height="92.6" fill="url(#ing)"/>
<rect x="759.1" y="20.6" width="116.1" height="92.6" fill="none" stroke="#a8a8a8" stroke-width="1"/>
<rect x="812.7" y="63" width="7" height="7" fill="none" stroke="#222" stroke-width="1"/>
<circle cx="803.5" cy="89.1" r="2.1" fill="#fff" stroke="#333" stroke-width="0.9"/>
<circle cx="797.3" cy="93.6" r="2.1" fill="#bbb" stroke="#333" stroke-width="0.9"/>
<rect x="792.2" y="163.6" width="7" height="7" fill="none" stroke="#eeeeee" stroke-width="0.9"/>
<rect x="653.7" y="84.5" width="7" height="7" fill="none" stroke="#eeeeee" stroke-width="0.9"/>
<rect x="592.6" y="242.7" width="7" height="7" fill="none" stroke="#eeeeee" stroke-width="0.9"/>
<rect x="621.0" y="168.7" width="7" height="7" fill="none" stroke="#eeeeee" stroke-width="0.9"/>
<rect x="653.0" y="218.5" width="7" height="7" fill="none" stroke="#eeeeee" stroke-width="0.9"/>
<rect x="699.8" y="110.6" width="7" height="7" fill="none" stroke="#eeeeee" stroke-width="0.9"/>
<rect x="654.0" y="167.8" width="7" height="7" fill="none" stroke="#1a1a1a" stroke-width="1"/>
<circle cx="800.9" cy="166.7" r="1.8" fill="#b00000" stroke="#1c1c1c" stroke-opacity="0.6" stroke-width="0.7"/>
<circle cx="660.7" cy="76.3" r="2.1" fill="#2cb82c" stroke="#1c1c1c" stroke-opacity="0.6" stroke-width="0.7"/>
<circle cx="597.8" cy="253.7" r="1.7" fill="#101090" stroke="#1c1c1c" stroke-opacity="0.6" stroke-width="0.7"/>
<circle cx="624.5" cy="178.2" r="1.9" fill="#30b890" stroke="#1c1c1c" stroke-opacity="0.6" stroke-width="0.7"/>
<circle cx="649.3" cy="231.8" r="1.5" fill="#e010b0" stroke="#1c1c1c" stroke-opacity="0.6" stroke-width="0.7"/>
<circle cx="705.1" cy="104.4" r="2.1" fill="#c4c028" stroke="#1c1c1c" stroke-opacity="0.6" stroke-width="0.7"/>
<circle cx="653.9" cy="176.1" r="1.9" fill="#bbb" stroke="#333" stroke-width="0.8"/>
<circle cx="654.9" cy="175.4" r="1.9" fill="#fff" stroke="#333" stroke-width="0.8"/>
<text x="8.2" y="312.2" font-size="15.6" fill="#f0f0f0" textLength="115.6" lengthAdjust="spacingAndGlyphs">Current Reading</text>
<text x="8.2" y="332.7" font-size="12.3" fill="#f0f0f0" textLength="53.8" lengthAdjust="spacingAndGlyphs">x: 0.2932</text>
<text x="8.2" y="352.9" font-size="12.3" fill="#f0f0f0" textLength="54" lengthAdjust="spacingAndGlyphs">y: 0.3025</text>
<text x="8.2" y="373.4" font-size="12.3" fill="#f0f0f0" textLength="51" lengthAdjust="spacingAndGlyphs">fL: 27.85</text>
<text x="8.2" y="393.9" font-size="12.3" fill="#f0f0f0" textLength="76.7" lengthAdjust="spacingAndGlyphs">cd/m²: 95.43</text>
<rect x="187.8" y="301.7" width="133.7" height="90.40000000000003" fill="#262626"/>
<line x1="187.8" y1="324.3" x2="321.5" y2="324.3" stroke="#6a6a6a"/>
<line x1="187.8" y1="346.9" x2="321.5" y2="346.9" stroke="#6a6a6a"/>
<line x1="187.8" y1="369.5" x2="321.5" y2="369.5" stroke="#6a6a6a"/>
<path d="M187.8 392.1V301.7H321.5V392.1" fill="none" stroke="#8c8c8c"/>
<line x1="184.8" y1="301.7" x2="187.8" y2="301.7" stroke="#8c8c8c"/>
<text x="184.6" y="304.7" font-size="8.3" fill="#d0d0d0" text-anchor="end" textLength="7.4" lengthAdjust="spacingAndGlyphs">20</text>
<line x1="184.8" y1="324.3" x2="187.8" y2="324.3" stroke="#8c8c8c"/>
<text x="184.6" y="327.3" font-size="8.3" fill="#d0d0d0" text-anchor="end" textLength="7.4" lengthAdjust="spacingAndGlyphs">10</text>
<line x1="184.8" y1="346.9" x2="187.8" y2="346.9" stroke="#8c8c8c"/>
<text x="184.6" y="349.9" font-size="8.3" fill="#d0d0d0" text-anchor="end" textLength="3.7" lengthAdjust="spacingAndGlyphs">0</text>
<line x1="184.8" y1="369.5" x2="187.8" y2="369.5" stroke="#8c8c8c"/>
<text x="184.6" y="372.5" font-size="8.3" fill="#d0d0d0" text-anchor="end" textLength="9.7" lengthAdjust="spacingAndGlyphs">-10</text>
<line x1="184.8" y1="392.1" x2="187.8" y2="392.1" stroke="#8c8c8c"/>
<text x="184.6" y="395.1" font-size="8.3" fill="#d0d0d0" text-anchor="end" textLength="9.7" lengthAdjust="spacingAndGlyphs">-20</text>
<line x1="187.8" y1="392.1" x2="187.8" y2="395.1" stroke="#8c8c8c"/>
<line x1="321.5" y1="392.1" x2="321.5" y2="395.1" stroke="#8c8c8c"/>
<text x="247.5" y="299" font-size="8.3" fill="#d0d0d0" text-anchor="middle" textLength="43" lengthAdjust="spacingAndGlyphs">RGB Balance</text>
<text x="253.8" y="400.6" font-size="8.3" fill="#d0d0d0" text-anchor="middle" textLength="20" lengthAdjust="spacingAndGlyphs">100W</text>
<rect x="201" y="343.5" width="35.7" height="3.9" fill="url(#bR)" stroke="#111" stroke-width="0.8"/>
<rect x="236.7" y="346.9" width="36" height="3.4" fill="url(#bG)" stroke="#111" stroke-width="0.8"/>
<rect x="272.7" y="320.4" width="36" height="27.3" fill="url(#bB)" stroke="#111" stroke-width="0.8"/>
<rect x="333" y="290.3" width="368" height="18.69999999999999" fill="url(#th)"/>
<rect x="333" y="309" width="368" height="17.600000000000023" fill="#3e3e3e"/>
<rect x="333" y="326.6" width="368" height="17.799999999999955" fill="#707070"/>
<rect x="333" y="344.4" width="368" height="17.30000000000001" fill="#3e3e3e"/>
<rect x="333" y="361.7" width="368" height="17.600000000000023" fill="#707070"/>
<rect x="333" y="379.3" width="368" height="17.599999999999966" fill="#3e3e3e"/>
<rect x="333" y="290.3" width="7.2" height="106.59999999999997" fill="#171717"/>
<rect x="333" y="290.3" width="7.2" height="18.69999999999999" fill="#060606"/>
<text x="384.8" y="303.2" font-size="9.6" fill="#f0f0f0" textLength="22.5" lengthAdjust="spacingAndGlyphs">White</text>
<text x="424.3" y="303.2" font-size="9.6" fill="#f0f0f0" textLength="14.5" lengthAdjust="spacingAndGlyphs">Red</text>
<text x="464.4" y="303.2" font-size="9.6" fill="#f0f0f0" textLength="23" lengthAdjust="spacingAndGlyphs">Green</text>
<text x="504.2" y="303.2" font-size="9.6" fill="#f0f0f0" textLength="16" lengthAdjust="spacingAndGlyphs">Blue</text>
<text x="539" y="303.2" font-size="9.6" fill="#f0f0f0" textLength="18" lengthAdjust="spacingAndGlyphs">Cyan</text>
<text x="578.6" y="303.2" font-size="9.6" fill="#f0f0f0" textLength="33" lengthAdjust="spacingAndGlyphs">Magenta</text>
<text x="618.4" y="303.2" font-size="9.6" fill="#f0f0f0" textLength="24" lengthAdjust="spacingAndGlyphs">Yellow</text>
<text x="658.2" y="303.2" font-size="9.6" fill="#f0f0f0" textLength="22" lengthAdjust="spacingAndGlyphs">100W</text>
<text x="343.2" y="321.6" font-size="11" fill="#f4f4f4" textLength="34" lengthAdjust="spacingAndGlyphs">x: CIE31</text>
<text x="384.8" y="321.6" font-size="11" fill="#f4f4f4" textLength="28.4" lengthAdjust="spacingAndGlyphs">0.2908</text>
<text x="424.3" y="321.6" font-size="11" fill="#f4f4f4" textLength="28.4" lengthAdjust="spacingAndGlyphs">0.6516</text>
<text x="464.4" y="321.6" font-size="11" fill="#f4f4f4" textLength="28.4" lengthAdjust="spacingAndGlyphs">0.3073</text>
<text x="504.2" y="321.6" font-size="11" fill="#f4f4f4" textLength="28.4" lengthAdjust="spacingAndGlyphs">0.1530</text>
<text x="539" y="321.6" font-size="11" fill="#f4f4f4" textLength="28.4" lengthAdjust="spacingAndGlyphs">0.2186</text>
<text x="578.6" y="321.6" font-size="11" fill="#f4f4f4" textLength="28.4" lengthAdjust="spacingAndGlyphs">0.2793</text>
<text x="618.4" y="321.6" font-size="11" fill="#f4f4f4" textLength="28.4" lengthAdjust="spacingAndGlyphs">0.4164</text>
<text x="658.2" y="321.6" font-size="11" fill="#f4f4f4" textLength="28.4" lengthAdjust="spacingAndGlyphs">0.2932</text>
<text x="343.2" y="339.2" font-size="11" fill="#f4f4f4" textLength="34" lengthAdjust="spacingAndGlyphs">y: CIE31</text>
<text x="384.8" y="339.2" font-size="11" fill="#f4f4f4" textLength="28.4" lengthAdjust="spacingAndGlyphs">0.3000</text>
<text x="424.3" y="339.2" font-size="11" fill="#f4f4f4" textLength="28.4" lengthAdjust="spacingAndGlyphs">0.3320</text>
<text x="464.4" y="339.2" font-size="11" fill="#f4f4f4" textLength="28.4" lengthAdjust="spacingAndGlyphs">0.6405</text>
<text x="504.2" y="339.2" font-size="11" fill="#f4f4f4" textLength="28.4" lengthAdjust="spacingAndGlyphs">0.0350</text>
<text x="539" y="339.2" font-size="11" fill="#f4f4f4" textLength="28.4" lengthAdjust="spacingAndGlyphs">0.2927</text>
<text x="578.6" y="339.2" font-size="11" fill="#f4f4f4" textLength="28.4" lengthAdjust="spacingAndGlyphs">0.1099</text>
<text x="618.4" y="339.2" font-size="11" fill="#f4f4f4" textLength="28.4" lengthAdjust="spacingAndGlyphs">0.5448</text>
<text x="658.2" y="339.2" font-size="11" fill="#f4f4f4" textLength="28.4" lengthAdjust="spacingAndGlyphs">0.3025</text>
<text x="343.2" y="357.0" font-size="11" fill="#f4f4f4" textLength="5.5" lengthAdjust="spacingAndGlyphs">Y</text>
<text x="384.8" y="357.0" font-size="11" fill="#f4f4f4" textLength="33.6" lengthAdjust="spacingAndGlyphs">50.9939</text>
<text x="424.3" y="357.0" font-size="11" fill="#f4f4f4" textLength="33.6" lengthAdjust="spacingAndGlyphs">10.3855</text>
<text x="464.4" y="357.0" font-size="11" fill="#f4f4f4" textLength="33.6" lengthAdjust="spacingAndGlyphs">39.3652</text>
<text x="504.2" y="357.0" font-size="11" fill="#f4f4f4" textLength="28.4" lengthAdjust="spacingAndGlyphs">3.5376</text>
<text x="539" y="357.0" font-size="11" fill="#f4f4f4" textLength="33.6" lengthAdjust="spacingAndGlyphs">42.7672</text>
<text x="578.6" y="357.0" font-size="11" fill="#f4f4f4" textLength="33.6" lengthAdjust="spacingAndGlyphs">13.3417</text>
<text x="618.4" y="357.0" font-size="11" fill="#f4f4f4" textLength="33.6" lengthAdjust="spacingAndGlyphs">48.4249</text>
<text x="658.2" y="357.0" font-size="11" fill="#f4f4f4" textLength="33.6" lengthAdjust="spacingAndGlyphs">95.4314</text>
<text x="343.2" y="374.3" font-size="11" fill="#f4f4f4" textLength="36.5" lengthAdjust="spacingAndGlyphs">Target Y</text>
<text x="384.8" y="374.3" font-size="11" fill="#f4f4f4" textLength="33.6" lengthAdjust="spacingAndGlyphs">50.9939</text>
<text x="424.3" y="374.3" font-size="11" fill="#f4f4f4" textLength="33.6" lengthAdjust="spacingAndGlyphs">10.0754</text>
<text x="464.4" y="374.3" font-size="11" fill="#f4f4f4" textLength="33.6" lengthAdjust="spacingAndGlyphs">36.7038</text>
<text x="504.2" y="374.3" font-size="11" fill="#f4f4f4" textLength="28.4" lengthAdjust="spacingAndGlyphs">4.2148</text>
<text x="539" y="374.3" font-size="11" fill="#f4f4f4" textLength="33.6" lengthAdjust="spacingAndGlyphs">40.9186</text>
<text x="578.6" y="374.3" font-size="11" fill="#f4f4f4" textLength="33.6" lengthAdjust="spacingAndGlyphs">14.2901</text>
<text x="618.4" y="374.3" font-size="11" fill="#f4f4f4" textLength="33.6" lengthAdjust="spacingAndGlyphs">46.7792</text>
<text x="658.2" y="374.3" font-size="11" fill="#f4f4f4" textLength="33.6" lengthAdjust="spacingAndGlyphs">95.4314</text>
<text x="343.2" y="391.9" font-size="11" fill="#f4f4f4" textLength="35.5" lengthAdjust="spacingAndGlyphs">ΔE 2000</text>
<text x="384.8" y="391.9" font-size="11" fill="#f4f4f4" textLength="28.4" lengthAdjust="spacingAndGlyphs">6.1738</text>
<text x="424.3" y="391.9" font-size="11" fill="#f4f4f4" textLength="28.4" lengthAdjust="spacingAndGlyphs">2.2021</text>
<text x="464.4" y="391.9" font-size="11" fill="#f4f4f4" textLength="28.4" lengthAdjust="spacingAndGlyphs">4.1541</text>
<text x="504.2" y="391.9" font-size="11" fill="#f4f4f4" textLength="28.4" lengthAdjust="spacingAndGlyphs">9.3297</text>
<text x="539" y="391.9" font-size="11" fill="#f4f4f4" textLength="28.4" lengthAdjust="spacingAndGlyphs">5.2014</text>
<text x="578.6" y="391.9" font-size="11" fill="#f4f4f4" textLength="28.4" lengthAdjust="spacingAndGlyphs">4.8278</text>
<text x="618.4" y="391.9" font-size="11" fill="#f4f4f4" textLength="28.4" lengthAdjust="spacingAndGlyphs">4.0788</text>
<text x="658.2" y="391.9" font-size="11" fill="#f4f4f4" textLength="28.4" lengthAdjust="spacingAndGlyphs">6.5973</text>
</svg>
</body></html>
